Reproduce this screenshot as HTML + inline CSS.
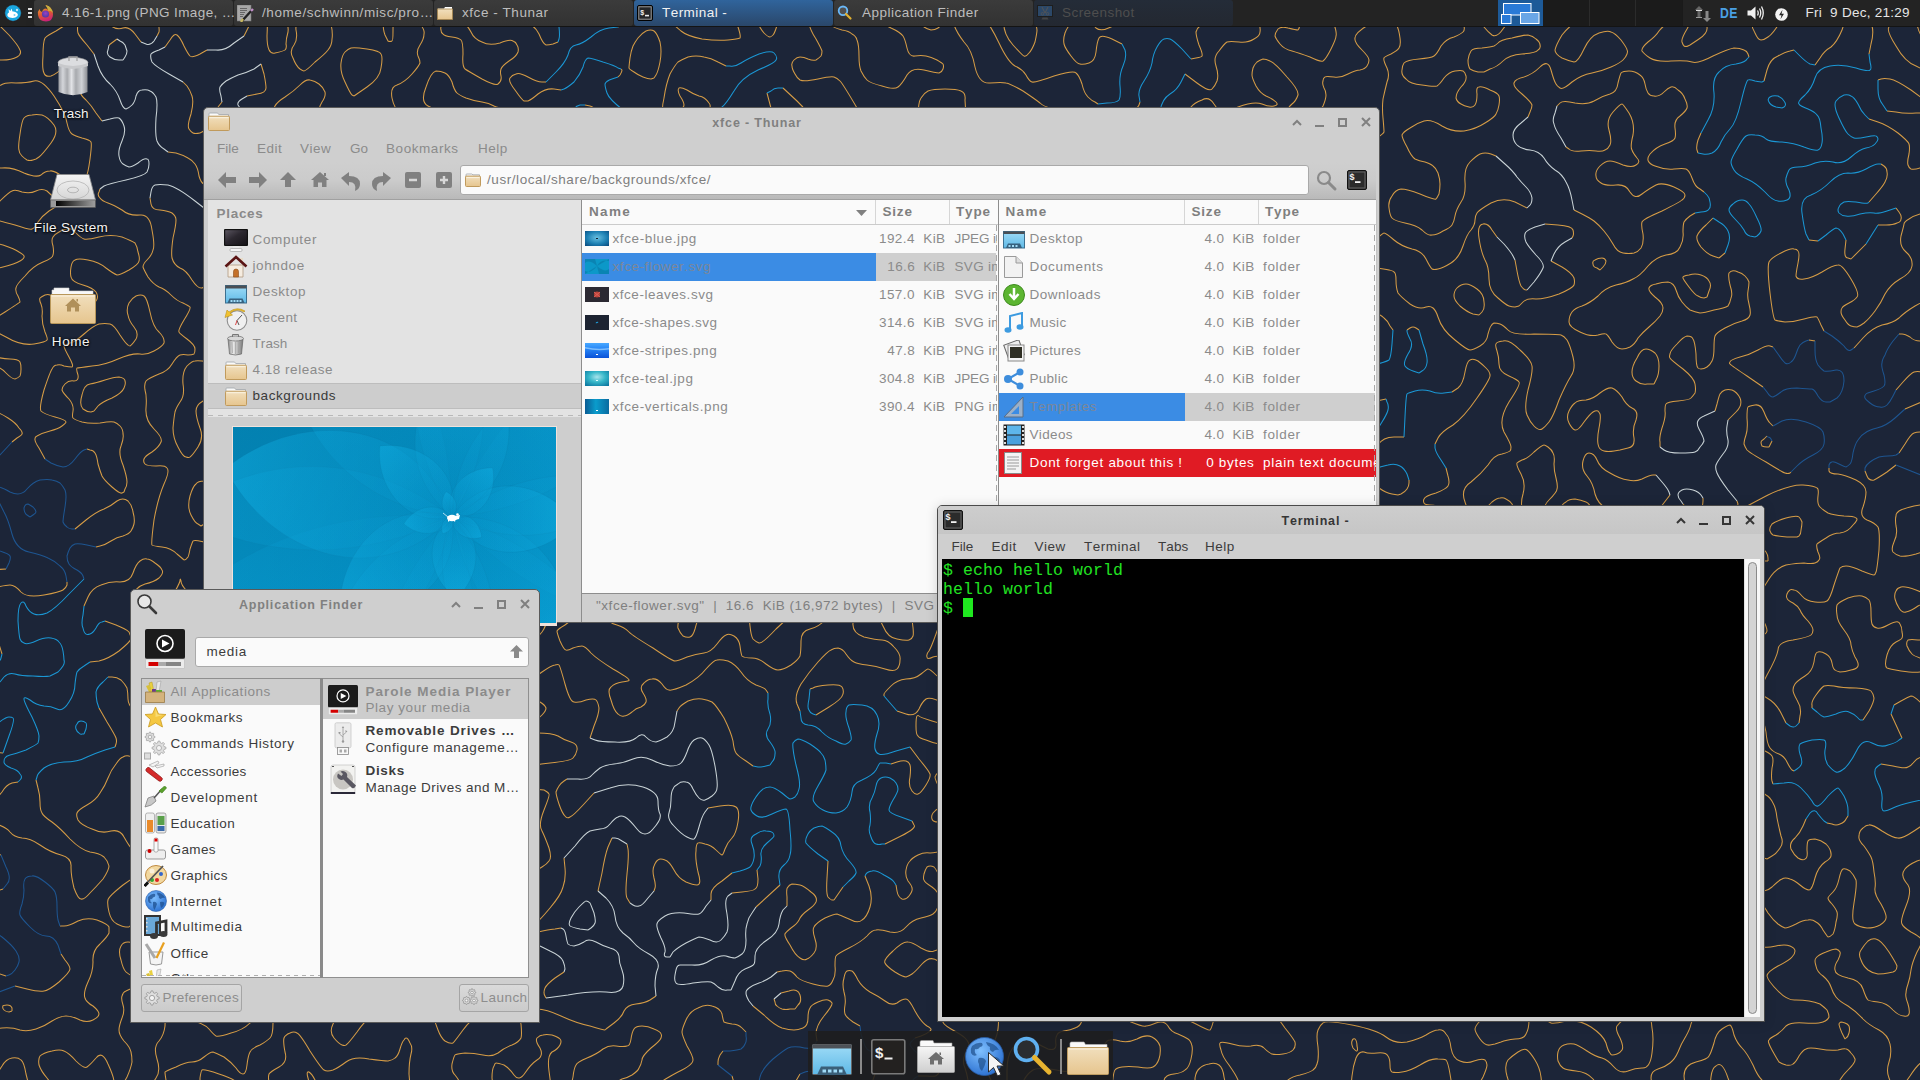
<!DOCTYPE html><html><head><meta charset="utf-8"><style>
*{margin:0;padding:0;box-sizing:border-box}
html,body{width:1920px;height:1080px;overflow:hidden;background:#1c2538}
body{position:relative;font-family:'Liberation Sans',sans-serif;font-kerning:none}
.t{position:absolute;white-space:pre;font-kerning:none}
.r{position:absolute}
</style></head><body>
<svg width="0" height="0" style="position:absolute"><defs>
<linearGradient id="fg" x1="0" y1="0" x2="0" y2="1"><stop offset="0" stop-color="#f1dfbd"/><stop offset="1" stop-color="#e6c58e"/></linearGradient>
<linearGradient id="dtg" x1="0" y1="0" x2="0" y2="1"><stop offset="0" stop-color="#9fdcf7"/><stop offset="1" stop-color="#5fb9e6"/></linearGradient>
<linearGradient id="mong" x1="0" y1="0" x2="1" y2="1"><stop offset="0" stop-color="#57525a"/><stop offset="1" stop-color="#1a181c"/></linearGradient>
<linearGradient id="tbg" x1="0" y1="0" x2="0" y2="1"><stop offset="0" stop-color="#f4f4f4"/><stop offset="1" stop-color="#a8a8a8"/></linearGradient>
<radialGradient id="globe" cx="0.4" cy="0.35" r="0.7"><stop offset="0" stop-color="#7fc0ff"/><stop offset="1" stop-color="#2a6fd0"/></radialGradient>
<linearGradient id="fg2" x1="0" y1="0" x2="0" y2="1"><stop offset="0" stop-color="#f5f5f5"/><stop offset="1" stop-color="#c9c9c9"/></linearGradient>
</defs></svg><svg class="r" style="left:0;top:0" width="1920" height="1080" viewBox="0 0 1920 1080"><g fill="none" stroke-width="1.05" stroke-linejoin="round"><path stroke="#d59c46" d="M-3 -9L-5 -2Q-6 6 -3 8Q0 10 4 10Q9 11 10 11Q12 10 13 8Q14 6 11 -2L9 -9M27 -9L28 -4Q30 0 33 3Q36 5 52 6Q69 7 71 5Q74 3 76 -3L78 -9M95 -9L98 -3Q101 3 100 9Q100 15 102 18Q104 21 111 26Q117 30 123 28Q129 26 135 34L141 42M157 36L159 32Q160 27 155 9L150 -9M216 -9L216 -4Q216 0 214 3Q213 6 201 9Q190 12 191 16Q193 21 197 25Q201 28 216 24Q231 19 233 13Q236 6 242 -2L249 -9M260 -9L263 -2Q267 5 273 8Q279 11 284 17Q289 24 288 32Q286 39 286 44Q287 48 285 50Q284 51 275 53Q267 55 267 36Q268 18 266 14Q264 9 259 12Q255 15 249 26L244 36M207 50L200 54Q192 58 190 56Q188 54 184 46Q180 37 177 35Q174 33 170 40L165 47M183 82L187 86Q190 90 192 96Q194 102 191 114Q187 126 189 129Q191 132 193 133Q195 134 200 133Q205 132 209 122Q213 112 218 107L222 102M261 64L264 74Q266 84 266 88Q266 93 257 94L247 96M240 108L244 111Q249 114 255 114Q261 114 267 113Q273 111 275 106Q277 102 285 97Q294 91 300 85Q306 79 310 80Q315 81 319 84Q323 87 325 92Q326 96 322 102Q318 108 320 114Q323 120 309 129Q295 138 288 147Q282 155 276 154Q270 152 268 142Q267 131 266 129Q264 127 261 126Q258 125 249 125Q240 126 231 135Q222 144 222 148Q222 153 224 156Q225 160 226 160Q228 161 236 158Q243 156 249 156Q255 156 257 158Q259 159 259 174Q258 189 257 191Q255 194 252 195Q249 196 243 195Q237 194 231 185Q225 176 224 176Q222 176 214 180Q207 184 204 184Q201 183 199 176Q198 168 195 164Q192 160 188 158Q183 155 176 153L168 152M94 54L87 45Q79 36 78 33Q77 30 78 24Q78 18 76 18Q75 18 69 22Q63 27 56 31Q48 35 45 38Q43 42 43 56Q42 69 44 73Q45 77 51 76Q57 74 63 67Q69 60 73 60Q77 60 79 63Q80 66 78 75Q77 84 79 90Q81 96 86 100Q91 105 96 113L102 121M100 189L99 192Q97 195 100 198Q102 201 108 203Q114 205 122 210Q129 216 140 215Q150 214 152 230Q155 246 153 250Q152 255 147 260Q143 264 143 267Q144 270 148 277Q153 284 159 287Q165 289 171 295Q177 301 183 303Q189 306 190 307Q191 309 184 320Q178 330 179 332Q179 333 187 339Q195 345 195 349Q195 353 194 354Q192 355 188 355Q183 354 180 355Q177 356 172 364Q168 371 159 374Q149 378 146 381Q144 384 145 390Q147 396 146 408Q145 420 154 429Q163 438 161 442Q159 447 152 452Q145 456 144 459Q143 462 145 464Q147 466 156 466Q165 465 167 468Q170 471 164 484Q158 498 154 520Q151 543 152 545Q153 546 162 547Q171 548 177 554Q183 559 184 560Q186 560 188 557Q189 555 190 549Q192 543 193 541Q195 539 212 544Q228 550 232 549Q237 548 242 541Q248 534 254 530Q260 525 261 522Q261 519 260 510Q258 501 264 495Q269 489 271 486Q272 483 271 480Q270 477 261 477Q252 477 248 474Q243 471 242 466Q242 462 247 459Q252 456 256 456Q261 456 268 463Q276 470 284 464Q291 459 298 468Q306 477 318 483Q330 488 333 488Q336 487 338 484Q340 480 339 474Q337 468 328 456Q318 443 302 440Q285 437 274 429Q264 421 252 428Q239 435 236 447Q234 459 226 463Q219 467 214 466Q210 465 208 462Q206 459 207 450Q207 441 213 435Q218 429 220 420Q223 411 226 410Q229 408 240 406Q252 404 256 402Q259 399 259 398Q259 396 248 387Q237 378 232 376Q228 374 224 377Q219 379 214 388Q210 398 203 401Q196 405 196 411Q196 417 200 428Q204 438 198 447Q192 456 190 457Q189 458 186 457Q183 457 178 447Q173 438 173 428Q174 417 175 412Q176 408 180 402Q185 396 183 384Q182 372 187 366Q192 361 195 361Q198 360 208 362Q219 364 237 359Q255 354 262 357Q270 359 272 361Q274 363 282 376Q289 390 290 394Q290 399 289 405Q288 411 288 414Q289 417 292 419Q294 420 302 421Q309 422 315 427Q321 432 324 430Q327 428 333 418Q339 408 338 405Q338 402 334 394Q330 387 330 382Q330 378 340 368Q351 358 354 357Q357 356 360 358Q363 361 364 366Q366 372 364 376Q363 381 354 392Q346 402 348 405Q349 408 353 409Q357 410 372 406Q387 401 394 403Q402 405 408 412Q414 419 418 418Q422 417 423 416Q425 414 423 411Q422 408 413 402Q403 396 398 380Q392 363 392 358Q393 354 394 353Q396 351 404 351Q411 350 417 352Q423 354 424 362Q426 370 429 375Q432 380 435 384Q438 387 442 390Q447 393 452 401Q456 408 462 411Q468 414 469 417Q470 420 467 423Q465 426 459 422Q453 419 448 419Q444 420 442 421Q440 423 439 429Q438 435 440 440Q441 444 449 447Q456 450 459 454Q462 459 463 464Q464 468 457 472Q450 477 449 480Q448 483 454 489Q460 495 463 502Q467 510 468 513Q468 516 466 518Q465 520 460 521Q456 522 447 519Q438 516 435 516Q432 516 428 519Q424 522 424 525Q424 528 428 532Q432 537 446 543Q459 550 476 553Q492 555 495 554Q498 552 498 546Q498 540 502 531Q507 522 507 512Q508 501 503 497Q498 493 488 491Q479 489 476 486Q474 483 474 480Q474 477 480 476Q486 474 490 476Q495 478 502 478Q510 478 514 482Q518 486 518 492Q519 498 522 500Q525 501 528 501Q531 500 535 496Q539 492 541 489Q542 486 539 476Q537 465 538 460Q540 456 543 455Q546 454 556 460Q567 465 578 463Q588 462 591 460Q594 458 596 456Q597 453 598 444Q599 435 598 432Q597 429 594 427Q591 425 584 425Q576 426 564 423Q552 421 548 426Q545 432 539 431Q534 430 532 431Q530 432 526 442Q522 453 517 458Q513 464 508 466Q504 469 498 469Q492 469 491 465Q489 462 489 456Q490 450 493 438Q497 426 494 417Q491 408 492 400Q493 393 488 388Q483 383 470 381Q457 378 458 369Q459 360 461 354Q463 348 463 336Q463 324 467 320Q471 316 476 316Q480 315 498 324Q516 332 522 336Q528 340 532 340Q537 339 540 340Q543 341 546 346Q549 351 558 358Q566 366 565 368Q563 369 555 374Q546 378 543 379Q540 379 538 377Q536 375 534 365Q531 355 530 354Q528 353 518 353Q507 353 502 355Q498 357 497 360Q497 363 499 368Q501 372 510 380Q519 389 528 390Q537 391 543 396Q549 401 566 395Q582 389 584 391Q586 393 587 401Q588 408 591 410Q594 413 597 412Q600 412 606 406Q612 401 616 395Q620 390 621 387Q621 384 614 380Q606 376 594 375Q582 373 579 371Q575 369 579 363Q582 357 584 351Q585 345 582 340Q579 336 572 330Q564 324 560 320Q557 315 557 312Q556 309 560 300Q563 291 562 288Q561 284 558 283Q555 282 552 282Q549 282 542 289Q534 296 532 296Q531 296 514 289Q498 282 488 286Q477 290 471 281Q466 273 469 270Q473 267 474 264Q475 261 475 258Q475 255 473 254Q471 252 468 255Q465 258 464 264Q464 270 463 272Q462 273 457 273Q453 273 447 270Q441 267 439 268Q438 269 436 291Q433 312 434 313Q435 315 441 316Q447 317 448 319Q449 321 447 327Q445 333 445 340Q445 348 442 349Q438 350 436 349Q434 348 434 339Q434 330 433 326Q431 321 421 322Q411 323 409 322Q407 321 406 308Q405 294 404 291Q402 288 399 288Q396 287 394 289Q393 290 392 296Q391 303 386 316Q381 330 377 331Q372 332 367 328Q363 324 362 314Q362 303 355 298Q348 294 336 282Q324 270 309 266Q294 262 284 264Q273 266 267 261Q261 257 256 256Q252 255 249 256Q246 257 245 262Q244 267 247 272Q249 277 252 278Q255 279 264 277Q273 275 276 276Q279 276 286 280Q294 285 296 288Q297 291 296 294Q294 296 288 300Q282 303 270 302Q258 301 255 302Q251 303 249 306Q247 309 247 314Q246 318 247 323Q249 328 252 329Q255 330 258 329Q261 328 272 319Q282 309 291 309Q300 308 310 305Q321 303 330 306Q339 308 346 316Q353 324 353 327Q353 330 351 333Q350 336 347 339Q345 341 342 342Q339 343 336 341Q333 340 330 332Q327 324 322 323Q318 322 315 324Q312 325 310 332Q307 339 309 348Q311 357 310 360Q308 363 306 364Q303 366 291 355Q279 345 274 343Q270 342 262 342Q255 343 244 335Q233 327 231 321Q229 315 234 309Q238 303 239 300Q240 297 234 288Q228 279 224 277Q219 276 213 281Q207 286 202 288Q198 289 192 280Q186 270 180 268Q174 265 172 258Q171 252 173 238Q176 225 176 220Q176 216 172 213Q168 211 160 210Q152 210 151 204L150 198M213 215L219 211Q225 206 229 207Q233 207 233 210Q233 213 231 220Q229 228 230 232Q230 237 221 242Q211 246 208 249Q205 252 206 255Q206 258 211 259Q216 260 224 254Q232 249 232 243Q232 237 242 234Q252 231 256 228Q260 225 267 216Q273 207 277 198Q281 189 287 184Q292 180 307 164Q321 149 326 147Q330 145 338 145Q345 144 354 142Q363 140 382 138Q402 136 405 139Q408 142 408 147Q407 153 404 156Q401 159 391 162Q381 165 380 168Q380 171 382 174Q384 177 384 180Q385 183 383 186Q381 189 374 195Q368 201 366 206Q364 210 367 219Q371 228 381 236Q390 244 391 248Q391 252 390 255Q389 258 379 257Q369 257 355 248Q341 240 340 237Q338 234 338 231Q339 228 345 220Q351 213 352 210Q353 207 351 201Q349 195 344 190Q339 186 326 184Q312 181 309 182Q306 183 306 184Q305 186 307 195Q309 204 312 213Q316 222 315 225Q314 228 307 230Q300 233 290 230Q279 227 274 230Q268 234 267 237Q266 240 267 243Q268 246 278 249Q288 252 296 250Q303 248 306 248Q309 249 322 255Q334 261 338 268Q341 276 343 278Q345 280 356 278Q366 277 374 280Q381 284 384 283Q387 283 390 279Q393 275 399 274Q405 274 417 267Q429 261 430 259Q432 257 434 250Q435 243 435 240Q435 237 432 232Q428 228 425 221Q423 215 420 220Q417 225 412 228Q408 231 404 231Q399 232 397 230Q396 228 395 220Q395 213 399 207Q402 201 404 192Q406 183 408 177Q411 171 414 169Q417 167 420 169Q423 170 429 175Q435 180 438 188Q442 195 444 197Q447 199 452 199Q456 199 462 194Q468 189 472 188Q477 188 480 192Q484 195 483 207Q482 219 489 224Q496 228 497 236Q499 243 507 251Q516 259 520 260Q525 260 537 258Q549 256 560 259Q570 262 579 253Q588 244 592 243Q597 241 599 242Q601 243 601 246Q601 249 599 256Q596 264 591 272Q585 279 585 282Q584 285 586 291Q588 297 587 303Q587 309 590 315Q594 321 596 328Q597 336 602 339Q606 342 612 341Q618 340 620 340Q621 341 624 344Q628 348 636 353Q645 359 650 369Q654 379 656 380Q657 381 664 379Q672 378 680 386Q687 395 692 393Q696 391 701 384Q706 378 715 376Q725 375 730 370Q734 366 734 364Q734 363 729 358Q723 354 720 349Q717 345 717 334Q718 324 722 315Q725 306 729 303Q732 300 735 301Q738 302 742 310Q747 318 752 315Q756 313 758 308Q760 303 761 291Q762 279 760 276Q759 273 758 273Q756 272 748 273Q741 275 738 274Q735 273 731 268Q727 264 725 260Q723 255 725 252Q727 249 731 247Q735 245 738 245Q741 245 747 248Q753 251 755 250Q756 249 757 246Q758 243 756 240Q755 237 748 234Q741 231 730 222Q720 213 718 208Q716 204 717 196Q718 189 716 187Q714 185 696 183Q678 180 674 182Q669 184 666 188Q662 192 663 196Q664 201 671 210Q678 219 679 222Q679 225 668 230Q657 235 651 235Q645 234 644 235Q643 237 643 240Q643 243 648 250Q653 258 651 267Q649 276 651 280Q654 284 662 289Q669 293 669 297Q670 300 668 304Q667 309 667 310Q668 312 675 314Q681 315 684 318Q686 321 688 329Q690 336 696 345Q701 354 701 357Q700 360 698 361Q696 363 690 362Q684 361 674 353Q664 345 656 341Q648 337 647 332Q647 327 654 320Q661 312 659 310Q657 309 653 307Q648 305 632 303Q615 301 609 303Q603 306 600 304Q597 303 596 302Q595 300 596 298Q597 297 607 290Q618 282 621 279Q624 275 626 267Q627 258 626 254Q624 249 612 239Q600 229 592 227Q585 225 579 216Q573 208 564 208Q555 209 549 205Q543 202 534 205Q525 209 518 204Q510 199 501 196Q493 192 490 188Q488 183 490 174Q492 165 492 153Q492 141 494 139Q495 137 498 136Q501 136 512 142Q523 147 533 149Q543 151 545 155Q547 159 545 165Q543 171 543 174Q543 177 548 180Q552 183 558 185Q564 187 568 187Q573 186 582 183Q591 180 592 178Q594 177 595 170Q597 162 601 161Q606 161 608 164Q609 168 606 178Q603 189 604 194Q604 198 607 200Q609 202 616 201Q624 200 630 201Q636 202 639 200Q643 198 644 195Q646 192 643 182Q640 171 633 165Q625 159 620 152Q615 145 607 140Q599 135 598 132Q597 129 598 122Q599 114 596 111Q594 107 590 106L585 105M574 111L575 117Q576 123 574 124Q573 125 562 125Q552 124 544 126Q537 127 532 125Q528 123 524 116Q519 109 508 109Q498 108 494 106Q489 103 482 102Q474 101 466 98Q459 95 457 93Q454 90 452 82Q449 75 445 73Q441 71 436 71Q431 72 426 87Q420 102 428 106Q435 110 444 111Q454 111 454 118Q455 126 458 130Q461 135 461 136Q460 138 456 140Q453 142 452 141Q450 141 449 135Q448 129 446 127Q444 126 432 128Q420 131 417 130Q414 129 410 123Q405 117 400 113Q394 108 392 98Q390 87 397 85Q405 82 412 74Q419 66 420 63Q420 60 418 56Q416 51 420 45Q424 39 424 34Q425 30 420 24Q415 18 406 17Q396 16 394 18Q393 21 393 31Q393 41 392 41Q390 42 388 41Q387 39 385 35Q383 30 383 21Q383 12 385 2L387 -9M359 -9L358 -6Q357 -3 354 0Q351 3 342 3Q333 3 332 4Q330 6 329 10Q329 15 331 24Q333 33 332 39Q332 45 328 50Q325 54 315 62Q306 71 304 71Q303 71 300 69Q296 66 293 58Q289 51 294 45Q298 39 296 30Q295 21 303 6L310 -9M429 -9L428 -3Q428 3 436 8Q445 12 443 20Q440 27 441 30Q441 33 443 34Q444 36 452 37Q459 38 461 40Q463 42 463 54Q462 66 465 69Q468 71 482 79Q495 86 498 84Q502 81 501 76Q500 72 501 69Q502 66 509 61Q516 57 518 52Q519 48 517 45Q516 42 513 41Q510 39 500 43Q489 46 482 42Q474 39 471 32Q467 24 458 18Q449 12 449 10Q448 9 453 0L457 -9M466 -9L469 -3Q472 3 475 5Q477 7 480 8Q483 9 490 8Q498 7 506 14Q513 21 524 22Q534 24 539 34Q543 44 546 45Q549 45 553 44L558 42M557 18 529 -9M557 -9L560 -1Q564 6 568 9Q573 12 578 11Q582 10 588 6Q594 2 598 -3L603 -9M638 -9L636 -4Q633 1 626 5Q619 9 621 16Q622 24 620 26L618 27M546 82L542 82Q537 82 528 77Q519 72 516 74Q512 75 510 78Q508 81 515 90Q522 100 524 101Q525 101 528 101Q531 100 538 94Q546 88 554 89L561 90M621 69L622 70Q622 72 620 75L618 77M636 120L642 129Q648 138 658 144Q669 151 673 156Q677 162 682 164Q687 165 688 164Q690 162 690 159Q690 156 686 152Q682 147 688 140Q693 132 694 124Q695 117 704 112Q713 108 709 103Q705 97 699 96Q693 94 687 90Q681 87 679 88Q677 90 680 96Q684 102 684 105Q684 108 678 111Q672 115 669 114Q666 114 664 113Q661 111 664 98Q666 84 670 74Q675 65 678 62Q681 60 688 57Q696 55 704 57Q711 58 718 62L726 66M718 111L721 118Q723 126 725 138Q727 150 729 151Q732 152 741 149Q750 146 758 140Q765 134 771 132Q777 130 772 112L767 93M783 88L797 101Q811 114 810 123Q808 132 817 146Q825 159 825 170Q826 180 827 185Q828 189 830 190Q831 191 838 190Q846 188 856 189Q867 190 873 184Q880 177 878 174Q876 171 866 162Q856 153 856 152Q856 150 863 144Q869 138 870 135Q871 132 857 108Q843 84 840 81Q837 78 834 77Q831 76 818 79Q804 82 800 80Q797 78 795 74Q792 69 792 66Q791 63 794 60Q797 57 800 57Q804 57 808 59Q813 61 816 60Q819 58 821 56Q822 54 822 51Q821 48 816 39Q810 30 809 23Q807 16 804 14Q801 13 791 13Q780 12 778 22Q775 33 773 35Q771 37 770 37Q768 37 764 33Q761 30 755 18Q749 6 750 -2L751 -9M724 -9L730 -3Q737 3 735 10Q734 18 738 27Q741 36 740 38Q738 39 728 40Q717 41 702 39Q687 36 681 31Q675 25 669 22Q663 20 657 5L651 -9M671 -9L674 -3Q677 3 682 5Q687 8 697 4Q708 0 711 -4L714 -9M823 -9L825 6Q827 21 831 25Q834 28 842 30Q849 31 852 34Q856 36 857 40Q859 45 859 56Q859 66 861 71Q864 77 867 80Q870 83 882 86Q894 90 898 87Q902 84 907 75Q912 67 924 70Q936 73 939 73Q942 72 943 69Q944 66 943 64Q942 63 937 60Q931 57 926 56Q921 55 915 56Q909 57 907 48Q905 39 903 36Q900 32 891 28Q882 23 873 22Q864 21 861 14Q858 6 857 -2L855 -9M888 -9L889 -3Q891 3 896 6Q900 8 904 7Q908 6 909 4Q910 3 909 -3L907 -9M920 -9L921 8Q922 24 924 27Q927 29 931 30Q935 30 938 28Q940 27 942 22Q945 16 948 16Q951 16 954 25Q957 33 964 42Q972 50 975 67Q979 84 990 83Q1002 82 1006 83Q1011 84 1023 91Q1035 99 1040 103Q1044 107 1052 108Q1059 109 1061 112Q1062 114 1063 122Q1063 129 1071 134Q1080 138 1086 147Q1092 157 1094 156Q1095 156 1095 155Q1095 153 1093 146Q1091 138 1092 135Q1093 132 1095 132Q1098 131 1104 133Q1110 135 1113 135Q1116 134 1118 131Q1120 129 1122 122Q1124 114 1131 111Q1138 108 1139 105L1140 102M1191 59L1196 58Q1202 57 1202 56Q1203 54 1199 45Q1196 36 1196 32Q1197 28 1200 26Q1203 24 1212 22Q1221 21 1225 16Q1228 12 1224 2L1220 -9M1074 -9L1078 2Q1081 12 1074 20Q1067 27 1065 33Q1063 39 1064 44Q1065 48 1071 56Q1077 64 1080 64Q1083 65 1089 63Q1095 61 1096 52Q1097 42 1099 38Q1101 34 1112 39L1122 44M1098 104L1095 102Q1092 101 1088 97Q1084 93 1082 84Q1079 75 1076 73Q1074 70 1054 76Q1035 83 1032 82Q1029 81 1026 75Q1022 69 1015 66Q1008 62 999 43Q990 24 984 19Q978 15 966 11Q954 8 952 -0L949 -9M1016 -9L1010 -3Q1005 4 1004 18Q1002 33 1013 45Q1023 56 1024 56Q1026 57 1029 53Q1032 50 1035 42Q1037 33 1037 30Q1037 27 1034 21Q1030 15 1037 9Q1044 4 1047 -3L1051 -9M1209 -9L1206 -4Q1204 0 1199 2Q1194 5 1186 4Q1179 4 1166 8Q1152 12 1143 9Q1134 6 1130 6Q1126 6 1125 8Q1123 9 1122 15Q1121 21 1111 27Q1101 32 1096 28Q1092 24 1089 20Q1086 15 1094 8Q1101 1 1102 -4L1104 -9M1257 -9L1255 0Q1252 9 1257 18Q1261 27 1260 32Q1260 36 1254 39Q1248 43 1239 42Q1230 41 1227 42Q1224 44 1219 51Q1213 57 1216 66Q1219 75 1217 81Q1215 86 1212 89Q1209 92 1197 83L1185 74M1158 123L1160 134Q1162 144 1166 149Q1170 154 1174 157Q1179 159 1184 160Q1188 161 1194 158Q1200 156 1202 159Q1203 162 1202 166Q1200 169 1194 170Q1188 171 1187 173Q1185 174 1181 182Q1176 190 1165 194Q1154 198 1162 208Q1170 218 1173 220Q1176 222 1180 218Q1185 214 1192 210Q1200 207 1206 198Q1212 189 1215 188Q1218 187 1221 188Q1224 190 1226 194Q1228 198 1229 206Q1230 214 1234 219Q1239 223 1240 227Q1240 231 1238 233Q1236 235 1230 234Q1224 233 1221 235Q1219 237 1223 244Q1227 252 1225 258Q1224 264 1216 262Q1209 261 1204 262Q1200 263 1198 265Q1196 267 1195 272Q1194 276 1196 279Q1197 282 1200 283Q1203 283 1208 282Q1212 281 1218 277Q1224 273 1227 283Q1230 293 1232 294Q1233 296 1240 293Q1248 290 1250 287Q1253 285 1253 282Q1254 279 1252 272Q1250 264 1256 255Q1262 246 1263 234Q1264 222 1268 218Q1272 214 1280 216Q1287 217 1290 217Q1294 216 1292 211Q1290 207 1287 204Q1284 201 1276 197Q1269 194 1267 191Q1265 189 1264 186Q1263 183 1265 181Q1266 180 1272 179Q1278 178 1286 183Q1293 187 1305 187Q1317 187 1321 183Q1325 180 1326 174Q1327 168 1324 164Q1322 159 1313 154Q1305 149 1302 141Q1299 132 1298 131Q1296 129 1288 132Q1280 135 1279 136Q1278 138 1278 146Q1277 153 1267 162Q1257 172 1254 171Q1251 170 1246 164Q1242 157 1234 159Q1227 160 1224 159Q1221 159 1218 156Q1216 153 1220 142Q1223 132 1223 123Q1223 114 1238 107Q1254 101 1262 104Q1269 107 1274 106Q1279 105 1276 102Q1273 99 1266 96Q1260 93 1256 86Q1252 78 1252 75Q1252 72 1253 68Q1254 65 1257 62Q1260 60 1263 59Q1266 59 1270 61Q1275 63 1287 77Q1299 90 1298 95Q1296 101 1292 104Q1287 108 1289 111Q1291 114 1295 116Q1299 118 1310 115Q1320 112 1323 106Q1326 99 1326 95Q1326 91 1324 88Q1322 84 1323 81Q1323 78 1325 77Q1326 76 1334 77Q1341 78 1348 74Q1356 70 1360 70Q1365 69 1367 66Q1369 63 1369 60Q1369 57 1362 50Q1354 42 1355 38Q1355 33 1368 25Q1380 16 1384 16Q1389 16 1392 19Q1394 21 1397 26Q1399 30 1400 38Q1401 45 1399 48Q1398 50 1391 54Q1384 57 1384 58Q1383 60 1387 68Q1390 75 1387 82Q1385 90 1383 99Q1382 108 1383 118Q1384 129 1384 132Q1383 134 1378 137Q1374 140 1362 134Q1350 128 1344 127Q1338 126 1335 128Q1332 130 1330 135Q1329 141 1329 147Q1330 153 1333 156Q1335 159 1347 161Q1359 163 1366 161Q1374 159 1376 160Q1377 162 1378 166Q1378 171 1377 177Q1375 183 1373 188Q1370 192 1363 200Q1356 207 1355 211Q1353 215 1352 216Q1350 216 1341 212Q1332 207 1331 208Q1329 208 1329 209Q1328 210 1331 216Q1334 222 1332 226Q1330 231 1325 234Q1320 237 1310 238Q1299 238 1297 242Q1295 246 1300 254Q1305 261 1316 264Q1326 267 1327 268Q1328 270 1318 281Q1308 293 1307 304Q1306 315 1308 317Q1311 319 1329 323Q1347 328 1350 327Q1353 326 1358 320Q1364 315 1367 314Q1371 313 1376 314Q1380 314 1384 318Q1388 321 1390 326L1393 330M1353 371L1351 370Q1350 369 1345 362Q1340 354 1336 350Q1332 346 1328 344Q1323 342 1317 342Q1311 341 1307 343Q1304 345 1301 350Q1299 354 1297 370Q1295 387 1298 396Q1301 405 1309 407Q1317 408 1322 422Q1326 435 1334 446Q1342 456 1345 458Q1348 459 1354 459Q1359 459 1364 458Q1368 458 1371 456Q1374 454 1378 445Q1383 437 1394 437L1404 437M1452 392L1458 388Q1463 384 1465 372Q1467 361 1470 360Q1473 358 1478 361Q1482 364 1486 368Q1490 372 1490 375Q1491 378 1477 398Q1464 417 1453 425Q1441 432 1438 438L1435 444M1446 468L1448 476Q1450 483 1448 486Q1446 489 1436 493Q1425 496 1424 499Q1423 501 1424 503Q1425 505 1430 505Q1434 505 1437 506Q1440 508 1442 510Q1444 513 1445 516Q1445 519 1443 521Q1440 523 1432 519Q1425 515 1416 520Q1407 525 1400 525Q1392 525 1389 527Q1386 529 1383 534Q1381 540 1382 546Q1383 552 1386 556Q1389 559 1398 561Q1407 562 1408 565Q1409 567 1408 570Q1408 573 1403 578Q1398 583 1392 585Q1386 586 1382 584Q1377 582 1371 573Q1365 565 1362 564Q1359 564 1357 573Q1354 582 1357 588Q1360 594 1361 598Q1361 603 1354 615Q1347 627 1342 626Q1338 626 1332 622Q1326 618 1325 616Q1325 615 1333 600Q1342 585 1337 578Q1332 570 1330 562Q1328 555 1324 553Q1320 551 1311 552Q1302 553 1298 557Q1295 561 1296 564Q1296 567 1304 572Q1311 576 1313 579Q1315 582 1315 585Q1315 588 1308 598Q1302 608 1293 606Q1284 605 1275 601Q1266 597 1264 600Q1261 603 1260 609Q1258 615 1255 619Q1251 624 1246 625Q1242 625 1238 621Q1233 617 1231 612Q1230 606 1235 590Q1241 573 1240 564Q1240 555 1241 553Q1242 551 1256 550Q1269 548 1275 545Q1281 542 1304 535Q1326 529 1329 529Q1332 530 1336 534Q1341 539 1344 540Q1347 541 1354 541Q1362 540 1365 537Q1369 534 1367 525Q1365 516 1361 508Q1356 500 1353 498Q1350 496 1343 494Q1335 492 1338 486Q1340 480 1339 473Q1338 465 1336 463Q1335 461 1332 461Q1329 460 1326 461Q1323 462 1321 470Q1318 477 1320 486Q1322 495 1314 505Q1305 515 1299 518Q1293 521 1287 520Q1281 520 1274 512Q1266 505 1257 505Q1248 506 1240 496Q1232 486 1235 478Q1238 471 1243 464Q1248 456 1249 447Q1251 438 1253 436Q1255 435 1261 434Q1268 432 1269 430Q1270 429 1271 424Q1271 420 1268 412Q1266 405 1269 396Q1272 387 1272 381Q1272 375 1271 373Q1269 371 1266 370Q1263 369 1252 373Q1242 376 1240 375Q1239 374 1238 372Q1238 369 1244 356Q1250 342 1260 338Q1269 333 1272 330Q1275 327 1277 309Q1279 291 1287 282Q1295 273 1294 271Q1293 269 1286 267Q1278 265 1274 268Q1270 270 1270 279Q1270 288 1261 297Q1252 306 1247 307Q1242 309 1236 304Q1230 298 1228 300Q1227 302 1226 311Q1225 321 1223 326Q1221 331 1218 335Q1215 339 1207 343Q1199 348 1198 351Q1196 354 1197 358Q1197 363 1194 366Q1191 369 1183 371Q1176 373 1168 367Q1161 360 1156 361Q1152 361 1142 358Q1131 356 1128 356Q1125 357 1126 369Q1127 381 1138 393Q1149 405 1148 408Q1147 411 1144 414Q1140 417 1132 419Q1125 422 1120 420Q1116 418 1114 413Q1111 408 1112 398Q1114 387 1110 385Q1107 383 1102 383Q1098 383 1096 385Q1093 387 1091 392Q1089 397 1082 401Q1074 405 1068 413Q1062 422 1050 425Q1038 428 1028 433Q1018 438 1015 442Q1013 447 1012 456Q1011 465 1015 472Q1020 480 1019 488Q1018 495 1021 502Q1024 510 1025 519Q1025 528 1022 529Q1020 531 1017 531Q1014 531 1005 526Q996 522 990 521Q984 520 982 521Q979 522 979 525Q978 528 979 534Q981 540 982 542Q984 544 994 541Q1005 539 1008 539Q1011 539 1016 547Q1021 555 1026 558Q1032 562 1034 562Q1035 562 1036 560Q1037 558 1036 549Q1034 540 1035 538Q1036 537 1055 537Q1074 538 1076 540Q1078 543 1074 549Q1070 555 1071 566Q1072 576 1066 582Q1059 588 1059 590Q1060 591 1062 593Q1065 595 1068 594Q1071 594 1076 590Q1080 586 1087 584Q1095 582 1101 579Q1107 576 1110 577Q1113 579 1119 586Q1125 594 1138 594Q1152 594 1154 593Q1157 591 1157 588Q1158 585 1154 579Q1151 573 1151 568Q1150 564 1152 561Q1154 558 1159 555Q1164 552 1161 537Q1158 522 1156 520Q1155 519 1149 524Q1143 529 1134 533Q1124 537 1122 546Q1119 555 1117 558Q1116 561 1111 564Q1107 566 1104 565Q1101 563 1096 559Q1091 555 1088 550Q1085 546 1087 543Q1089 541 1096 538Q1104 535 1106 533Q1108 531 1107 504Q1106 477 1094 470Q1083 463 1080 464Q1077 464 1074 467Q1071 471 1074 480Q1076 489 1074 500Q1072 510 1067 513Q1062 516 1056 516Q1050 515 1048 513Q1045 510 1047 501Q1049 492 1046 484Q1043 477 1047 463Q1050 448 1053 445Q1056 442 1060 439Q1065 436 1068 437Q1071 438 1077 444Q1083 451 1092 446Q1101 442 1112 443Q1122 444 1136 441Q1149 438 1152 441Q1154 444 1154 447Q1154 450 1147 456Q1140 462 1137 466Q1134 471 1136 473Q1137 475 1144 478Q1152 480 1156 483Q1160 486 1161 490Q1161 495 1158 501Q1155 507 1156 510Q1158 514 1161 510Q1164 507 1167 506Q1170 505 1178 508Q1185 511 1188 510Q1191 510 1192 504Q1194 498 1197 494Q1200 491 1204 489Q1209 486 1215 488Q1220 489 1221 490Q1222 492 1223 498Q1223 504 1231 510Q1239 516 1239 519Q1239 522 1238 523Q1236 524 1226 521Q1215 517 1208 518Q1202 519 1199 531Q1197 543 1197 552Q1197 561 1194 565Q1191 568 1185 569Q1179 570 1178 573Q1176 575 1177 582Q1178 588 1181 591Q1185 593 1188 594Q1191 594 1198 590Q1206 586 1209 588Q1212 591 1212 597Q1211 603 1206 615Q1201 627 1201 634Q1202 642 1199 646Q1197 651 1198 658Q1200 665 1203 666Q1206 667 1209 665Q1212 663 1210 656Q1209 648 1210 647Q1212 646 1222 648Q1233 651 1238 651Q1242 651 1252 649Q1263 646 1270 639Q1278 631 1284 633Q1290 635 1293 634Q1296 634 1299 622Q1302 610 1310 612Q1319 615 1320 616Q1322 618 1314 628Q1307 639 1307 644Q1308 648 1307 651Q1305 655 1300 657Q1296 659 1286 659Q1275 658 1272 661Q1270 663 1268 669Q1267 675 1267 688Q1267 702 1265 705Q1263 708 1257 711Q1251 713 1249 715Q1247 717 1246 722Q1245 726 1246 730Q1247 735 1246 737Q1245 740 1240 741Q1236 742 1230 736Q1224 729 1218 727Q1212 725 1203 728Q1194 731 1188 736Q1181 741 1181 744Q1181 747 1183 748Q1184 750 1189 752Q1194 753 1208 750Q1221 746 1227 746Q1233 746 1235 754Q1237 762 1236 765Q1234 768 1220 769Q1206 770 1201 778Q1196 786 1193 789Q1189 792 1195 794Q1200 796 1212 804Q1224 812 1230 814Q1236 815 1237 814Q1239 813 1241 807Q1243 801 1249 796Q1256 792 1258 782Q1260 772 1268 770Q1275 767 1276 765Q1278 763 1278 757Q1277 750 1273 741Q1269 732 1271 731Q1272 730 1281 732Q1290 734 1294 733Q1298 732 1298 728Q1297 723 1293 714Q1289 705 1290 700Q1292 696 1297 693Q1302 689 1304 690Q1305 690 1307 695Q1310 699 1313 702Q1317 704 1322 704Q1326 705 1329 702Q1333 699 1335 690Q1338 681 1330 669Q1322 657 1321 652Q1320 648 1331 646Q1341 643 1347 639Q1353 636 1359 634Q1365 632 1370 622Q1375 612 1382 607Q1389 601 1394 603Q1398 605 1402 611Q1407 618 1408 618Q1410 619 1420 616Q1431 613 1434 614Q1437 615 1443 621Q1449 626 1450 626Q1452 627 1455 624Q1457 621 1459 614Q1461 606 1460 600Q1459 594 1450 590Q1440 586 1437 583Q1434 580 1429 572Q1424 564 1424 558Q1423 552 1425 550Q1428 547 1431 547Q1434 548 1446 555Q1458 562 1464 564Q1470 565 1473 563Q1476 562 1477 558Q1479 555 1479 549Q1480 543 1476 537Q1471 531 1470 524Q1470 516 1465 502Q1460 489 1471 482Q1481 474 1488 465Q1494 455 1502 454Q1509 452 1510 451Q1511 450 1511 447Q1511 444 1504 432Q1498 420 1509 402Q1521 384 1519 382Q1518 380 1509 376Q1499 372 1499 364Q1499 357 1497 351Q1495 345 1496 344Q1496 342 1503 341Q1509 339 1520 350Q1531 360 1532 366Q1533 372 1528 390Q1524 408 1527 415Q1530 422 1534 426Q1539 431 1542 429Q1545 427 1549 422Q1553 417 1559 400Q1566 384 1571 376Q1576 369 1573 357Q1570 345 1567 340Q1564 336 1561 335Q1557 334 1534 334Q1512 335 1508 330Q1503 325 1500 324Q1497 323 1494 323Q1492 324 1491 326Q1490 327 1488 334Q1487 342 1480 346Q1473 350 1470 350Q1467 350 1455 340Q1442 330 1438 317Q1434 304 1426 307Q1419 310 1410 304Q1401 297 1398 293Q1396 288 1396 280Q1396 273 1394 272Q1393 270 1376 268Q1359 267 1353 269Q1347 271 1344 269Q1341 267 1342 264Q1342 261 1346 256Q1350 252 1357 250Q1365 248 1374 241Q1383 233 1384 233Q1386 233 1394 240Q1401 246 1412 249Q1422 251 1426 259Q1430 267 1432 269Q1434 270 1438 269Q1443 268 1451 263Q1459 258 1463 246Q1467 234 1471 230Q1475 225 1475 220Q1475 216 1477 213Q1479 210 1491 203Q1503 197 1515 202L1527 208M1496 156L1491 154Q1485 152 1480 154Q1476 156 1470 162Q1464 168 1465 182Q1466 195 1461 202Q1456 210 1455 216Q1454 222 1452 225Q1450 228 1443 231Q1437 235 1432 235Q1428 236 1422 230Q1416 225 1405 223Q1395 221 1392 218Q1390 216 1389 208Q1388 201 1392 196Q1395 190 1401 189Q1407 189 1420 194Q1434 200 1436 199Q1437 198 1439 194Q1440 189 1440 184Q1440 179 1438 173Q1436 168 1433 166Q1431 164 1425 162Q1419 161 1415 159Q1411 156 1407 147Q1402 138 1402 135Q1403 132 1410 128Q1417 123 1424 121Q1431 119 1442 126Q1452 132 1464 131Q1476 129 1485 123Q1495 117 1496 114Q1498 111 1499 105Q1500 99 1499 96Q1498 93 1490 90Q1482 86 1479 87Q1476 87 1477 94Q1477 102 1475 105Q1473 108 1469 107Q1464 106 1461 104Q1457 102 1456 98Q1456 93 1461 87Q1467 81 1466 76Q1465 72 1463 71Q1461 70 1455 71Q1449 72 1444 78Q1440 84 1437 86Q1434 87 1422 85Q1410 84 1406 79Q1401 75 1402 70Q1402 66 1404 63Q1407 60 1419 59Q1431 58 1434 56Q1437 54 1441 46Q1446 39 1454 37Q1461 34 1463 32Q1465 30 1464 26Q1464 21 1453 9Q1442 -3 1441 -6L1441 -9M1348 -9L1350 -4Q1352 0 1352 3Q1351 6 1348 9Q1344 12 1337 13Q1331 15 1334 24Q1337 33 1336 36Q1336 39 1331 49Q1326 59 1323 61Q1320 62 1310 57Q1299 53 1292 51Q1284 49 1280 44Q1276 39 1275 36Q1275 33 1278 29Q1281 26 1288 28Q1296 30 1298 30Q1299 29 1300 25Q1300 21 1299 6L1298 -9M1434 -9L1435 -4Q1436 0 1435 3Q1434 6 1432 9Q1429 12 1426 13Q1422 14 1406 9Q1389 3 1384 0Q1379 -3 1377 -6L1375 -9M1486 -9L1485 -3Q1485 3 1482 12Q1480 21 1484 27Q1488 32 1492 35Q1497 38 1503 29Q1509 20 1515 19Q1521 18 1522 17Q1523 15 1523 12Q1523 9 1517 6Q1512 3 1510 -3L1508 -9M1524 -9L1524 -2Q1525 6 1526 7Q1527 8 1533 9Q1539 9 1545 8Q1551 7 1561 2Q1572 -3 1573 -6L1575 -9M1609 -9L1603 -2Q1597 6 1583 16Q1569 26 1562 35Q1556 45 1555 50Q1555 54 1562 58Q1569 61 1574 62Q1578 62 1584 49Q1590 36 1599 33Q1608 30 1611 32Q1615 33 1621 40Q1627 48 1627 50Q1628 51 1627 54Q1626 57 1623 60Q1620 63 1611 67Q1602 71 1592 73Q1581 75 1572 82Q1563 90 1560 88Q1557 86 1556 84Q1554 81 1551 70Q1548 59 1540 67Q1533 74 1524 77Q1515 79 1514 83Q1513 87 1522 94Q1531 102 1532 105Q1532 108 1530 112L1528 117M1574 210L1582 214Q1590 218 1594 221Q1599 225 1604 231Q1609 237 1613 244Q1617 252 1623 253Q1629 254 1634 253Q1638 252 1641 248Q1644 243 1643 234Q1641 225 1642 222Q1643 219 1662 211Q1680 202 1682 200Q1685 198 1685 195Q1685 192 1674 187Q1662 182 1656 185Q1650 188 1642 194Q1635 200 1630 192Q1626 184 1616 185Q1605 186 1601 183Q1596 180 1596 176Q1595 171 1600 166Q1605 161 1610 161Q1614 161 1623 165Q1632 168 1636 165Q1641 162 1637 158Q1633 153 1632 150Q1630 147 1633 135Q1635 123 1629 113Q1623 104 1622 104Q1620 104 1613 112Q1606 120 1609 130Q1612 141 1610 145Q1608 149 1605 150Q1602 152 1596 151Q1590 150 1581 151Q1572 152 1569 149L1566 147M1557 106L1560 103Q1563 100 1575 103Q1587 105 1594 101Q1602 96 1610 94Q1617 92 1618 83Q1620 75 1621 73Q1623 71 1629 71Q1635 71 1640 75Q1644 78 1645 84Q1646 90 1648 93Q1650 96 1654 96Q1659 97 1664 92Q1668 88 1671 87Q1674 86 1678 90Q1683 93 1685 99Q1688 105 1687 108Q1686 111 1680 116Q1674 120 1675 128Q1676 135 1675 138Q1674 141 1665 144Q1656 147 1650 154Q1644 162 1655 166Q1665 170 1674 169Q1683 168 1686 169Q1689 170 1692 178Q1695 187 1700 189L1704 192M1695 213L1690 216Q1686 219 1684 222Q1683 225 1683 232Q1684 240 1680 247Q1677 254 1666 255Q1656 257 1648 266Q1640 276 1633 279Q1626 283 1616 285Q1605 288 1598 296Q1590 303 1582 306Q1575 308 1572 312Q1569 316 1569 322Q1569 327 1580 332Q1590 337 1598 335Q1605 333 1606 334Q1608 335 1612 342Q1617 349 1622 349Q1626 349 1630 347Q1635 344 1638 338Q1642 333 1649 327Q1656 321 1660 316Q1663 312 1663 308Q1663 303 1655 297Q1648 291 1649 288Q1650 285 1656 284Q1662 282 1668 282Q1674 283 1676 290Q1678 297 1682 302Q1686 307 1690 310Q1695 312 1700 313Q1704 313 1714 310Q1725 308 1728 306Q1730 303 1731 298Q1733 294 1730 285Q1728 276 1729 273Q1731 271 1732 271Q1734 270 1738 272Q1742 273 1745 276Q1748 279 1749 282Q1749 285 1748 291Q1747 297 1749 304Q1751 312 1750 315Q1749 319 1742 321Q1734 323 1725 328Q1716 333 1715 336Q1714 339 1714 348Q1714 357 1712 361Q1710 365 1707 367Q1704 369 1701 369Q1699 369 1698 368Q1696 366 1696 354Q1695 342 1693 339Q1692 336 1687 336Q1683 337 1677 344Q1670 351 1670 354Q1669 357 1670 358Q1671 360 1683 369Q1694 378 1695 384Q1696 390 1695 393Q1693 396 1691 398Q1689 400 1678 401Q1667 402 1666 404Q1665 405 1665 411Q1666 417 1662 428Q1659 438 1660 442L1660 447M1715 411L1717 404Q1719 396 1720 394Q1722 391 1725 390Q1728 389 1732 390Q1737 392 1740 398Q1743 405 1736 412L1728 420M1737 501L1738 504Q1738 507 1731 510Q1725 513 1716 514Q1707 514 1702 525Q1698 535 1688 532Q1677 529 1672 530Q1668 530 1665 532Q1663 534 1662 537Q1661 540 1663 543Q1664 546 1671 548Q1677 549 1679 552Q1682 555 1682 561Q1682 567 1678 572Q1674 578 1670 577Q1665 576 1659 568Q1653 561 1640 561Q1626 562 1616 572Q1605 582 1605 586Q1605 591 1614 598Q1623 605 1632 607Q1641 609 1642 609Q1644 608 1648 604Q1653 599 1659 598Q1665 596 1671 593Q1677 589 1682 591Q1686 592 1689 596Q1691 600 1690 603Q1690 606 1686 610Q1683 613 1679 622Q1675 630 1667 636Q1658 642 1659 644Q1659 645 1667 647Q1674 649 1680 649Q1686 649 1690 646Q1694 642 1695 633Q1697 624 1698 621Q1700 618 1710 616Q1719 615 1723 612Q1727 609 1728 603Q1728 597 1723 590Q1717 582 1718 580Q1719 579 1729 576Q1740 573 1728 564Q1717 555 1717 554Q1716 552 1721 548Q1725 543 1734 538Q1743 534 1744 531Q1746 528 1744 519Q1743 510 1744 508Q1745 507 1768 495Q1791 484 1803 485Q1815 486 1817 488Q1819 489 1818 496Q1817 504 1820 507Q1823 510 1828 513Q1833 515 1844 516Q1854 516 1856 518Q1859 519 1853 525Q1848 532 1840 533Q1833 533 1826 538Q1818 543 1817 544Q1816 546 1818 552Q1821 558 1819 560Q1818 562 1815 563Q1812 564 1804 563Q1797 563 1786 565Q1776 568 1769 579Q1761 591 1760 597Q1758 603 1758 608Q1758 612 1763 620Q1767 627 1767 631Q1767 635 1754 639Q1740 643 1725 644Q1710 645 1709 648Q1709 651 1714 663Q1719 675 1723 680Q1726 684 1738 692Q1750 699 1751 702Q1752 705 1758 712Q1764 720 1766 732Q1767 744 1770 748Q1773 752 1779 754Q1784 756 1787 762Q1790 768 1792 770L1794 771M1902 738 1891 714M1894 705L1901 701Q1908 697 1911 696Q1914 696 1920 702L1926 708M1654 -9L1653 -2Q1652 6 1650 9Q1647 11 1636 8Q1626 5 1619 -2L1612 -9M1836 -9L1835 -4Q1834 0 1841 9Q1847 18 1842 30Q1837 42 1831 47Q1824 51 1820 58L1815 65M1794 50L1790 51Q1785 52 1778 56Q1770 59 1767 70L1764 81M1698 153L1697 150Q1696 147 1698 140L1701 133M1749 57L1748 54Q1747 51 1744 50Q1740 48 1734 48Q1728 49 1713 56Q1698 64 1692 62Q1686 60 1671 61Q1656 62 1650 58Q1644 54 1642 51Q1641 48 1648 42Q1656 36 1659 31Q1662 27 1670 21Q1677 16 1683 4L1690 -9M1712 -9L1714 -2Q1716 4 1720 7Q1725 9 1731 6Q1736 3 1739 -3L1742 -9M1786 -9L1784 -6Q1782 -3 1773 -1Q1764 1 1759 6Q1753 12 1752 20Q1751 27 1755 33Q1758 40 1761 40Q1764 40 1768 37Q1773 34 1780 22Q1788 9 1800 8Q1812 6 1819 2Q1826 -3 1827 -6L1828 -9M1926 167L1920 168Q1914 170 1911 169Q1909 168 1908 165Q1907 162 1909 154Q1910 147 1909 144Q1908 141 1898 133Q1887 125 1878 122L1869 119M1869 54L1871 44Q1874 33 1872 26Q1871 18 1875 9Q1880 0 1879 -4L1878 -9M1909 -9L1910 -3Q1911 3 1911 8Q1910 12 1908 15Q1905 17 1898 21Q1891 24 1889 27Q1886 30 1896 46Q1905 62 1916 66L1926 71M1690 45L1699 39Q1708 33 1707 27Q1707 21 1704 18Q1701 15 1696 17Q1692 19 1687 29Q1681 39 1682 42Q1683 45 1684 46Q1686 47 1688 46L1690 45M1926 39L1922 36Q1919 33 1918 28Q1916 24 1918 21Q1920 18 1923 17L1926 16M-9 60L2 60Q12 60 17 57Q22 54 20 50Q18 45 9 35Q0 26 -4 22L-9 19M654 78L651 79Q648 79 643 77Q638 75 634 72Q629 69 629 68Q629 66 630 58Q631 51 633 46Q635 42 638 38Q642 33 646 31Q651 29 654 31Q657 33 660 42Q662 51 660 62Q658 72 656 75L654 78M1484 72L1490 69Q1497 67 1503 61Q1509 55 1522 54Q1536 53 1538 50Q1541 48 1540 45Q1540 42 1536 39Q1533 36 1528 35Q1524 35 1512 38Q1500 40 1498 43Q1496 45 1494 46Q1491 47 1482 48Q1473 48 1471 51Q1469 54 1468 60Q1468 66 1470 69Q1473 71 1478 72L1484 72M117 39 109 45M354 96L352 95Q350 93 345 82Q340 72 341 63Q342 55 345 52Q348 49 351 48Q354 47 367 49Q380 51 381 54Q383 57 381 68Q380 78 367 87L354 96M-9 168L2 168Q12 167 24 173Q36 178 41 175Q45 171 50 171Q54 170 63 177Q72 183 75 184Q78 184 81 183Q84 181 86 177Q88 174 90 159Q92 144 91 142Q90 140 82 138Q75 136 72 134Q69 132 67 123Q66 114 54 96Q42 79 34 81Q27 83 16 83Q6 82 1 85Q-5 87 -5 90Q-6 93 -3 104Q-0 114 -2 129Q-4 144 -6 146L-9 149M1926 101L1911 90Q1896 80 1890 79Q1884 78 1881 79L1878 80M1887 111L1896 112Q1905 114 1916 113L1926 113M888 504L892 501Q896 498 898 492Q901 486 900 483Q899 480 892 468Q885 456 886 452Q887 447 892 444Q897 441 910 447Q924 452 931 449Q938 447 943 444Q947 441 959 426Q971 411 970 408Q970 405 968 404Q966 402 957 399Q948 396 945 398Q942 400 938 408Q933 416 930 419Q927 422 920 420Q912 418 904 421Q897 425 893 422Q889 420 889 417Q888 414 893 406Q897 399 897 398Q897 396 890 390Q883 384 882 380Q881 375 881 372Q882 370 890 374Q897 377 901 385Q905 393 907 393Q909 393 922 380Q936 366 936 364Q936 363 932 357Q928 351 927 344Q926 336 916 330Q906 324 906 321Q906 318 912 307Q918 297 921 295Q924 293 929 295Q935 297 933 315Q931 333 937 338Q942 343 943 341Q944 339 945 332Q946 324 949 320Q951 316 954 316Q957 316 966 318Q975 321 978 320Q981 319 981 317Q982 315 978 310Q975 306 962 300Q950 294 955 290Q960 286 964 277Q969 268 972 267Q975 265 981 268Q988 270 992 280Q996 290 1002 291Q1008 293 1012 291Q1017 290 1018 286Q1019 282 1013 278Q1007 273 1006 270Q1005 267 1009 260Q1013 252 1010 240Q1007 228 1009 220Q1011 212 1018 203Q1024 195 1027 195Q1029 194 1030 196Q1030 198 1029 202Q1028 207 1030 210Q1031 213 1037 222Q1044 231 1048 233Q1053 235 1055 233Q1056 231 1053 224Q1049 216 1049 207Q1049 198 1050 194Q1052 189 1056 187Q1059 186 1062 187Q1065 189 1074 199Q1083 210 1085 220Q1087 231 1083 240Q1080 249 1077 251Q1074 253 1070 253Q1065 253 1059 250Q1053 247 1048 249Q1044 251 1041 258Q1038 264 1038 267Q1039 270 1041 272Q1043 273 1051 277Q1059 281 1071 283Q1083 284 1089 290Q1095 295 1098 296Q1101 296 1108 290Q1116 285 1124 282Q1131 280 1131 272Q1132 264 1133 262Q1134 260 1146 261Q1158 261 1168 259Q1179 257 1182 252Q1185 246 1185 243Q1186 240 1184 237Q1183 234 1179 232Q1176 230 1173 234Q1170 238 1167 240Q1164 241 1159 239Q1154 237 1151 232Q1147 228 1146 220Q1144 213 1144 210Q1144 207 1147 202Q1149 198 1143 196Q1136 195 1134 194Q1133 192 1140 180Q1148 168 1148 162Q1147 156 1145 153Q1143 150 1140 150Q1137 149 1134 149Q1131 150 1125 158Q1119 165 1111 168Q1104 171 1108 177Q1113 183 1122 189Q1131 195 1133 201Q1135 207 1134 212Q1133 216 1126 222Q1119 228 1121 234Q1122 240 1122 244Q1122 249 1120 250Q1119 252 1116 252Q1113 252 1110 249Q1108 246 1107 242Q1106 237 1110 231Q1114 225 1114 224Q1114 222 1106 208Q1099 195 1095 186Q1092 177 1082 176Q1071 174 1060 166Q1050 158 1040 162Q1029 166 1020 166Q1012 165 1011 156Q1010 147 1000 137Q990 127 987 127Q984 128 980 136Q975 144 972 143Q969 142 968 138Q966 135 967 129Q969 123 967 116Q965 108 965 100Q966 93 961 91Q957 89 945 89Q933 89 928 91Q924 93 921 98Q918 102 918 119Q918 135 908 136Q897 137 895 139Q893 141 893 144Q893 147 897 152Q900 158 903 159Q906 161 909 159Q912 158 918 152Q924 145 931 146Q938 147 936 156Q934 165 923 169Q912 174 911 177Q909 180 910 183Q910 186 914 190Q918 194 922 197Q927 199 928 198Q930 197 933 191Q936 185 938 183Q939 182 940 182Q941 183 944 190Q946 198 948 201Q951 204 956 207Q960 210 969 213Q978 216 982 219Q985 222 986 228Q988 234 984 240Q981 246 974 251Q966 257 958 253Q949 249 941 248Q933 246 926 234Q918 222 911 219Q903 217 896 210Q888 203 879 202Q870 201 866 207Q861 212 850 210Q840 209 834 206Q828 203 825 205Q822 206 819 213Q817 219 817 224Q817 228 826 238Q834 248 843 252Q852 255 855 255Q858 254 864 249Q870 245 876 245Q882 245 890 250Q898 255 904 268Q909 282 909 284Q910 285 908 286Q906 288 898 291Q891 294 889 299Q887 303 887 315Q888 327 892 333Q897 339 898 344Q898 348 891 354Q884 360 882 364Q880 369 874 369Q867 369 864 370Q862 372 860 375Q858 378 858 381Q859 384 864 398Q870 411 864 423Q859 435 860 444Q862 453 862 464Q862 474 858 484Q854 495 856 497Q858 500 864 502Q870 504 874 505Q879 506 883 505L888 504M1206 121L1202 121Q1197 121 1193 116Q1189 111 1191 107Q1194 103 1202 100Q1209 96 1214 104Q1219 111 1219 112Q1218 114 1212 118L1206 121M1046 141L1047 140Q1049 138 1045 134Q1041 129 1032 124Q1023 120 1018 114Q1014 107 1011 108Q1008 108 1007 110Q1006 111 1006 114Q1007 117 1012 128Q1018 138 1021 139Q1023 140 1035 141L1046 141M825 124L822 124Q819 124 818 122Q816 120 817 117Q817 114 820 112Q822 110 825 114Q827 117 826 121L825 124M36 159L33 160Q30 161 27 160Q24 158 22 156Q19 153 19 150Q18 147 20 134Q22 120 24 118Q27 115 32 115Q36 114 42 115Q48 117 54 125Q59 132 51 143Q42 155 39 157L36 159M978 195L972 195Q966 195 964 192Q962 189 962 186Q962 183 969 176Q976 168 978 161Q981 154 984 153Q987 153 997 159Q1007 165 1007 172Q1006 180 1004 184Q1003 189 1001 190Q999 192 988 194L978 195M1851 259L1848 258Q1844 258 1845 249L1846 240M1818 241 1809 240M1881 164L1884 166Q1887 168 1887 172Q1888 177 1885 182Q1883 186 1876 194L1869 202M1896 208L1899 212Q1902 216 1901 219Q1901 222 1897 223Q1893 225 1886 225L1878 225M1866 244 1851 259M809 330L814 326Q819 321 825 318Q831 315 836 316Q840 316 846 319Q852 322 856 313Q859 303 867 296Q874 288 875 284Q875 279 872 277Q870 274 866 274Q861 273 855 280Q849 286 844 288Q840 290 836 289Q831 288 825 285Q818 282 816 279Q814 276 818 272Q822 267 822 262Q822 258 815 254Q808 249 807 242Q807 234 801 228Q795 222 792 214Q790 207 790 201Q791 195 797 190Q803 186 803 183Q802 180 797 177Q792 175 784 177Q777 180 766 176Q756 172 750 172Q744 172 741 174Q738 177 737 180Q737 183 741 189Q745 195 746 205Q747 214 750 216Q753 217 759 217Q765 216 776 231Q786 246 793 251Q800 255 795 273Q791 291 793 300Q795 309 792 315Q788 321 792 324Q795 327 802 328L809 330M-9 220L-4 220Q0 221 15 225Q30 230 32 229Q35 228 38 222Q42 216 49 211Q56 207 56 206Q57 204 55 200Q52 195 47 191Q42 188 36 191Q30 194 22 192Q15 189 12 191Q9 192 0 201L-9 209M1926 300L1915 306Q1905 312 1899 318Q1893 323 1882 325Q1872 328 1863 338L1854 348M1824 331L1821 325Q1818 318 1817 317Q1815 316 1804 319Q1794 322 1785 322Q1777 321 1775 320Q1773 318 1770 293Q1767 267 1769 262Q1771 258 1781 253Q1791 248 1794 249Q1797 249 1798 251Q1800 253 1798 263Q1796 273 1796 276Q1797 280 1804 279Q1812 278 1822 272Q1833 265 1838 265Q1842 264 1851 279Q1860 294 1857 297Q1855 300 1849 303Q1843 306 1842 308Q1841 309 1841 312Q1841 315 1845 320Q1848 325 1851 326Q1854 327 1857 327Q1860 326 1864 323Q1869 319 1875 311Q1881 303 1885 294Q1890 285 1900 279Q1911 273 1912 266Q1913 258 1906 252Q1899 246 1901 236Q1904 225 1904 224Q1904 222 1909 219Q1913 216 1920 214L1926 213M546 239L543 239Q540 239 538 236Q537 234 536 230Q535 225 536 222Q537 219 542 219Q546 219 548 221Q549 223 549 227Q550 231 548 235L546 239M1719 258L1713 256Q1707 254 1701 247Q1696 240 1697 236Q1699 231 1706 225L1713 218M1725 253 1719 258M1519 306L1523 302Q1527 298 1536 299Q1545 299 1559 294Q1573 288 1574 285Q1575 282 1574 278Q1572 273 1562 267L1551 261M1572 238L1573 236Q1574 234 1573 230Q1572 226 1558 225L1545 224M1527 290L1526 290Q1524 290 1521 286Q1519 282 1517 271L1515 260M1497 237L1492 230Q1488 223 1483 224Q1477 225 1479 238Q1481 252 1485 260Q1489 267 1489 279Q1489 291 1498 298Q1506 305 1509 306Q1512 307 1515 307L1519 306M-9 329L6 337Q21 346 34 344Q46 342 47 340Q48 339 45 332Q42 324 42 316Q43 309 41 304Q39 300 40 298Q41 297 45 295Q48 294 50 295Q51 295 53 302Q54 309 60 313Q66 317 80 311Q93 305 96 301Q99 297 96 292Q93 288 83 285Q72 282 71 277Q70 273 71 267Q72 261 75 260Q78 258 88 260Q99 262 106 268Q114 274 117 275Q120 275 129 270Q139 264 139 261Q140 258 138 252Q137 246 135 243Q132 241 122 237Q111 234 99 237Q87 240 84 239Q81 238 76 233Q72 228 68 229Q63 229 59 232Q55 234 53 237Q51 240 53 246Q54 252 53 255Q53 258 43 262Q33 266 25 276Q16 285 16 288Q15 291 18 296Q20 300 20 302Q19 303 5 312L-9 321M708 309L704 309Q699 308 695 298Q691 288 686 284Q681 279 676 270Q671 261 671 258Q671 255 677 242Q684 229 692 233Q701 237 706 244Q711 252 711 255Q711 258 708 268Q705 279 708 290Q711 300 709 305L708 309M-9 270L3 267Q15 264 20 261Q25 258 24 256Q24 255 19 252Q15 249 3 245L-9 242M1600 270L1603 267Q1606 264 1606 261Q1605 258 1602 258Q1598 258 1595 260Q1592 261 1593 264Q1593 267 1597 268L1600 270M1014 417L1018 414Q1022 411 1022 402Q1022 393 1027 381Q1032 369 1032 367Q1032 365 1028 362Q1023 359 1021 355Q1020 351 1019 345Q1018 339 1021 334Q1024 330 1031 326Q1038 322 1053 325Q1068 329 1076 335Q1084 342 1087 348Q1089 355 1092 356Q1095 358 1107 356Q1119 353 1124 346Q1129 339 1136 335Q1143 331 1146 332Q1149 334 1154 341Q1158 348 1161 349Q1164 349 1172 340Q1180 330 1181 320Q1182 309 1183 306Q1184 303 1176 289Q1167 275 1164 274Q1161 272 1158 274Q1155 275 1151 282Q1146 288 1144 296Q1142 303 1135 309Q1128 314 1122 323Q1116 331 1113 332Q1110 334 1107 334Q1104 334 1101 332Q1098 330 1095 321Q1091 312 1089 310Q1086 307 1074 303Q1062 298 1050 295Q1038 293 1034 295Q1029 297 1022 306Q1014 315 1013 323Q1011 331 1009 334Q1007 336 1002 338Q996 341 990 342Q984 342 974 347Q963 353 956 354Q948 355 946 358Q943 360 942 362Q942 363 943 366Q945 369 956 376Q966 384 980 400Q993 417 998 418Q1002 420 1008 418L1014 417M1707 297L1704 298Q1701 298 1698 296Q1695 295 1689 287Q1683 279 1683 278Q1682 276 1689 275Q1695 273 1701 275Q1707 277 1709 281Q1712 285 1709 291L1707 297M1356 308L1353 306Q1350 305 1349 301Q1347 297 1347 293Q1347 290 1348 287Q1350 284 1353 285Q1356 287 1358 290Q1360 294 1360 298Q1360 303 1358 306L1356 308M1479 315L1482 312Q1485 309 1484 302Q1484 294 1477 289Q1470 284 1466 284Q1461 284 1457 288Q1454 291 1454 296Q1454 300 1460 306Q1467 312 1473 314L1479 315M124 492L125 489Q127 486 127 482Q127 477 123 465Q118 453 121 446Q124 438 123 434Q123 429 120 426Q117 423 114 422Q111 421 100 423Q90 424 82 422Q75 420 73 418Q72 417 73 411Q74 405 69 399Q63 393 62 390Q62 387 65 384Q69 380 74 381Q79 381 78 375Q76 369 77 368Q78 368 92 366Q105 365 118 359Q132 353 140 354Q147 355 154 351Q162 347 164 343Q165 338 159 332Q153 327 150 312Q147 298 144 296Q141 294 136 296Q132 298 129 303Q126 309 128 315Q129 321 134 327Q139 333 136 339Q132 345 130 346Q129 346 128 345Q126 344 120 335Q114 325 110 324Q105 323 99 324Q93 326 84 334Q75 342 70 343Q65 345 64 346Q64 348 69 357Q74 366 72 367Q69 367 64 366Q60 364 57 365Q54 365 52 369Q50 372 44 390Q39 408 41 411Q44 414 55 417Q66 420 66 422Q66 423 62 426Q58 429 50 431Q42 433 37 436Q32 438 39 448L45 459M87 449L90 450Q93 450 95 453Q97 456 98 464Q100 471 102 476Q104 480 112 487Q120 494 122 493L124 492M822 504L823 501Q824 498 822 494Q820 489 820 486Q820 483 826 474Q832 465 830 463Q828 460 822 457Q816 455 813 452Q810 449 806 442Q802 435 802 431Q801 426 802 426Q804 425 814 431Q825 437 831 434Q837 432 838 427Q839 423 834 416Q830 408 829 404Q829 399 830 395Q831 391 840 379Q849 366 849 361Q849 355 842 351Q834 347 828 346Q822 345 821 348Q820 351 825 358Q830 366 830 369Q830 372 816 381Q801 390 800 393Q799 396 799 406Q798 416 796 416Q795 416 781 393Q767 369 767 367Q768 365 771 363Q774 361 782 364Q789 367 790 365Q791 363 790 362Q790 360 777 346Q765 332 756 328Q747 324 741 343Q735 363 735 364Q736 366 740 370Q744 375 746 380Q748 384 748 393Q748 402 745 410Q742 417 743 418Q745 420 755 423Q765 426 769 429Q774 432 777 437Q780 441 785 455Q791 468 798 477Q806 486 807 495Q808 504 810 505Q813 506 817 505L822 504M1407 330L1410 328Q1413 326 1416 328L1419 330M225 337L222 336Q218 336 218 333Q219 330 220 329Q222 327 225 329Q228 330 227 333L225 337M865 348L867 345Q869 342 868 339Q867 337 864 334Q861 332 858 332Q855 331 854 335Q853 339 854 344Q855 348 860 348L865 348M1926 373L1922 372Q1917 371 1914 372Q1911 373 1903 382L1896 390M1899 334L1902 334Q1905 334 1910 337Q1914 341 1920 341L1926 342M1763 387L1747 376Q1732 366 1730 364Q1729 363 1730 362Q1730 360 1740 357Q1749 355 1758 350Q1767 345 1770 346L1773 347M1809 340 1815 341M999 382L994 382Q990 383 986 376Q983 369 983 363Q984 356 986 354Q987 352 990 350Q993 349 996 350Q999 352 1001 356Q1004 360 1003 368Q1003 375 1001 378L999 382M1654 384L1656 380Q1659 375 1659 366Q1659 357 1655 353Q1650 349 1646 349Q1641 349 1637 358Q1632 366 1632 372Q1632 378 1636 381Q1641 385 1647 384L1654 384M-9 366L-4 367Q0 367 6 373Q12 379 15 379Q18 378 20 376Q21 374 21 369Q21 364 20 362Q18 359 10 359Q3 359 -3 357L-9 354M1070 393L1074 384Q1079 375 1076 368Q1073 360 1066 357Q1059 354 1048 355Q1036 357 1035 358Q1034 360 1034 361Q1035 363 1040 364Q1044 365 1052 377Q1059 389 1062 391Q1065 394 1067 393L1070 393M94 411L98 406Q102 402 112 398Q122 393 124 388Q126 384 125 381Q125 378 119 377Q114 377 105 380Q96 383 90 384Q84 385 82 395Q79 405 83 409Q87 412 91 412L94 411M1341 396L1330 397Q1320 398 1318 395Q1316 393 1318 390Q1320 388 1323 386Q1326 385 1334 385Q1341 386 1344 388Q1346 390 1346 392Q1346 393 1344 395L1341 396M1620 450L1628 448Q1635 447 1634 438Q1632 429 1636 420Q1639 411 1632 408Q1626 405 1622 397Q1617 390 1612 388Q1608 387 1600 393Q1593 399 1586 400Q1578 400 1575 403Q1572 405 1569 411Q1566 417 1569 423Q1572 429 1575 430Q1578 431 1584 422Q1590 414 1593 412Q1596 410 1598 411Q1599 412 1600 414Q1601 417 1599 428Q1597 438 1598 444Q1599 450 1604 451Q1608 452 1614 451L1620 450M768 693L766 690Q765 688 756 685Q747 681 741 672Q735 664 728 661Q720 659 717 660Q714 660 706 669Q699 678 686 685Q672 691 669 690Q666 690 662 684Q657 678 652 679Q648 679 644 683Q639 687 643 693Q647 699 646 702Q645 705 641 707Q636 708 632 712Q627 716 624 716Q621 717 618 714Q614 711 611 700Q607 690 611 687Q615 683 622 682Q630 681 629 680Q629 678 613 669Q597 659 591 653Q585 646 582 646Q579 646 573 648Q567 651 566 650Q564 650 560 641Q557 633 557 631Q558 629 565 625Q572 621 575 609Q579 598 585 593Q591 587 597 576Q602 564 606 561Q609 558 612 557Q615 556 624 560Q633 563 639 559Q645 555 648 556Q651 556 660 566Q669 576 667 586Q665 597 662 603Q659 609 656 612Q652 615 647 617Q642 619 638 619Q633 619 631 616Q630 612 630 608Q631 603 634 600Q636 597 642 594Q648 591 648 590Q648 588 647 587Q645 586 640 585Q636 584 618 592Q601 600 599 603Q598 606 599 609Q600 612 604 617Q609 623 617 625Q624 627 629 632Q633 636 653 648Q672 661 675 661Q678 661 687 657Q696 654 704 653Q711 652 717 644Q723 636 726 635Q729 633 734 636Q739 639 740 646Q741 654 742 656Q744 658 752 658Q759 658 766 664Q774 670 778 670Q783 670 791 665Q798 660 800 656Q801 651 801 641Q801 631 810 629Q819 627 826 619Q833 612 833 608Q832 603 830 599Q828 596 825 595Q822 594 819 594Q816 595 803 605Q791 615 776 629Q762 644 759 643Q756 642 753 639Q751 636 750 626Q749 615 748 613Q747 612 746 611Q744 611 735 614Q726 617 717 616Q708 614 705 614Q702 615 699 618Q697 621 695 629Q693 636 690 637Q687 638 683 636Q680 633 678 628Q677 624 682 611Q687 599 692 597Q696 595 704 597Q711 598 713 596Q716 594 716 592Q716 591 715 589Q714 588 708 585Q702 583 693 573Q684 564 683 556Q683 549 684 544Q685 540 698 521Q711 502 726 492Q742 483 752 480Q762 477 764 471Q767 465 765 460Q763 456 761 454Q759 453 750 456Q741 460 736 458Q732 455 723 444Q714 433 706 428Q699 424 694 413Q690 403 687 400Q684 397 672 398Q660 398 658 400Q655 402 655 408Q654 414 655 423Q656 432 658 437Q660 443 663 446Q666 450 669 451Q672 453 675 453Q678 452 684 449Q690 446 693 447Q696 448 701 453Q706 459 705 465Q705 471 702 473Q699 475 687 478Q675 480 673 485Q671 489 676 498Q681 507 680 512Q680 516 676 520Q672 525 668 527Q663 530 657 532Q651 533 648 533Q645 532 641 528Q636 525 634 514Q632 504 632 489Q632 474 633 472Q634 471 636 470Q639 470 645 473Q651 476 654 476Q657 476 658 473Q660 471 659 468Q659 465 656 462Q654 459 646 456Q639 453 633 441Q627 429 624 427Q621 426 617 427Q613 429 614 440Q615 450 610 459Q605 468 606 474Q606 480 604 494Q602 507 601 508Q600 509 592 504Q583 498 578 497Q573 496 564 501Q555 505 550 511Q545 516 546 519Q546 522 548 524Q550 525 560 528Q570 531 573 533Q576 536 576 547Q576 558 577 566Q579 573 579 574Q578 576 576 577Q573 579 558 580Q543 581 540 583Q537 585 536 590Q536 594 540 598Q544 603 546 614Q548 624 542 632Q535 639 532 651Q528 663 527 670Q526 678 527 679Q528 681 530 680Q531 680 542 672Q552 665 555 665Q558 664 559 665Q560 666 565 684Q570 702 574 702Q579 703 586 700Q594 698 596 700Q598 702 599 708Q599 714 594 726L590 738M677 711L679 708Q681 705 688 701Q696 698 702 699Q708 700 712 702Q716 705 724 718Q731 732 733 741Q734 750 736 753Q738 756 746 761L753 766M1206 471L1197 468Q1188 465 1182 466Q1176 466 1174 465Q1173 463 1172 458Q1172 453 1177 447Q1182 441 1184 436Q1185 432 1183 429Q1181 426 1174 423Q1167 419 1167 415Q1166 411 1171 407Q1176 403 1185 404Q1194 405 1204 401Q1215 397 1227 397Q1239 397 1241 400Q1243 402 1242 404Q1242 405 1236 408Q1230 411 1227 414Q1224 417 1225 426Q1226 435 1222 448Q1217 462 1214 465Q1212 469 1209 470L1206 471M1371 433L1366 432Q1362 432 1359 430Q1356 428 1354 424Q1352 420 1353 416Q1353 411 1356 408Q1359 406 1372 402L1386 399M1377 430 1371 433M1926 672L1920 672Q1914 673 1901 671Q1889 669 1887 668Q1884 666 1887 655Q1890 645 1896 642Q1902 639 1902 638Q1903 636 1902 632Q1902 627 1900 624Q1899 622 1898 622Q1896 621 1888 625Q1881 629 1877 628Q1873 627 1872 624Q1871 621 1871 612Q1871 603 1869 600Q1866 597 1862 596Q1857 595 1848 598Q1839 602 1837 605Q1836 609 1837 615Q1837 621 1844 630Q1851 639 1851 645Q1852 651 1855 657Q1859 663 1858 666Q1857 669 1851 670Q1845 672 1840 672Q1836 671 1835 670Q1833 669 1832 663Q1831 657 1826 654Q1821 651 1818 652Q1815 652 1814 662Q1812 672 1805 676Q1797 681 1795 684Q1793 687 1793 690Q1793 693 1797 700Q1802 708 1800 716L1799 723M1786 723L1781 713Q1776 703 1767 698Q1757 693 1767 675Q1777 657 1778 650Q1778 642 1793 640Q1809 637 1811 635Q1813 633 1813 630Q1813 627 1808 621Q1802 615 1800 610Q1798 606 1793 603Q1787 600 1787 598Q1786 597 1787 594Q1788 591 1790 590Q1791 589 1794 590Q1797 590 1802 596Q1806 601 1815 602Q1824 603 1827 601Q1830 599 1834 585Q1839 570 1840 568Q1842 566 1846 566Q1851 566 1862 571Q1872 575 1874 575Q1875 575 1876 572Q1877 570 1879 550Q1880 531 1878 527Q1875 523 1867 520Q1859 516 1863 507Q1866 498 1866 492Q1866 485 1856 480Q1845 475 1838 474Q1830 474 1829 471L1829 468M1905 409 1926 400M1791 472L1790 473Q1788 474 1785 473Q1782 472 1766 462Q1750 453 1747 450Q1745 447 1744 444Q1744 441 1746 435Q1748 429 1747 418Q1747 408 1748 407Q1749 406 1755 405Q1761 404 1764 412Q1767 420 1770 423L1773 426M-9 459 0 455M12 442L17 438Q22 435 22 434Q23 432 19 428Q16 423 8 418Q0 413 -4 412L-9 410M151 1086L156 1078Q161 1071 157 1059Q153 1047 159 1041Q164 1035 165 1026Q165 1017 167 1016Q168 1014 186 1019Q204 1023 209 1029Q214 1035 216 1036Q219 1037 231 1033Q243 1030 250 1023Q258 1017 259 1014Q260 1011 257 1006Q255 1001 252 999Q249 998 243 997Q237 996 234 993Q232 990 243 974Q255 958 264 955Q272 951 272 942Q271 933 268 922Q265 912 265 906Q266 900 270 894Q273 889 276 890Q279 890 285 895Q291 899 300 899Q309 899 312 898Q315 897 321 891Q327 886 339 882Q351 878 354 876Q356 873 359 868Q361 864 366 862Q372 860 374 847Q377 834 375 826Q373 819 375 816Q378 813 381 813Q384 812 387 816Q390 819 389 826Q388 834 392 840Q396 845 400 848Q405 850 409 845Q413 840 417 828Q421 816 416 806Q411 795 408 783Q405 771 416 760Q428 750 430 740Q433 729 432 724Q431 720 425 714Q418 708 416 705Q415 702 416 698Q417 693 422 687Q428 681 426 675Q423 670 417 665Q411 660 409 648Q406 636 406 630Q405 624 412 612Q419 600 425 594Q432 588 440 584Q447 579 449 574Q452 570 449 568Q447 565 444 566Q441 566 432 572Q423 578 420 579Q417 580 414 579Q411 578 409 574Q407 570 408 562Q409 555 404 551Q399 547 397 542Q394 537 394 532Q394 528 402 514Q409 501 413 499Q417 496 424 496Q432 495 436 491Q440 486 440 484Q440 483 431 477Q423 471 414 466Q405 462 404 459Q403 456 407 446Q411 435 411 430Q410 426 400 425Q390 424 381 431Q372 438 364 435Q357 431 356 432Q354 432 354 446Q354 460 365 469Q376 477 378 480Q380 483 379 486Q379 489 359 503Q339 517 333 529Q327 540 312 546Q297 552 294 559Q291 567 285 572Q279 577 268 579Q258 581 250 579Q243 577 230 577Q216 576 214 578Q212 579 210 588Q207 597 202 598Q198 600 195 599Q192 597 187 591Q181 585 181 581Q180 577 180 581Q179 585 170 600Q160 615 157 617Q153 620 144 618Q135 617 132 613Q130 609 132 598Q135 587 145 584Q154 582 159 578Q164 573 162 570Q161 567 155 563Q150 559 147 559Q144 558 140 561Q136 564 133 573Q130 582 120 582Q111 581 101 585Q92 588 88 597L84 606M105 621L116 625Q126 629 129 632Q131 636 131 639Q130 642 119 651Q108 659 99 661L90 662M18 782L12 783Q6 785 2 792Q-3 798 -6 801L-9 803M1926 433L1922 432Q1917 432 1914 433Q1911 434 1905 444L1899 453M1865 471L1867 476Q1869 481 1874 480Q1878 478 1887 472L1896 465M964 459L971 457Q978 456 981 454Q984 452 985 448Q986 444 983 440Q981 436 978 435Q975 434 972 434Q968 435 963 441Q957 447 957 450Q956 453 958 457Q960 461 962 460L964 459M1314 447L1315 444Q1315 441 1313 440Q1311 438 1306 438Q1302 437 1299 439Q1296 441 1296 442Q1296 444 1299 446Q1302 448 1305 448Q1308 449 1311 448L1314 447M1769 447 1772 441M1767 436L1764 439Q1761 441 1761 442Q1761 444 1762 446Q1764 447 1767 447L1769 447M1304 495L1305 494Q1305 492 1304 489Q1303 486 1297 482Q1291 477 1290 460Q1290 444 1284 441Q1278 439 1275 439Q1272 439 1266 449Q1261 459 1262 465Q1262 471 1266 474Q1269 478 1278 482Q1287 485 1292 490Q1296 495 1300 495L1304 495M1537 546L1543 536Q1549 525 1545 516Q1542 507 1549 500Q1557 492 1557 489Q1558 486 1556 478Q1554 471 1554 464Q1555 456 1553 453Q1552 450 1548 447Q1545 445 1544 445Q1542 445 1534 452Q1527 459 1522 460Q1518 462 1517 463Q1516 465 1521 474Q1526 483 1523 494Q1520 504 1523 512Q1525 519 1524 530Q1524 540 1527 544Q1530 548 1532 548Q1533 549 1535 547L1537 546M1638 531L1644 526Q1650 522 1660 508L1670 495M1656 475L1653 475Q1650 475 1642 479Q1635 482 1628 480Q1620 479 1610 473Q1600 468 1597 460Q1594 453 1589 453Q1585 453 1583 461Q1581 469 1587 476Q1593 483 1595 494Q1598 504 1606 508Q1613 513 1620 521Q1626 530 1632 530L1638 531M787 906L787 897Q786 888 788 887Q789 885 792 884Q795 884 800 885Q804 886 811 892Q818 897 816 902Q814 906 808 910Q801 915 799 920Q797 924 791 928Q785 933 785 934Q784 936 790 945Q795 955 800 958Q804 961 807 959Q810 958 814 953Q818 948 815 939Q812 930 814 927Q816 923 825 918Q834 914 837 914Q840 915 849 919Q858 924 862 920Q867 917 870 907Q873 897 869 886L865 876M896 885L897 891Q898 897 902 899Q906 900 909 896Q913 891 912 888Q912 886 908 881Q905 876 906 870Q907 864 910 861Q912 858 918 855Q924 852 930 853Q936 853 944 850Q951 848 953 839Q956 831 958 829Q960 827 972 829Q984 831 989 829Q994 828 995 825Q997 822 994 808Q991 795 993 792Q996 788 1002 788Q1008 788 1016 792Q1023 796 1034 795Q1045 795 1047 802Q1049 810 1042 812Q1035 814 1028 821Q1022 828 1023 832Q1024 837 1028 839Q1032 841 1036 840Q1041 839 1045 837Q1048 834 1050 831Q1051 828 1051 820Q1050 813 1052 812Q1053 811 1060 812Q1068 813 1076 817Q1083 820 1090 821Q1098 822 1104 815Q1110 808 1113 807Q1116 806 1119 807Q1122 808 1128 813Q1134 819 1137 819Q1140 820 1143 819Q1146 818 1150 809Q1155 801 1154 798Q1154 795 1153 794Q1151 792 1143 789Q1134 787 1114 790Q1095 793 1093 792Q1092 792 1090 789Q1089 786 1091 782Q1093 777 1097 773Q1101 769 1114 762Q1128 756 1131 756Q1134 756 1143 762Q1152 769 1155 769Q1158 770 1161 769Q1163 768 1165 753Q1167 738 1164 732Q1161 725 1158 725Q1155 725 1148 731Q1140 737 1132 733Q1125 729 1120 730Q1116 731 1099 742Q1082 753 1082 764Q1082 774 1081 778Q1080 783 1068 785Q1056 787 1053 785Q1050 783 1052 774Q1053 764 1064 755Q1074 745 1078 739Q1082 732 1084 726Q1085 720 1084 712Q1083 705 1085 704Q1086 702 1092 700Q1098 698 1106 693Q1113 688 1122 691Q1131 694 1149 704Q1167 713 1178 712Q1188 710 1194 707Q1200 704 1208 707Q1215 710 1230 705Q1245 700 1247 696Q1248 693 1247 688Q1246 684 1238 679Q1230 673 1226 673Q1221 672 1218 679Q1215 685 1212 688Q1209 691 1206 692Q1203 693 1198 685Q1194 677 1184 676Q1174 675 1175 662Q1176 648 1175 645Q1174 642 1172 640Q1170 638 1167 638Q1164 639 1160 641Q1155 644 1150 654Q1144 663 1144 668Q1144 672 1150 675Q1157 678 1159 680Q1160 681 1158 682Q1157 684 1153 685Q1149 686 1144 681Q1140 676 1137 676Q1134 675 1124 678Q1113 682 1112 681Q1110 680 1107 673Q1104 666 1111 664Q1119 662 1120 661Q1122 659 1122 649Q1123 639 1127 633Q1131 627 1132 622Q1133 618 1132 612Q1131 606 1128 602Q1125 598 1124 599Q1122 599 1108 610Q1094 621 1090 633Q1085 645 1089 654Q1094 663 1081 671Q1068 679 1069 689Q1071 699 1068 701Q1065 703 1056 704Q1047 705 1046 707Q1045 708 1046 716Q1047 723 1051 729Q1054 735 1051 738Q1047 741 1043 747Q1040 753 1037 755Q1035 756 1028 758Q1020 760 1006 765Q991 771 988 774Q985 777 982 784Q979 792 974 796Q969 800 963 801Q957 803 952 802Q948 802 941 791Q935 780 935 777Q936 774 939 772Q942 771 950 770Q957 769 962 762Q966 754 974 751Q981 749 995 742Q1008 735 1005 734Q1003 732 996 733Q990 733 980 731Q969 729 966 730Q963 732 960 738Q957 744 951 745Q945 746 939 744Q933 743 926 740Q919 738 918 736Q916 735 916 726Q916 717 917 716Q918 715 919 716Q919 717 932 721Q945 725 950 725Q954 726 957 724Q960 722 961 717Q963 711 946 704Q930 696 926 699Q922 702 919 709Q915 717 906 714L897 711M884 696L884 694Q884 693 891 686Q897 680 906 679Q915 679 921 674Q927 669 928 669Q930 669 936 675Q942 681 950 680Q957 680 958 681Q960 681 962 686Q964 690 965 699Q966 708 968 710Q969 711 974 713Q978 715 984 715Q990 715 993 714Q996 713 1000 706Q1005 700 1008 698Q1011 696 1020 679Q1030 663 1017 658Q1005 653 998 656Q990 658 982 657Q975 655 966 659Q957 663 948 659Q939 655 933 657Q927 660 927 657Q926 654 929 651Q931 648 936 634Q941 621 940 614Q939 606 936 604Q933 601 923 602Q913 603 911 604Q909 606 912 620Q914 633 913 636Q912 639 909 640Q906 641 897 639Q888 638 883 626Q877 615 878 610Q880 606 884 600Q889 594 889 591Q889 588 887 585Q885 583 880 581Q876 579 875 576Q874 573 875 570Q876 567 879 565Q882 562 891 561Q900 560 909 565Q918 570 933 572Q948 574 957 568Q966 562 972 561Q978 559 976 556Q974 552 966 550Q957 547 955 545Q953 543 954 537Q955 531 959 522Q962 513 960 504Q957 495 960 493Q963 490 966 490Q969 489 971 490Q973 492 976 498Q978 504 985 499Q991 495 994 490Q996 486 996 483Q996 480 994 479Q993 477 986 477Q978 477 969 470Q960 462 946 470Q933 478 928 476Q924 473 921 473Q918 472 916 475Q914 477 914 479Q915 482 918 483Q921 485 927 484Q933 484 936 486Q940 489 941 492Q942 495 934 502Q926 510 922 526Q918 541 915 543Q912 545 908 545Q903 544 892 535Q882 525 872 526Q861 527 858 529Q855 531 855 537Q855 543 854 546Q852 549 841 556Q829 564 828 567Q827 570 829 576Q831 581 838 586Q846 590 848 594Q850 597 851 604Q853 612 853 623Q852 633 864 637Q876 640 882 640Q888 640 894 647Q901 654 900 660Q900 666 897 669Q894 672 885 669Q876 666 867 665Q858 664 854 662Q850 660 846 654Q843 649 838 648Q834 648 831 650Q828 651 818 662Q809 672 801 684Q794 696 797 704L800 711M910 747L919 759Q929 771 930 774Q931 777 926 785Q921 793 918 794Q915 795 912 791Q908 786 910 777Q911 768 910 765Q909 762 906 761Q903 760 897 762L891 764M780 885 756 907M1398 495L1401 494Q1405 492 1407 489Q1409 486 1409 483L1409 480M1380 467L1376 472Q1372 477 1372 480Q1372 483 1379 488Q1386 493 1392 494L1398 495M-9 686 0 682M96 547L100 546Q105 545 111 541Q117 537 123 536Q129 534 131 531Q133 528 134 524Q135 519 133 512Q132 505 128 501Q123 497 117 501Q111 506 104 509Q96 512 86 520L75 529M201 526L198 524Q195 523 191 515Q187 507 190 496Q193 486 196 484Q198 481 204 481Q210 480 218 485Q225 490 234 491Q243 493 246 495Q250 498 250 500Q250 501 245 505Q240 509 229 512Q218 516 209 521L201 526M761 603L766 599Q771 595 780 591Q789 588 797 577Q805 567 806 566Q806 564 802 561Q798 558 797 555Q795 552 797 543Q798 534 802 532Q807 530 814 534Q822 538 826 533Q831 528 831 526Q831 525 828 525Q825 526 820 524Q816 523 810 516Q804 510 798 507Q792 504 783 496Q774 489 770 490Q765 491 763 496Q760 501 761 504Q762 507 770 516Q777 525 778 528Q779 531 778 533Q777 534 776 535Q774 536 768 530Q762 524 759 524Q756 523 747 531Q738 539 730 537Q723 535 720 536Q717 537 713 540Q710 543 708 546Q707 549 709 553Q711 558 716 559Q720 561 729 555Q738 548 748 556Q759 564 752 572Q744 579 743 584Q742 588 746 596Q750 605 753 605Q756 606 758 604L761 603M1698 510L1700 510Q1701 509 1702 507Q1703 504 1703 501L1703 498M1683 504L1686 507Q1689 509 1694 509L1698 510M305 522L309 519Q312 517 312 513Q312 510 307 502Q303 494 300 493Q297 493 292 499Q288 506 288 512Q288 519 289 521Q291 523 298 523L305 522M-9 498 0 504M67 582L67 585Q66 588 63 590Q60 592 44 595Q27 598 21 592Q15 585 10 585Q6 585 -2 587L-9 590M1491 522L1502 516Q1513 510 1513 508Q1514 507 1512 504Q1510 501 1506 499Q1503 497 1500 498Q1497 498 1492 502Q1487 507 1484 510Q1482 513 1482 516Q1482 519 1484 520Q1486 522 1489 522L1491 522M747 513L748 512Q749 510 748 507Q747 504 744 502Q741 500 738 500Q735 500 734 503Q732 507 733 510Q735 513 738 514Q741 515 744 514L747 513M1585 570L1592 554Q1600 537 1597 530Q1593 522 1592 513Q1591 504 1586 502Q1581 500 1575 499Q1569 499 1566 502Q1562 504 1561 508Q1560 513 1561 534Q1563 555 1564 558Q1565 561 1568 564Q1572 568 1576 570Q1581 572 1583 571L1585 570M1926 504L1914 506Q1902 509 1899 511Q1896 513 1896 516Q1895 519 1896 526Q1898 534 1894 542Q1891 549 1893 552Q1896 555 1900 556Q1905 557 1916 554L1926 551M618 544L614 543Q609 542 603 536Q598 531 598 528Q597 525 600 521Q603 517 610 516Q618 515 624 520Q631 525 631 528Q631 531 629 534Q628 537 623 540L618 544M1797 537L1799 536Q1801 534 1801 530Q1802 525 1802 522Q1801 519 1799 517Q1797 515 1786 518Q1776 521 1772 524Q1769 528 1770 531Q1771 534 1773 535Q1776 536 1787 537L1797 537M363 577L360 578Q357 578 345 578Q333 577 332 575Q331 573 332 566Q332 558 334 554Q336 550 344 549Q351 548 357 544Q363 540 364 538Q366 537 367 531Q368 525 370 524Q372 522 374 524Q377 525 377 526Q377 528 373 534Q370 540 373 550Q377 561 375 565Q372 570 368 573L363 577M289 546L290 543Q291 540 288 536Q285 531 280 531Q275 531 272 532Q269 534 268 537Q268 540 270 543Q273 546 281 546L289 546M535 573L536 570Q538 567 540 556Q542 546 540 542Q538 537 535 536Q531 535 524 539Q517 543 514 549Q512 555 517 562Q522 569 526 572Q531 574 533 573L535 573M-9 570 6 569M1768 561L1768 558Q1768 555 1766 552Q1764 549 1761 548Q1758 547 1756 548Q1755 549 1754 555Q1754 561 1761 561L1768 561M768 565L764 564Q759 564 764 558Q768 552 771 551Q774 550 774 554Q774 558 771 561L768 565M1437 741L1441 738Q1445 735 1450 728Q1455 720 1461 720Q1467 719 1474 714Q1482 710 1497 710Q1512 710 1521 708Q1530 706 1532 706Q1533 706 1537 710Q1540 714 1544 716Q1548 717 1554 713Q1560 709 1566 710Q1572 711 1575 714Q1578 717 1579 723Q1579 729 1580 730Q1581 732 1590 733Q1599 735 1603 733Q1607 732 1606 718Q1606 705 1603 698Q1599 690 1594 672Q1589 654 1585 633Q1581 611 1578 610Q1575 610 1569 613Q1563 616 1550 617Q1536 618 1532 615Q1527 613 1524 610Q1522 606 1521 603Q1520 600 1520 597Q1521 594 1526 591Q1530 589 1534 590Q1539 590 1545 597Q1551 604 1554 606Q1557 607 1560 607Q1563 606 1565 603Q1567 600 1567 597Q1567 594 1565 591Q1563 588 1548 577Q1533 566 1521 564Q1509 562 1497 569Q1485 576 1483 579Q1482 582 1481 594Q1481 606 1483 615Q1485 624 1483 630Q1481 636 1477 639Q1473 642 1464 641Q1455 639 1449 641Q1443 643 1437 643Q1431 643 1429 653Q1427 663 1428 668Q1428 672 1431 676Q1434 679 1436 680Q1437 680 1455 678Q1473 675 1476 672Q1480 669 1485 660Q1491 651 1500 646Q1508 642 1513 635Q1518 629 1522 627Q1527 626 1529 630Q1532 633 1530 640Q1528 648 1532 652Q1536 656 1539 656Q1542 656 1547 652Q1551 648 1556 646Q1560 644 1564 644Q1569 644 1572 646Q1575 648 1576 651Q1577 654 1575 663Q1573 672 1574 680Q1575 687 1565 695Q1554 704 1546 702Q1539 700 1538 690Q1537 681 1535 679Q1533 678 1528 677Q1524 676 1508 677Q1492 678 1485 687Q1479 696 1464 700Q1449 704 1446 703Q1443 703 1438 698Q1434 693 1431 692Q1428 692 1425 695Q1421 699 1423 706Q1425 714 1423 726Q1422 738 1425 740Q1428 742 1432 741L1437 741M1272 585L1277 580Q1282 576 1284 573Q1286 570 1285 568Q1285 567 1280 566Q1275 565 1270 569Q1266 573 1265 578Q1265 582 1267 584Q1269 586 1271 586L1272 585M1044 657L1049 653Q1053 650 1062 649Q1071 648 1073 644Q1075 639 1073 633Q1071 627 1060 619Q1050 610 1042 610Q1033 609 1031 608Q1029 606 1028 602Q1027 597 1028 592Q1029 588 1031 587Q1032 586 1040 587Q1047 588 1049 586Q1050 585 1046 577Q1041 570 1040 570Q1038 570 1034 577Q1029 584 1020 583Q1011 581 998 576Q984 571 972 579Q961 588 959 591Q958 594 958 597Q958 600 961 605Q963 611 966 614Q969 618 984 623Q999 628 1010 628Q1020 627 1027 634Q1034 642 1036 651Q1038 659 1041 658L1044 657M457 669L459 668Q461 666 462 662Q464 657 473 652Q482 648 482 636Q483 624 485 620Q487 615 489 612Q492 610 495 611Q498 613 498 620Q498 627 501 630Q503 633 510 634Q516 636 521 633Q526 630 527 626Q528 621 526 615Q525 609 515 596Q504 582 500 582Q495 581 484 584Q474 586 468 596Q462 606 450 609Q438 612 435 615Q431 618 431 622Q431 627 433 632Q435 637 436 639Q438 641 444 643Q450 646 452 648Q455 651 454 658Q453 666 455 668L457 669M285 601L273 601Q261 601 260 600Q258 599 258 597Q257 594 262 593Q267 593 274 588Q282 584 285 585Q288 587 290 591Q291 594 288 597L285 601M1926 594L1916 590Q1905 586 1901 587Q1897 588 1896 591Q1894 594 1895 599Q1896 603 1899 608Q1902 613 1906 612Q1911 611 1918 606L1926 602M318 874L310 873Q303 871 290 864Q278 858 279 855Q280 852 287 844Q294 837 297 827Q300 816 310 812Q321 807 328 793Q334 780 338 776Q343 771 345 766Q347 762 347 759Q346 756 339 750Q331 744 329 738Q327 732 317 727Q307 723 307 720Q307 717 309 713Q312 710 316 710Q321 710 323 712Q326 714 328 720Q330 726 333 728Q336 730 340 730Q345 730 348 728Q350 726 351 718Q353 711 351 706Q349 702 341 698Q333 694 332 692Q330 690 331 681Q332 672 331 669Q330 666 318 657Q306 648 304 645Q303 642 306 637Q309 632 316 630Q324 628 328 622Q333 616 340 611Q348 606 356 599Q363 592 369 599Q374 606 380 609Q386 612 389 615Q391 618 386 630Q381 642 374 646Q366 651 370 660Q374 669 371 676Q369 684 370 690Q371 696 373 698Q375 700 387 705Q399 711 402 714Q405 717 405 722Q404 726 398 735Q391 744 395 758Q399 771 394 782Q388 792 386 793Q384 794 378 792Q372 789 369 790Q366 791 363 795Q360 800 357 808Q354 816 343 824Q332 831 329 838Q325 846 323 858Q322 870 320 872L318 874M-9 608L-8 614Q-8 621 -3 638L2 654M288 807L279 806Q270 805 254 798Q237 790 235 791Q233 792 232 798Q231 804 228 806Q225 809 213 807Q201 805 198 803Q195 801 190 793Q185 786 184 780Q183 774 186 773Q189 772 198 775Q207 777 210 777Q214 777 215 776Q216 774 216 766Q216 759 217 757Q219 756 221 757Q224 759 226 766Q228 773 231 775Q234 776 237 773Q240 770 242 765Q245 759 245 752Q246 745 243 741Q240 737 236 735Q231 734 214 733Q198 731 184 733Q171 734 166 733Q160 732 158 730Q156 729 158 726Q159 723 163 720Q166 717 177 714Q187 711 191 708Q194 705 194 704Q194 702 187 698Q180 694 171 692Q162 690 162 686Q161 681 164 672Q167 663 166 661Q165 659 156 654Q148 648 147 645Q147 642 148 640Q150 639 154 637Q159 635 170 635Q180 636 182 634Q184 633 186 627Q188 621 190 620Q192 620 200 623Q207 627 212 627Q216 627 225 620Q234 614 238 615Q243 617 250 624Q258 632 267 630Q276 628 285 636Q294 645 295 654Q296 663 303 674Q309 684 309 688Q309 693 306 696Q303 699 297 698Q291 697 287 698Q283 699 280 702Q278 705 278 708Q277 711 280 716Q282 721 290 723Q297 726 298 734Q298 741 299 744Q301 747 303 751Q306 754 312 757Q318 759 320 764Q323 768 319 768Q315 768 310 764Q306 760 299 758Q291 756 291 748Q290 741 284 734Q279 727 276 727Q273 728 270 730Q267 732 267 735Q266 738 270 744Q273 750 274 756Q275 762 281 763Q288 765 290 769Q291 773 293 785Q295 798 294 801Q293 804 291 806L288 807M1395 699L1400 686Q1405 672 1402 662Q1400 651 1404 640Q1409 630 1408 627Q1407 624 1406 623Q1404 622 1397 626Q1390 630 1389 633Q1389 636 1389 640Q1390 645 1389 648Q1388 651 1384 652Q1380 654 1374 654Q1368 654 1359 666Q1351 678 1353 682Q1356 687 1360 690Q1365 693 1380 696L1395 699M1684 723L1687 720Q1690 717 1692 712Q1694 708 1696 696Q1698 684 1697 680Q1696 675 1692 672Q1689 670 1670 663Q1652 657 1650 652Q1648 648 1639 646Q1630 645 1626 636Q1623 626 1622 625Q1620 623 1617 623Q1614 623 1611 628Q1608 633 1611 644Q1613 654 1611 666Q1609 678 1623 690Q1638 703 1640 701Q1643 699 1644 693Q1645 687 1648 686Q1650 686 1654 688Q1659 689 1661 691Q1663 693 1663 699Q1662 705 1664 708Q1665 711 1673 718Q1680 725 1682 724L1684 723M1926 640L1918 640Q1911 639 1908 640Q1906 642 1907 646Q1909 651 1912 654Q1914 656 1920 658L1926 659M359 654L362 652Q366 651 364 650Q363 648 357 645Q351 642 348 642Q344 642 344 644Q343 645 346 649Q348 652 351 653Q354 655 356 654L359 654M252 705L259 702Q266 699 271 688Q276 678 274 669Q273 660 270 656Q267 652 262 651Q258 650 244 653Q231 656 219 650Q207 645 204 646Q201 647 196 652Q190 657 190 660Q189 663 193 668Q197 672 208 679Q219 687 230 696Q240 705 246 705L252 705M-9 821L-1 825Q7 828 10 832Q14 837 22 838Q30 838 40 845Q50 852 61 855Q72 858 71 867Q71 876 74 888Q78 899 81 899Q84 900 90 893Q96 887 103 879Q109 870 109 866Q108 861 104 857Q99 853 90 852Q81 850 70 839Q60 828 52 822Q43 816 42 813Q40 810 40 802Q40 795 38 788L36 780M115 747L116 744Q117 741 116 738Q115 735 107 722L99 708M108 677L112 677Q117 677 121 680Q125 684 127 688Q128 693 128 699Q128 705 135 712Q142 720 144 729Q146 738 151 744Q157 750 165 754Q174 758 177 762Q180 765 180 768Q181 771 174 775Q168 780 167 783Q167 786 172 796Q177 807 186 809Q195 811 199 819Q202 828 202 831Q201 834 195 838Q189 843 188 844Q188 846 191 855Q195 864 195 870Q196 876 190 882Q184 888 183 898Q182 909 177 916Q171 924 171 926Q171 928 172 930Q174 931 182 932Q189 933 201 938Q213 943 216 940Q218 936 219 926Q219 916 226 913Q234 909 237 912Q240 914 242 919Q245 924 248 936Q250 948 250 950Q249 951 246 952Q243 954 231 953Q219 953 208 964Q198 976 190 974Q183 972 178 973Q174 974 166 984Q159 995 156 995Q153 995 147 991Q141 988 135 988Q129 989 126 991Q123 992 122 996Q121 999 123 1005Q125 1011 122 1018Q119 1026 119 1030Q119 1035 124 1041Q130 1047 131 1052Q132 1056 132 1062Q131 1068 127 1077L122 1086M488 732L494 728Q499 723 506 720Q513 716 516 716Q519 716 525 718Q531 721 534 720Q537 720 542 715Q546 711 546 708Q545 705 540 702Q534 699 525 698Q516 698 501 691Q486 684 477 689Q468 694 457 696Q446 699 446 705Q446 711 453 718Q459 726 470 730Q480 734 484 733L488 732M810 689L813 688Q816 686 828 685Q840 684 842 687Q844 690 843 694Q842 699 829 707L816 715M1812 708L1812 705Q1811 702 1816 695Q1821 688 1824 686Q1827 685 1834 686Q1842 688 1856 688Q1869 689 1871 691Q1873 693 1874 698Q1874 702 1869 711L1863 720M1367 738L1381 735Q1395 732 1396 729Q1397 726 1395 720Q1393 714 1387 713Q1380 712 1374 715Q1368 718 1364 725Q1359 732 1360 735Q1361 738 1364 738L1367 738M-9 752 3 753M1645 747L1647 744Q1649 741 1649 736Q1649 732 1645 725Q1641 718 1636 718Q1632 718 1623 725Q1615 732 1615 735Q1615 738 1619 741Q1623 744 1629 746Q1635 748 1640 747L1645 747M1557 891L1563 888Q1569 884 1578 884Q1587 884 1588 880Q1590 876 1589 870Q1589 864 1586 861Q1584 857 1581 855Q1578 854 1576 854Q1575 855 1569 862Q1563 870 1558 871Q1554 872 1550 869Q1545 866 1544 860Q1542 855 1544 852Q1546 849 1552 845Q1557 841 1560 840Q1563 840 1569 840Q1575 841 1580 837Q1584 834 1586 830Q1588 825 1586 818Q1584 810 1585 801Q1587 792 1590 789Q1593 786 1602 784Q1611 782 1613 778Q1615 774 1615 770Q1615 765 1611 763Q1608 760 1594 758Q1580 756 1577 753Q1573 750 1571 744Q1570 738 1568 738Q1566 738 1564 739Q1562 741 1558 753Q1554 765 1550 767Q1545 769 1544 767Q1543 765 1543 756Q1543 747 1536 744Q1530 741 1522 735Q1515 728 1504 727Q1494 726 1482 728Q1470 731 1467 734Q1464 738 1461 747Q1459 756 1453 762Q1448 768 1449 770Q1451 771 1458 771Q1464 772 1467 768Q1470 764 1478 767Q1485 769 1490 763Q1494 756 1499 754Q1503 751 1510 754Q1517 756 1520 763Q1524 770 1533 769Q1542 769 1542 778Q1543 786 1540 792Q1537 798 1534 798Q1530 798 1524 793Q1518 788 1516 788Q1514 789 1515 795Q1515 800 1521 808Q1526 816 1523 822Q1519 828 1517 834Q1516 840 1514 846Q1511 852 1514 859Q1518 866 1518 873Q1518 879 1520 882Q1521 885 1526 888Q1530 890 1538 892Q1545 893 1551 892L1557 891M1652 1086L1651 1078Q1651 1071 1658 1069Q1665 1067 1670 1063Q1675 1059 1678 1052Q1681 1044 1686 1036Q1690 1029 1691 1024Q1693 1020 1691 1015Q1689 1011 1686 1008Q1684 1005 1676 1002Q1668 999 1662 993Q1656 986 1652 985Q1647 984 1642 985Q1638 986 1628 991Q1617 996 1610 1004Q1602 1011 1595 1011Q1587 1011 1586 1006Q1586 1002 1589 990Q1591 978 1595 975Q1599 972 1608 976Q1617 979 1620 979Q1623 978 1624 974Q1626 969 1627 959Q1629 948 1630 946Q1631 945 1642 945Q1653 945 1656 944Q1658 942 1661 936Q1665 930 1671 930Q1677 931 1683 923Q1688 915 1693 914Q1698 913 1701 916Q1705 918 1707 922Q1709 927 1706 936Q1703 945 1704 956Q1704 967 1701 968Q1698 969 1695 968Q1692 966 1686 954Q1680 943 1678 945Q1676 948 1683 968Q1689 989 1692 992Q1695 996 1706 998Q1716 1000 1726 1008Q1737 1016 1744 1015Q1752 1013 1755 1007Q1759 1002 1759 998Q1759 993 1757 989Q1755 985 1750 983Q1746 980 1738 982Q1731 984 1729 982Q1728 981 1732 972Q1735 963 1728 948Q1720 933 1725 927Q1730 921 1730 920Q1730 918 1723 909Q1716 900 1716 894Q1716 888 1719 884Q1722 880 1730 879Q1737 877 1743 873Q1749 868 1752 875Q1754 882 1759 888Q1764 894 1772 887Q1779 880 1782 879Q1785 877 1790 879Q1794 880 1800 885Q1806 890 1809 890Q1812 890 1815 878Q1818 867 1825 862Q1832 858 1831 854Q1831 849 1826 844Q1821 840 1815 839Q1809 839 1808 841Q1807 843 1807 850Q1808 858 1805 859Q1803 861 1798 858Q1794 855 1791 849Q1789 843 1795 838Q1800 833 1803 826L1806 819M1827 823L1832 824Q1836 826 1840 824Q1845 822 1846 819L1848 816M1773 784L1772 781Q1771 777 1772 768Q1774 759 1772 756Q1770 753 1761 749Q1752 744 1744 743Q1737 742 1732 735Q1728 728 1724 726Q1719 725 1717 727Q1714 729 1711 735Q1708 741 1706 743Q1704 745 1696 745Q1689 746 1684 743Q1680 740 1676 745Q1671 749 1662 753Q1653 756 1645 764Q1636 771 1635 776Q1634 780 1633 792Q1632 803 1646 801Q1661 798 1664 806Q1667 813 1663 819Q1659 825 1651 831Q1644 837 1640 836Q1635 836 1632 832Q1630 828 1629 816Q1629 805 1623 808Q1617 812 1613 817Q1608 822 1615 836Q1622 849 1635 860Q1648 870 1650 878Q1652 885 1652 894Q1651 903 1654 908Q1656 912 1655 915Q1654 918 1646 920Q1638 923 1635 922Q1632 921 1631 918Q1631 915 1632 909Q1634 903 1633 900Q1633 897 1629 890Q1626 882 1622 880Q1617 878 1612 879Q1608 879 1599 883Q1590 887 1586 895Q1581 903 1578 906Q1575 909 1557 913Q1539 917 1537 911Q1534 906 1531 904Q1527 902 1512 908Q1497 914 1484 911Q1470 908 1468 905Q1465 903 1466 900Q1467 897 1470 896Q1473 894 1480 898Q1488 902 1491 902Q1494 902 1497 901Q1500 899 1502 892Q1504 885 1497 877Q1491 869 1490 868Q1488 868 1482 870Q1476 872 1468 868Q1461 863 1458 864Q1455 864 1452 870Q1450 876 1451 886Q1452 897 1449 899Q1446 901 1443 900Q1440 898 1438 892Q1436 885 1434 881Q1431 878 1425 873Q1419 868 1414 866Q1409 864 1414 861Q1419 859 1422 854Q1425 849 1425 848Q1425 846 1421 840Q1416 835 1415 831Q1413 828 1416 819Q1418 810 1417 808Q1416 807 1415 807Q1413 808 1402 812Q1392 817 1388 814Q1385 810 1391 800Q1397 789 1399 783Q1401 777 1390 773Q1380 769 1371 760Q1362 752 1353 752Q1344 752 1342 750Q1341 747 1343 741Q1344 735 1343 732Q1342 729 1328 728Q1314 727 1310 728Q1306 729 1304 732Q1301 735 1302 744Q1302 753 1305 756Q1307 759 1314 764Q1321 768 1323 770Q1324 771 1323 772Q1322 774 1309 782Q1296 790 1286 791Q1275 792 1269 802Q1263 811 1253 815Q1243 819 1238 836Q1233 852 1237 860Q1241 867 1242 873Q1243 879 1244 880Q1245 882 1248 882Q1251 883 1258 879Q1266 875 1269 875Q1272 874 1274 875Q1277 876 1279 880Q1281 884 1282 883Q1284 882 1287 876Q1290 870 1293 869Q1296 868 1308 871Q1320 875 1326 879Q1332 884 1340 881Q1347 878 1353 878Q1359 878 1361 882Q1363 885 1362 888Q1362 891 1353 898Q1344 906 1340 915Q1336 924 1337 927Q1339 930 1344 933Q1350 936 1359 931Q1368 926 1374 928Q1380 930 1382 929Q1383 929 1384 925Q1386 921 1380 914Q1374 906 1373 902Q1371 897 1373 896Q1375 894 1386 890Q1398 887 1402 889Q1405 891 1408 902Q1410 913 1420 922Q1431 930 1440 930Q1449 930 1458 934Q1467 938 1479 938Q1491 939 1503 930Q1515 920 1526 919Q1536 918 1533 933Q1531 948 1531 954Q1531 960 1533 963Q1536 965 1543 969Q1550 972 1551 974Q1551 975 1544 984Q1536 993 1534 1000Q1533 1008 1537 1011Q1542 1013 1545 1018Q1548 1022 1551 1023Q1554 1024 1566 1021Q1578 1019 1591 1027Q1603 1035 1606 1043Q1608 1051 1610 1053Q1611 1055 1612 1055Q1614 1055 1617 1054Q1620 1053 1622 1050Q1624 1047 1620 1038Q1615 1029 1617 1026Q1619 1023 1624 1019Q1629 1016 1635 1013Q1641 1011 1644 1011Q1647 1012 1649 1014Q1651 1017 1652 1028Q1654 1038 1652 1053Q1650 1069 1642 1068Q1635 1068 1628 1071Q1620 1074 1614 1067Q1608 1060 1602 1058Q1596 1057 1587 1051Q1578 1045 1574 1044Q1569 1043 1564 1045Q1559 1047 1558 1052Q1557 1056 1558 1061Q1560 1066 1563 1068Q1566 1070 1576 1071Q1587 1072 1593 1079L1598 1086M371 756L374 752Q378 747 377 742Q376 738 371 734Q366 731 360 732Q354 733 352 737Q351 741 352 747Q354 753 358 755Q363 757 367 757L371 756M517 783L520 777Q523 771 527 768Q531 765 550 763Q570 761 573 758Q576 755 577 750Q578 744 571 742Q564 740 558 736Q552 733 538 733Q525 733 518 735Q510 737 507 740Q504 744 503 748Q502 753 505 766Q509 780 511 782Q513 784 515 783L517 783M606 1029L614 1023Q622 1017 624 1011Q627 1005 636 1004Q645 1003 650 1000L656 996M598 891L602 873Q605 855 608 847L612 838M627 844L628 849Q629 855 627 874Q625 894 627 898L630 903M654 891L655 888Q656 885 654 878Q652 870 654 866Q656 861 658 860Q660 858 665 860Q669 861 674 870Q678 878 686 882Q693 885 697 885Q702 885 698 872Q695 858 696 851Q696 844 698 843Q699 842 705 844Q711 845 716 850Q720 854 722 855Q723 855 725 849Q727 843 732 838Q736 834 738 822Q740 810 736 807Q732 804 720 806L708 808M567 779L564 781Q561 783 559 786Q557 789 556 792Q556 795 559 804Q562 813 565 816Q567 819 570 817Q573 816 584 804L594 793M564 858L565 868Q566 879 563 887Q561 895 550 908Q540 920 536 923Q531 925 520 920Q510 916 506 916Q501 916 494 919Q486 922 482 920Q479 918 482 903Q486 888 488 888Q489 888 495 892Q501 897 508 897Q514 897 518 895Q522 894 523 888Q523 882 521 879Q520 876 507 876Q495 876 490 871Q486 867 477 864Q468 861 465 858Q461 855 453 830Q444 804 446 803Q447 801 450 801Q453 801 459 804Q465 807 468 808Q471 808 474 803Q478 798 479 790Q481 783 479 769Q477 756 472 753Q468 750 462 750Q456 750 452 753Q449 756 445 760Q442 765 442 768Q442 771 445 778Q448 786 448 794Q447 801 441 807Q436 813 437 824Q438 834 435 846Q432 858 430 862Q428 867 426 868Q424 870 422 870Q420 870 412 865Q405 860 398 863Q390 865 382 865Q375 865 372 870Q370 876 369 882Q369 888 372 893Q375 899 378 901Q381 903 389 906Q398 909 401 912Q404 915 405 922Q405 930 403 938Q400 945 401 950Q402 954 408 958Q414 963 419 963Q423 963 425 962Q427 960 427 956Q428 951 432 946Q436 942 437 938Q438 933 437 927Q436 921 429 912Q423 903 423 898Q424 894 426 888Q429 882 430 880Q432 879 442 879Q453 879 456 882Q459 885 460 888Q461 891 460 900Q460 909 457 915Q454 921 456 928Q457 936 451 944Q445 951 444 958Q442 966 447 972Q453 978 459 991Q465 1003 470 1003Q474 1003 480 998Q485 993 488 972Q491 951 493 947Q495 944 522 936Q549 929 555 929L561 928M546 998L545 996Q543 993 545 988Q547 984 555 978L564 972M540 946L537 947Q534 948 533 949Q532 951 529 958Q526 966 520 975Q514 984 514 987Q514 990 519 994Q523 999 526 1004Q528 1009 537 1009Q546 1009 561 1016Q576 1023 590 1026Q603 1030 605 1030L606 1029M1689 885L1685 884Q1682 882 1678 874Q1674 867 1665 863Q1656 860 1655 856Q1653 852 1655 850Q1656 848 1659 847Q1662 847 1670 853Q1677 858 1687 852Q1697 846 1697 843Q1697 840 1687 826Q1678 813 1680 806Q1683 798 1682 790Q1681 783 1684 781Q1686 778 1692 775Q1698 773 1710 763Q1722 753 1725 752Q1728 751 1730 752Q1731 753 1733 759Q1736 765 1730 768Q1725 771 1722 780Q1718 789 1710 796Q1702 804 1700 808Q1699 813 1699 818Q1700 822 1704 826Q1707 830 1712 833Q1716 836 1723 838Q1730 840 1723 854Q1716 868 1707 875Q1698 881 1694 883L1689 885M140 849L142 840Q145 831 155 830Q166 828 167 826Q168 825 169 822Q169 819 167 817Q165 814 159 812Q153 810 150 807Q147 804 147 794Q146 783 142 772Q138 762 135 759Q132 756 129 756Q126 755 123 757Q120 758 116 764Q111 770 108 778Q105 786 100 793Q96 800 87 805Q78 810 77 813Q76 816 78 820Q81 825 92 829Q102 834 111 831Q120 829 124 837Q129 846 132 849Q135 851 137 850L140 849M1926 756L1922 757Q1917 758 1914 762Q1911 766 1908 767Q1905 769 1893 766L1881 764M1419 780L1428 777Q1438 774 1439 772Q1441 771 1440 770Q1439 768 1428 764Q1416 761 1410 769Q1404 777 1408 778Q1411 780 1415 780L1419 780M1566 784L1562 780Q1558 777 1557 774Q1557 771 1560 771Q1563 771 1566 772Q1569 774 1570 777Q1570 780 1568 782L1566 784M1767 859L1764 858Q1761 856 1756 848Q1752 840 1744 837Q1736 834 1738 825Q1740 816 1737 802Q1733 789 1735 780Q1737 771 1739 770Q1740 769 1747 773Q1754 777 1758 785Q1761 792 1766 795Q1770 797 1773 803Q1776 808 1777 818Q1779 828 1781 836Q1784 843 1780 848Q1776 854 1772 856L1767 859M912 821L914 825Q917 828 901 836L885 844M1395 867L1389 867Q1383 866 1376 862Q1368 857 1359 854Q1350 852 1340 844Q1329 836 1326 836Q1323 837 1318 843Q1314 849 1310 851Q1305 853 1290 849Q1275 846 1271 843Q1268 840 1269 832Q1269 825 1272 821Q1275 818 1281 816Q1287 815 1299 815Q1311 815 1320 812Q1329 810 1339 811Q1350 813 1350 810Q1351 807 1345 800Q1339 792 1337 786Q1335 780 1335 778Q1336 777 1338 776Q1341 775 1347 775Q1353 776 1358 779Q1363 783 1365 792Q1368 802 1373 807Q1378 813 1379 818Q1381 822 1384 826Q1388 831 1390 842Q1392 852 1397 858Q1403 864 1399 866L1395 867M537 870L542 867Q547 864 549 861Q552 858 549 848Q545 837 542 831Q538 825 544 810Q550 795 549 794Q548 792 544 790Q540 789 528 790Q516 790 513 792Q510 794 508 798Q506 801 506 809Q507 817 508 819Q510 820 518 820Q525 820 529 823Q532 825 533 826Q533 828 530 831Q528 833 525 834Q522 834 514 829Q507 825 502 829Q498 834 498 839Q498 844 500 848Q502 852 511 857Q519 862 522 867Q525 872 531 871L537 870M1488 840L1490 836Q1492 831 1491 828Q1491 826 1482 828Q1473 830 1471 829Q1469 828 1475 818Q1480 807 1480 804Q1479 801 1478 800Q1476 799 1468 801Q1461 803 1449 801Q1437 798 1431 803Q1424 807 1431 824Q1437 841 1442 841Q1446 841 1455 837Q1464 833 1466 833Q1467 833 1472 837Q1476 841 1479 841Q1482 842 1485 841L1488 840M942 822L938 822Q933 822 932 819Q931 816 933 813Q936 809 940 808Q945 807 946 809Q948 810 949 813Q950 816 949 818Q948 820 945 821L942 822M1191 870L1202 866Q1214 861 1216 856Q1218 852 1216 844Q1213 837 1211 834Q1209 831 1202 826Q1194 821 1190 820Q1185 820 1179 824Q1173 828 1170 834Q1167 840 1172 848Q1177 855 1179 862Q1181 870 1183 871Q1185 872 1188 871L1191 870M210 898L207 898Q204 898 202 897Q201 895 200 890Q199 885 200 884Q201 882 208 880Q216 879 220 876Q223 873 223 863Q222 853 228 846Q234 840 234 833Q234 827 242 826Q249 825 255 826Q261 828 262 831Q264 834 263 840Q262 846 250 856Q239 867 237 879Q234 890 222 894L210 898M1926 823L1914 831Q1902 839 1898 838Q1893 838 1882 831Q1872 824 1869 825Q1866 825 1863 828Q1859 831 1859 836Q1858 840 1864 846Q1869 853 1871 857Q1873 861 1874 872Q1876 882 1875 888Q1874 894 1881 904Q1887 915 1886 918Q1886 921 1880 925Q1875 928 1867 928Q1859 927 1855 924Q1851 921 1854 903Q1857 885 1856 880Q1854 875 1850 871Q1845 868 1843 869Q1841 870 1839 879Q1837 888 1833 892Q1828 897 1828 898Q1828 900 1832 904Q1836 909 1837 912Q1838 915 1836 922Q1835 930 1833 934Q1830 937 1828 937Q1827 936 1823 930Q1820 924 1816 922Q1812 919 1808 920Q1803 920 1796 924Q1788 928 1785 928Q1782 927 1778 924Q1773 920 1768 913Q1764 906 1762 905Q1761 904 1748 913Q1735 921 1743 928Q1752 936 1756 941Q1761 946 1764 947Q1767 948 1776 946Q1785 944 1790 946Q1795 948 1795 951Q1795 954 1792 957Q1790 960 1778 966Q1767 972 1767 976Q1768 981 1778 991Q1788 1001 1796 1000Q1803 1000 1809 1001Q1815 1002 1820 1004Q1824 1007 1827 1010Q1829 1014 1829 1017Q1828 1020 1823 1022Q1818 1024 1804 1023Q1791 1022 1786 1026Q1782 1031 1776 1035Q1770 1038 1769 1040Q1767 1041 1772 1050Q1777 1059 1779 1062Q1782 1064 1786 1065Q1791 1066 1793 1064Q1796 1062 1799 1056Q1803 1050 1806 1049Q1809 1047 1820 1049Q1830 1051 1838 1050Q1845 1048 1846 1049Q1848 1049 1851 1053Q1854 1056 1855 1059Q1856 1062 1848 1070Q1841 1077 1839 1082L1838 1086M834 900L832 900Q831 900 828 897Q826 894 827 878L828 861M843 887 834 900M732 893L742 892Q753 891 755 889Q758 888 758 879L757 870M732 873L722 881Q711 888 711 894L711 900M1072 849L1075 848Q1079 846 1080 843Q1082 840 1082 837Q1081 834 1079 832Q1077 829 1074 830Q1071 831 1068 834Q1064 837 1064 842Q1065 846 1069 848L1072 849M1133 906L1140 898Q1147 891 1155 886Q1163 882 1162 880Q1162 879 1152 870Q1143 861 1142 858Q1141 855 1144 850Q1146 846 1146 844Q1145 843 1134 838Q1122 832 1113 832Q1104 832 1102 834Q1101 837 1102 843Q1103 849 1111 860Q1119 870 1119 874Q1119 879 1116 886Q1113 894 1113 898Q1113 901 1116 905Q1119 908 1126 907L1133 906M1239 1086L1238 1080Q1236 1075 1229 1065Q1222 1056 1221 1050Q1219 1044 1220 1043Q1221 1041 1232 1044Q1242 1047 1251 1046Q1260 1044 1264 1048Q1269 1053 1272 1054Q1275 1055 1283 1054Q1290 1053 1293 1050Q1296 1047 1295 1042Q1293 1038 1285 1028Q1278 1018 1274 1014Q1270 1011 1270 1008Q1269 1005 1269 998Q1269 990 1268 988Q1267 987 1256 984Q1245 981 1239 976Q1233 970 1230 971Q1227 972 1224 978Q1221 984 1217 1006Q1212 1029 1210 1030Q1209 1031 1196 1024Q1182 1017 1176 1016Q1170 1014 1168 1010Q1166 1005 1163 1003Q1161 1001 1154 1000Q1146 1000 1136 996Q1125 993 1118 985Q1110 978 1101 974Q1092 971 1084 964Q1077 957 1074 959Q1071 960 1069 966Q1067 972 1065 976Q1062 980 1058 981Q1053 982 1051 978Q1049 975 1049 966Q1050 957 1051 955Q1053 952 1058 950Q1063 948 1063 945Q1064 942 1057 941Q1050 939 1046 945Q1042 951 1034 957Q1026 963 1022 963Q1019 963 1016 960Q1014 957 1016 951Q1017 945 1016 938Q1014 930 1016 921Q1018 912 1016 904Q1014 897 1015 894Q1015 891 1025 889Q1035 888 1046 884Q1056 879 1058 881Q1059 882 1061 888Q1063 894 1064 906Q1064 918 1067 926Q1069 933 1072 935Q1074 937 1091 936Q1108 936 1112 932Q1115 927 1115 922Q1114 918 1103 914Q1092 911 1093 898Q1094 885 1092 880Q1090 876 1086 873Q1083 871 1078 870Q1074 869 1066 871Q1059 872 1055 868Q1051 864 1044 862Q1038 861 1032 858Q1026 854 1014 855Q1002 855 990 850Q978 844 972 846Q966 847 964 850Q961 852 965 858Q969 865 980 871Q990 878 992 882Q995 885 993 891Q991 897 984 904Q978 910 975 910Q972 909 958 899Q943 888 940 879Q937 870 934 867Q930 865 927 867Q925 870 924 874Q923 879 924 880Q924 882 932 887Q939 892 939 898Q940 903 938 907Q936 912 933 914Q930 916 921 918Q912 920 906 927Q900 934 890 932Q879 929 876 930Q872 930 867 936Q861 942 849 948Q837 954 836 956Q835 957 835 966Q836 975 833 980Q831 985 828 986Q825 987 813 984Q801 981 797 977Q793 972 790 971Q786 970 782 971L777 972M753 1006L764 1015Q774 1025 782 1028Q789 1030 794 1030Q798 1030 803 1028Q808 1026 808 1018Q808 1011 810 1008Q811 1005 818 1002Q825 999 828 1000Q831 1001 832 1003Q833 1005 824 1016Q816 1026 816 1034L817 1041M-9 893 3 889M1 855 -9 853M1892 1086L1889 1078Q1886 1071 1889 1062Q1892 1053 1890 1044Q1888 1035 1879 1030Q1869 1025 1863 1019Q1857 1012 1848 1006Q1839 1001 1836 997Q1833 993 1831 987Q1829 981 1823 976Q1817 972 1816 966Q1814 960 1816 958Q1818 955 1826 952Q1833 949 1836 949Q1839 950 1840 952Q1841 954 1838 960Q1834 966 1835 970Q1835 975 1848 978Q1860 980 1863 989Q1866 998 1868 1000Q1869 1001 1878 1002Q1887 1003 1893 1010Q1899 1016 1904 1016Q1908 1017 1909 1014Q1910 1011 1908 1004Q1905 996 1906 993Q1906 990 1908 984Q1910 978 1911 970Q1912 963 1917 952Q1923 942 1921 939Q1919 936 1911 932Q1903 927 1902 924Q1900 921 1906 906Q1912 891 1908 885Q1903 879 1903 876Q1902 873 1905 869Q1908 865 1917 861L1926 858M129 927L136 920Q143 912 147 904Q151 897 161 891Q171 885 174 879Q178 873 177 870Q177 866 174 865Q171 864 162 868Q153 872 146 873Q138 874 123 885Q108 897 108 900Q107 903 109 912Q111 921 117 924Q123 927 126 927L129 927M-9 1029L2 1028Q12 1027 20 1030Q27 1032 36 1029Q45 1026 52 1021Q60 1016 66 1016Q72 1016 80 1020Q87 1023 93 1020Q99 1017 99 1014Q99 1011 93 1006Q86 1002 85 998Q83 993 88 982Q93 972 93 962Q92 951 100 944Q108 936 109 933Q109 930 109 927Q108 924 97 920Q87 917 78 921Q69 926 64 926L60 926M61 954L65 960Q70 966 70 969Q70 972 59 982Q48 991 44 991Q39 992 27 989L15 986M1214 900L1214 897Q1214 894 1211 891Q1209 888 1206 888Q1203 888 1201 889Q1199 891 1199 892Q1199 894 1201 897Q1203 899 1206 900Q1209 901 1212 901L1214 900M1291 987L1295 984Q1298 981 1299 974Q1301 966 1308 962Q1315 957 1318 954Q1320 951 1322 939Q1323 927 1321 924Q1320 921 1315 918Q1311 915 1304 913Q1296 911 1290 905Q1284 899 1283 900Q1281 900 1284 906Q1286 912 1286 915Q1286 918 1282 921Q1278 923 1275 922Q1271 921 1266 915Q1260 909 1250 910Q1239 911 1230 907Q1221 904 1218 903Q1215 903 1211 909Q1207 915 1207 916Q1207 918 1214 925Q1221 932 1230 932Q1239 933 1246 938Q1254 942 1264 946Q1275 951 1278 958Q1281 966 1281 975Q1281 984 1283 986Q1286 987 1288 987L1291 987M1174 990L1187 984Q1201 978 1204 975Q1207 972 1208 969Q1208 966 1208 960Q1207 954 1205 951Q1203 948 1198 947Q1194 945 1185 944Q1176 944 1173 941Q1170 939 1170 936Q1170 933 1179 932Q1188 932 1191 929Q1195 927 1198 922Q1201 918 1190 911Q1179 904 1176 905Q1173 906 1168 910Q1164 914 1154 917Q1143 920 1138 924Q1134 928 1132 932Q1130 936 1131 940Q1132 945 1139 952Q1146 960 1147 971Q1149 981 1156 987Q1164 992 1169 991L1174 990M462 1086L460 1083Q459 1080 455 1075Q451 1071 452 1064Q454 1056 455 1055Q456 1054 465 1053Q474 1053 483 1055Q492 1057 498 1053Q504 1048 512 1045Q519 1042 521 1038Q522 1035 521 1024Q519 1014 509 1009Q498 1004 492 1010Q486 1016 478 1017Q471 1019 463 1030Q455 1041 453 1043Q450 1044 445 1041Q441 1038 438 1030Q435 1023 434 1017Q434 1011 431 1009Q429 1006 423 1006Q417 1006 410 1013Q402 1019 394 1020Q387 1021 385 1020Q383 1020 382 1018Q381 1017 383 1012Q384 1008 375 1014Q366 1019 357 1032Q348 1044 346 1045Q345 1046 342 1045Q339 1044 334 1038Q329 1032 333 1024Q337 1017 338 1010Q339 1002 360 987Q381 972 385 968Q389 963 391 958Q392 954 390 951Q387 948 382 946Q378 944 370 943Q363 942 360 944Q357 946 354 955Q351 964 348 966Q345 968 342 967Q339 966 337 958Q335 951 336 938Q337 924 333 920Q330 917 324 914Q318 912 315 916Q311 921 311 926Q310 930 311 936Q313 942 318 950Q323 957 323 960Q323 963 320 965Q318 968 316 968Q315 968 304 962Q294 956 287 957Q280 957 280 962Q281 966 287 981Q294 996 293 998Q292 999 286 1002Q279 1005 276 1008Q273 1011 273 1023Q273 1035 270 1038Q267 1041 260 1045Q252 1048 250 1052Q248 1056 247 1065Q246 1074 243 1074Q240 1074 236 1068Q231 1062 224 1057Q216 1053 213 1052Q210 1052 204 1057Q198 1062 192 1062Q186 1062 176 1067Q166 1071 165 1072Q165 1074 166 1080L167 1086M969 1086L968 1080Q967 1074 965 1068Q962 1062 965 1054Q969 1047 969 1044Q968 1041 965 1038Q962 1035 951 1029Q940 1023 942 1017Q944 1011 942 1000Q941 990 944 981Q948 972 948 969Q947 966 938 961Q930 955 922 964Q915 972 912 974Q909 976 906 977Q903 977 895 972Q886 966 885 963Q883 960 893 951Q903 941 908 942Q912 942 921 948Q930 953 934 951Q939 949 945 948Q951 947 954 945Q957 942 959 934Q961 927 967 922Q972 917 975 916Q978 914 982 916Q987 919 989 923Q990 927 989 934Q987 942 984 948Q981 954 980 969Q979 984 976 992Q973 999 975 1002Q978 1005 987 1010Q996 1015 998 1017Q999 1020 998 1029Q997 1038 991 1047Q984 1056 983 1059Q982 1062 988 1074L994 1086M1575 978L1572 978Q1569 977 1566 975Q1564 972 1562 963Q1560 954 1560 950Q1560 945 1563 942Q1565 939 1573 936Q1580 933 1582 925Q1584 917 1587 915Q1590 914 1593 915Q1596 915 1599 918Q1602 921 1602 924Q1603 927 1597 938Q1592 948 1590 958Q1589 969 1586 972Q1584 975 1579 977L1575 978M-9 971 6 976M1390 1014L1390 1012Q1391 1011 1389 1003Q1386 995 1391 993Q1396 990 1398 982Q1400 975 1407 971Q1413 968 1416 970Q1419 972 1420 975Q1421 978 1421 982Q1420 987 1417 993Q1415 999 1415 1000Q1416 1002 1421 1005Q1427 1008 1436 1010Q1446 1013 1452 1012Q1458 1012 1461 1010Q1464 1008 1464 1005Q1465 1002 1459 994Q1454 987 1454 980Q1455 972 1447 971Q1440 970 1437 968Q1434 966 1426 953Q1419 940 1406 942Q1392 945 1386 941Q1380 938 1377 938Q1374 938 1370 942Q1366 945 1363 960Q1360 975 1358 978Q1356 981 1346 982Q1335 982 1326 985Q1317 987 1313 990Q1310 993 1308 996Q1307 999 1308 1005Q1309 1011 1315 1014Q1320 1017 1323 1016Q1326 1016 1335 1009Q1344 1001 1348 1000Q1353 998 1366 1002Q1379 1005 1383 1009Q1386 1013 1388 1013L1390 1014M1893 972L1888 973Q1884 974 1878 974Q1872 973 1868 970Q1863 966 1861 960Q1858 954 1861 950Q1864 945 1868 941Q1872 938 1876 939Q1881 940 1889 952Q1896 963 1897 966Q1897 969 1895 971L1893 972M141 978L147 972Q153 966 156 958Q159 951 151 951Q144 952 138 947Q132 942 128 942Q123 942 121 946Q118 951 121 960Q123 969 126 972Q129 975 135 977L141 978M1495 1044L1501 1042Q1506 1040 1515 1039Q1524 1039 1526 1034Q1529 1029 1529 1020Q1530 1011 1522 1007Q1515 1003 1512 1000Q1508 996 1507 993Q1506 990 1507 982Q1507 975 1504 970Q1500 965 1496 962Q1491 959 1479 957Q1467 954 1462 962Q1457 969 1467 970Q1476 971 1479 973Q1482 975 1485 992Q1488 1008 1487 1011Q1486 1014 1481 1020Q1475 1026 1475 1029Q1475 1032 1480 1039Q1485 1046 1490 1045L1495 1044M871 1086 876 1071M860 1026L853 1022Q846 1017 845 1014Q844 1011 845 1005Q846 999 844 992Q842 984 844 978Q845 972 847 971Q849 970 852 971Q854 972 858 980Q862 987 870 992Q878 996 885 1001Q891 1006 897 1003Q902 999 906 999Q909 999 915 1011Q921 1022 927 1026Q933 1029 930 1031Q927 1034 921 1036L915 1038M936 1065L938 1066Q939 1068 939 1071Q939 1074 937 1075Q936 1077 927 1076L918 1076M324 999L322 998Q320 996 320 993Q320 990 321 986Q322 981 325 980Q327 979 329 981Q330 984 331 988Q331 993 330 994Q330 996 327 998L324 999M1029 1015L1023 1015Q1017 1015 1011 1013Q1004 1011 1003 1006Q1002 1002 1004 998Q1005 993 1012 990Q1020 986 1025 988Q1030 990 1032 993Q1034 996 1034 1000Q1034 1005 1034 1008Q1033 1011 1031 1013L1029 1015M795 1009L790 1009Q786 1010 782 1009Q779 1008 777 1006Q775 1005 775 1002L774 999M781 993L789 991Q798 988 800 995Q802 1002 798 1005L795 1009M1007 1086L1007 1071Q1007 1056 1012 1049Q1017 1043 1020 1040Q1023 1038 1026 1037Q1029 1037 1035 1042Q1041 1046 1048 1049Q1056 1051 1056 1045Q1055 1038 1057 1035Q1058 1032 1064 1031Q1071 1030 1075 1028Q1080 1026 1081 1023Q1083 1020 1084 1013Q1085 1005 1089 1002Q1092 1000 1098 1002Q1104 1004 1112 1010Q1119 1017 1131 1022Q1143 1027 1146 1026Q1149 1026 1156 1023Q1164 1020 1168 1026Q1171 1032 1178 1034Q1185 1037 1188 1039Q1191 1041 1192 1046Q1193 1050 1191 1059Q1189 1068 1185 1070Q1182 1073 1174 1074Q1167 1075 1166 1077Q1164 1078 1164 1082L1164 1086M12 1011L9 1012Q6 1012 4 1010Q2 1008 3 1006Q3 1005 7 1005Q11 1005 12 1008L12 1011M735 1086 732 1076M718 1065L718 1062Q718 1059 720 1055L723 1051M746 1032L742 1028Q738 1024 732 1024Q726 1023 724 1022Q723 1020 722 1014Q720 1008 712 1006Q705 1004 698 1008Q690 1011 686 1020Q682 1029 682 1032Q682 1035 687 1046Q693 1056 693 1060Q693 1065 678 1072Q663 1080 660 1083L658 1086M1478 1086L1483 1077Q1487 1068 1487 1065Q1487 1062 1485 1060Q1482 1058 1474 1061Q1467 1064 1460 1061Q1453 1059 1451 1048Q1450 1038 1446 1034Q1443 1029 1438 1030Q1434 1030 1426 1035Q1419 1039 1407 1042Q1395 1044 1386 1037Q1377 1030 1352 1025Q1326 1020 1323 1023Q1320 1025 1318 1030Q1316 1035 1318 1047Q1319 1059 1317 1064Q1316 1068 1313 1070Q1311 1072 1300 1075Q1290 1077 1286 1082L1281 1086M1845 1039L1842 1033Q1839 1026 1839 1024Q1839 1023 1841 1022Q1842 1022 1845 1023Q1848 1024 1849 1026Q1850 1029 1849 1033Q1848 1037 1846 1038L1845 1039M615 1086L616 1083Q618 1081 622 1079Q627 1078 632 1075Q638 1071 639 1068Q641 1065 642 1060Q642 1056 651 1048Q660 1041 661 1038Q662 1035 661 1034Q661 1032 654 1029Q648 1026 642 1026Q636 1026 634 1029Q632 1032 631 1039Q630 1046 627 1046Q624 1047 616 1046Q609 1045 603 1049Q597 1054 587 1058Q577 1062 576 1065Q574 1068 573 1077L571 1086M1768 1086L1763 1081Q1758 1077 1753 1065Q1747 1053 1742 1048Q1737 1043 1734 1035Q1732 1026 1730 1025Q1728 1025 1722 1029Q1716 1033 1714 1043Q1711 1053 1709 1056Q1708 1059 1696 1062Q1684 1065 1684 1076L1685 1086M270 1086L269 1082Q268 1077 269 1074Q270 1072 279 1067Q288 1062 285 1052Q283 1041 284 1038Q285 1035 290 1033Q294 1031 297 1033Q300 1034 310 1051Q321 1068 324 1070Q327 1072 333 1070Q338 1068 346 1062Q354 1056 369 1059Q384 1061 388 1061Q393 1060 395 1058Q398 1056 400 1049Q402 1042 404 1040Q405 1038 406 1038Q408 1038 410 1043Q413 1047 411 1054Q409 1062 409 1074L410 1086M551 1086L549 1071Q547 1056 552 1052Q558 1049 560 1045Q562 1041 560 1039Q558 1037 552 1035Q546 1034 543 1035Q540 1035 537 1038Q535 1041 540 1048Q544 1056 537 1060Q531 1064 525 1073Q519 1082 514 1075Q509 1068 504 1065Q498 1063 496 1063Q495 1063 494 1066Q492 1069 492 1078L493 1086M1112 1086L1113 1078Q1114 1071 1115 1070Q1116 1068 1122 1067Q1128 1066 1138 1067Q1149 1069 1153 1067Q1157 1065 1159 1059Q1161 1053 1160 1046Q1158 1040 1152 1037Q1146 1034 1137 1039Q1128 1043 1120 1041Q1113 1039 1110 1040Q1107 1040 1105 1044Q1103 1047 1106 1053Q1108 1059 1108 1061Q1107 1064 1098 1061Q1089 1058 1086 1060Q1082 1062 1078 1068Q1074 1074 1056 1070Q1038 1067 1033 1070Q1027 1074 1024 1080L1021 1086M1356 1051L1353 1048Q1351 1044 1352 1041Q1353 1038 1355 1039Q1357 1041 1357 1046Q1358 1050 1357 1051L1356 1051M114 1086L114 1082Q114 1077 108 1064Q102 1050 96 1058Q90 1065 87 1067Q84 1069 76 1061Q69 1053 64 1051Q60 1049 52 1051Q43 1053 40 1056Q38 1059 39 1065Q41 1071 47 1078L53 1086M1542 1086L1541 1077Q1540 1068 1535 1060Q1530 1052 1527 1050Q1524 1048 1518 1052Q1512 1056 1508 1060Q1504 1065 1507 1076L1510 1086M1351 1086L1352 1076Q1353 1066 1356 1058Q1359 1051 1364 1052Q1368 1054 1377 1053Q1386 1052 1388 1056Q1390 1059 1390 1065Q1390 1071 1392 1072Q1395 1073 1402 1072Q1410 1071 1420 1065Q1431 1058 1438 1059Q1444 1059 1446 1060Q1448 1062 1450 1074L1452 1086M29 1086L26 1074Q24 1062 21 1060Q18 1057 12 1058Q6 1059 2 1066Q-3 1074 -6 1075L-9 1077M1926 1059L1922 1062Q1917 1065 1910 1076L1903 1086M1195 1086L1195 1078Q1196 1071 1200 1068Q1203 1065 1209 1064Q1215 1062 1219 1065Q1223 1068 1224 1077L1226 1086M1710 1086L1711 1077Q1712 1068 1716 1066Q1719 1063 1722 1066Q1725 1069 1728 1078L1731 1086M200 1086L200 1078Q201 1071 202 1070Q204 1069 219 1074Q234 1079 236 1082L237 1086M318 1086L315 1080Q312 1074 309 1072Q306 1071 308 1078L310 1086M793 1086 800 1074"/><path stroke="#c9d3d6" d="M141 42L146 44Q150 46 154 41L157 36M244 36L234 43Q225 51 216 50L207 50M165 47L159 50Q153 52 151 54Q150 57 152 62Q155 66 169 74L183 82M222 102L221 96Q219 90 220 87Q222 84 226 81Q231 78 238 75Q246 73 254 69L261 64M247 96L242 99Q237 102 238 105L240 108M168 152L164 149Q159 146 157 141Q155 135 156 118Q158 102 156 97Q153 92 150 91Q147 89 142 90Q138 90 136 96Q135 102 132 105Q129 108 126 109Q123 109 120 100Q117 91 110 84Q102 77 98 66L94 54M102 121L110 119Q117 117 119 118Q122 120 124 126Q126 132 122 141Q118 150 119 156Q120 162 123 164Q126 166 129 167Q132 167 138 163Q144 158 147 159Q149 159 149 164Q149 168 147 172Q144 176 126 180Q108 184 104 186L100 189M150 198L151 192Q152 186 155 185Q159 184 168 185Q177 187 195 201L213 215M1527 208L1529 206Q1532 204 1532 198Q1531 192 1526 187Q1521 182 1517 177Q1513 171 1505 164L1496 156M1528 117L1521 123Q1513 129 1513 135Q1513 141 1517 145Q1521 149 1530 150Q1539 151 1544 158Q1548 165 1555 170Q1562 174 1566 182Q1570 189 1572 200L1574 210M1566 147L1561 138Q1555 129 1554 124Q1552 120 1555 113L1557 106M1660 447L1664 450Q1668 453 1680 453Q1692 453 1695 452Q1698 451 1700 447Q1703 444 1704 441Q1704 438 1699 429Q1694 420 1704 416L1715 411M1728 420L1727 426Q1726 432 1728 440Q1729 447 1723 454Q1717 462 1716 465Q1715 468 1717 473Q1719 478 1728 490L1737 501M123 60L125 57Q127 54 127 51Q126 48 125 45Q123 42 120 41L117 39M109 45L108 50Q106 54 110 57Q114 60 119 60L123 60M1551 261L1554 254Q1558 246 1565 242L1572 238M1545 224L1535 227Q1525 231 1525 234Q1524 237 1526 242Q1528 246 1536 255Q1545 264 1543 268Q1541 273 1534 282L1527 290M1515 260L1513 256Q1511 252 1504 244L1497 237M590 738L595 740Q600 742 615 742Q630 743 636 738Q642 732 646 737Q651 742 656 742Q660 741 667 737Q674 732 675 722L677 711M1670 495L1669 492Q1668 489 1662 482L1656 475M731 990L735 981Q738 972 745 969Q753 966 754 964Q755 963 755 956Q755 948 767 940Q778 933 779 924Q780 915 783 910L787 906M756 907L752 913Q748 918 747 924Q745 930 746 940Q746 951 742 954Q738 957 735 958Q732 958 726 956Q720 955 711 960Q702 966 692 965Q681 965 680 965Q678 965 677 967Q676 969 675 975Q674 981 676 983Q678 986 693 983Q708 981 711 982Q714 983 718 987Q723 991 727 990L731 990M1703 498L1701 495Q1699 492 1693 490Q1686 488 1682 490Q1678 492 1678 495Q1678 498 1681 501L1683 504M656 996L655 986Q655 975 658 968Q660 960 649 954Q638 948 634 943Q630 938 623 933Q616 927 615 916Q614 906 606 898L598 891M612 838L615 838Q618 838 622 841L627 844M630 903L633 905Q636 907 639 906Q642 906 648 898L654 891M708 808L705 812Q702 816 699 827Q696 838 694 839Q693 840 687 837Q681 834 674 826Q667 819 669 813Q671 807 671 800Q671 792 673 789Q674 786 678 784Q681 781 686 782Q690 782 693 789Q696 795 699 798Q702 801 705 800Q708 799 712 796Q717 792 717 788Q718 783 715 766Q712 750 709 745Q705 739 702 738Q699 737 694 740Q690 743 687 752Q684 760 681 763Q678 766 670 766Q662 765 652 760Q642 755 633 759Q624 763 614 764Q605 765 600 768Q596 771 592 775Q588 780 578 779L567 779M594 793L610 788Q627 782 643 787Q658 792 658 801Q658 810 660 814Q662 819 653 829Q645 839 637 829Q629 819 625 817Q621 815 618 817Q615 818 610 824Q606 829 600 829Q594 830 590 831Q585 833 575 846L564 858M561 928L563 929Q565 930 566 936Q567 942 568 944Q570 946 574 946Q579 945 584 942Q588 938 596 942Q603 946 610 948Q618 950 619 956Q619 963 622 970Q625 978 623 986Q621 994 606 992Q591 991 568 995L546 998M564 972L565 969Q565 966 563 961Q561 956 550 951L540 946M670 957L673 952Q677 948 686 943Q696 938 699 937Q702 937 710 940Q717 944 721 940Q725 936 727 932Q729 927 727 914Q724 900 728 896L732 893M711 900L706 906Q702 913 699 914Q696 915 684 913Q672 912 665 916Q657 921 657 924Q656 927 661 938Q666 948 665 952Q663 957 667 957L670 957M777 972L771 977Q765 981 759 983Q753 985 749 988Q746 990 746 993Q746 996 749 1001L753 1006M588 930L580 929Q571 927 570 926Q568 924 571 918Q574 912 579 907Q585 901 586 901Q588 901 590 903Q591 905 594 913Q596 921 595 923Q594 926 591 928L588 930M774 999 781 993"/><path stroke="#1b97d4" d="M585 105L580 105Q576 106 575 108L574 111M558 42L559 39Q560 36 559 27L557 18M618 27L609 28Q600 29 591 37Q582 44 576 45Q570 46 568 55Q565 63 556 72L546 82M561 90L564 89Q567 88 574 82Q580 75 583 67Q585 59 588 58Q591 58 603 62Q616 66 618 68L621 69M618 77L612 79Q606 81 605 84Q605 87 607 93Q609 99 623 110L636 120M726 66L730 66Q735 67 741 63Q747 59 759 54Q771 50 774 53Q778 57 776 60Q775 63 758 70Q741 78 734 91Q726 104 722 107L718 111M767 93L771 91Q774 88 778 88L783 88M1140 102L1139 96Q1138 90 1144 81Q1150 72 1152 63Q1153 54 1157 47Q1161 40 1164 39Q1167 38 1170 39Q1173 40 1182 49L1191 59M1122 44L1125 50Q1127 57 1123 66Q1119 75 1120 86Q1121 96 1119 100Q1116 103 1107 103L1098 104M1185 74L1181 82Q1177 90 1170 94Q1162 99 1160 111L1158 123M1393 330L1392 344Q1391 357 1389 360Q1386 362 1370 366L1353 371M1404 437L1405 417Q1406 396 1407 394Q1408 393 1415 391Q1422 389 1430 391Q1437 394 1444 393L1452 392M1435 444L1435 448Q1436 453 1441 460L1446 468M1704 192L1707 195Q1710 198 1710 202Q1711 207 1709 209Q1707 212 1701 212L1695 213M1794 771L1797 769Q1800 767 1801 765Q1803 762 1800 754Q1798 747 1800 744Q1803 742 1812 740Q1821 739 1824 740Q1827 741 1825 750Q1824 759 1828 765Q1833 771 1836 772Q1839 773 1845 768Q1851 762 1857 750Q1863 738 1872 743Q1881 748 1888 745Q1896 743 1899 740L1902 738M1891 714 1894 705M1815 65L1810 64Q1806 62 1800 56L1794 50M1764 81L1762 82Q1761 82 1755 81Q1749 79 1748 80Q1746 81 1741 102Q1736 123 1730 129Q1725 134 1721 142Q1718 150 1712 153Q1707 155 1703 154L1698 153M1701 133L1708 120Q1715 108 1714 93Q1712 78 1719 72Q1725 65 1736 64Q1746 62 1747 59L1749 57M1869 119L1865 115Q1861 111 1858 104Q1854 97 1851 96Q1848 94 1844 95Q1839 97 1836 101Q1833 105 1839 118Q1845 131 1848 134Q1851 137 1854 138Q1857 139 1866 137Q1875 135 1876 136Q1878 137 1878 139Q1878 141 1875 144Q1872 147 1866 148Q1860 149 1851 157Q1842 165 1833 162Q1824 160 1815 163Q1806 167 1798 167Q1791 167 1789 170Q1787 174 1786 178Q1785 183 1789 190Q1792 198 1787 200Q1782 202 1778 201Q1773 201 1765 192Q1756 183 1747 179Q1737 175 1734 170Q1731 165 1731 162Q1731 159 1737 149Q1743 138 1746 136Q1749 134 1755 135Q1762 135 1766 139Q1770 142 1782 142Q1794 143 1804 147Q1815 151 1818 150Q1821 149 1822 143Q1823 138 1821 128Q1820 117 1817 115Q1815 112 1808 109Q1800 106 1799 104Q1797 102 1805 95Q1812 88 1815 78Q1818 68 1830 66Q1842 64 1856 68Q1869 72 1870 70Q1872 69 1870 62L1869 54M1878 80L1878 89Q1878 99 1883 105L1887 111M1782 108L1776 107Q1770 105 1769 102Q1767 99 1770 97Q1773 95 1778 96Q1782 98 1784 101Q1787 105 1784 107L1782 108M1846 240L1843 234Q1839 228 1836 228Q1833 229 1826 235L1818 241M1809 240L1806 234Q1804 228 1802 213Q1800 198 1811 195Q1821 191 1830 182Q1839 173 1848 173Q1857 174 1866 169Q1875 164 1878 164L1881 164M1869 202L1868 203Q1866 204 1856 202Q1847 201 1844 202Q1840 204 1839 207Q1837 210 1839 213Q1842 216 1846 216Q1851 217 1860 214Q1869 212 1874 213Q1878 214 1887 211L1896 208M1878 225 1866 244M1755 237L1750 236Q1746 235 1744 230Q1741 225 1735 219Q1729 213 1729 210Q1729 207 1733 204Q1737 200 1742 200Q1746 200 1749 204Q1752 207 1757 218Q1762 228 1761 231Q1760 234 1757 236L1755 237M1713 218L1719 222Q1725 225 1728 231Q1731 237 1728 245L1725 253M1419 373L1413 371Q1407 369 1405 366Q1403 363 1408 354Q1414 345 1410 339Q1407 333 1407 331L1407 330M1419 330L1423 344Q1428 357 1427 363Q1426 369 1422 371L1419 373M770 765L772 762Q775 759 775 754Q776 750 770 742Q764 735 768 729Q772 723 770 714Q767 705 768 699L768 693M753 766L758 767Q762 767 766 766L770 765M1386 399L1387 402Q1389 405 1388 410Q1387 414 1382 422L1377 430M1799 723L1796 726Q1794 728 1790 726L1786 723M84 606L83 615Q81 624 83 628Q84 633 86 634Q87 635 90 634Q93 633 96 628Q99 622 102 622L105 621M90 662L84 666Q79 669 77 672Q76 675 75 684Q75 693 69 702Q63 712 57 709Q51 706 44 706Q36 705 30 700Q24 696 24 699Q24 702 32 717Q39 732 39 736Q39 741 38 743Q36 745 26 750Q15 754 10 755Q6 756 5 758Q4 759 4 762Q4 765 11 768Q18 770 20 774Q23 777 20 780L18 782M865 876L866 874Q867 872 872 871Q876 870 884 875Q892 879 894 882L896 885M897 711 884 696M800 711L801 718Q801 724 808 725Q816 725 822 732Q828 738 836 741Q843 745 846 744Q849 743 851 740Q852 738 849 728Q845 717 846 712Q846 707 849 705Q852 704 862 705Q873 706 877 715Q881 723 877 734Q874 744 875 749Q876 753 879 754Q882 756 896 751L910 747M891 764L886 763Q882 763 880 763Q879 764 876 770Q873 775 862 780Q852 784 852 792Q851 801 847 807Q843 812 836 813Q828 813 823 810Q817 807 814 802Q811 798 818 786Q825 774 826 770Q826 765 825 760Q824 756 821 753Q819 750 810 744Q801 739 798 739Q795 740 793 743Q792 747 796 765Q801 783 799 789Q798 794 795 797Q792 799 790 799Q789 799 782 793Q774 787 770 787Q765 787 762 790Q759 792 754 800Q750 807 751 810Q752 813 757 816Q762 819 772 814Q783 809 786 809Q789 810 790 830Q792 849 790 855Q789 861 784 865Q778 870 779 878L780 885M1409 480L1407 474Q1404 468 1400 466Q1395 463 1388 465L1380 467M0 682L4 677Q9 672 15 674Q21 676 33 676Q45 677 50 676Q54 674 58 672Q61 669 63 666Q65 663 64 660Q64 657 63 651Q62 645 59 642Q57 639 51 638Q45 637 36 641Q27 645 24 643Q21 642 20 639Q19 636 18 621Q18 606 21 603Q24 600 26 606Q29 612 34 614Q39 616 47 613Q55 609 69 594L84 579M2 654L1 658Q0 662 -4 662L-9 662M36 780L37 777Q37 774 44 768Q51 763 64 762Q78 762 87 757Q96 753 105 750L115 747M99 708L97 702Q96 696 96 692Q97 687 103 682L108 677M816 715L813 714Q810 713 809 710Q807 708 809 699L810 689M1860 720L1857 717Q1854 714 1849 712Q1845 710 1836 714Q1827 717 1824 717Q1821 716 1817 712L1812 708M1863 720 1860 720M3 753L9 736Q15 720 13 718Q12 717 9 717Q6 717 -2 723L-9 728M84 734L82 734Q81 735 79 733Q77 732 76 729Q75 726 77 724Q78 721 81 721Q84 721 86 723Q87 724 86 729L84 734M1806 819L1810 813Q1815 808 1818 814Q1822 819 1824 821L1827 823M1848 816L1848 810Q1848 804 1844 796Q1839 788 1838 788Q1836 788 1828 796Q1821 805 1818 806Q1815 807 1812 801Q1808 795 1801 788Q1794 781 1784 783L1773 784M1881 764L1878 766Q1875 768 1875 771Q1874 774 1878 783Q1883 792 1882 801Q1881 811 1884 811Q1887 811 1893 808Q1899 805 1912 802L1926 799M885 844L882 844Q879 845 876 844Q873 843 871 837Q868 831 870 825Q871 819 870 812Q868 804 872 798Q875 792 876 786Q877 780 881 778Q885 776 890 778Q894 780 896 783Q898 786 898 789Q898 792 893 800Q889 807 889 810Q889 813 901 817L912 821M828 861L818 854Q808 846 806 843Q805 840 807 836Q809 831 814 828Q819 826 822 826Q825 827 832 832Q840 837 841 846Q843 855 850 862Q857 870 856 873Q855 876 849 881L843 887M757 870L760 866Q762 861 761 855Q760 849 767 843Q774 837 774 836Q774 834 773 833Q771 831 766 831Q762 830 756 834Q749 837 752 844Q755 852 754 858Q753 864 750 867Q747 869 740 871L732 873"/><path stroke="#1e5590" d="M1854 348L1851 350Q1848 352 1844 346Q1839 341 1832 336L1824 331M45 459L51 463Q57 466 63 467Q69 467 75 459Q81 451 84 450L87 449M1896 390L1893 396Q1890 402 1887 405Q1884 408 1880 407Q1875 407 1870 403Q1865 399 1865 398Q1864 396 1866 394Q1867 393 1874 391Q1881 389 1884 386Q1886 384 1884 375Q1881 366 1882 363Q1882 360 1885 355Q1887 349 1893 341L1899 334M1830 402L1826 402Q1822 402 1818 396Q1815 390 1812 389Q1809 389 1797 388Q1785 388 1781 392Q1776 396 1773 397Q1770 397 1767 392L1763 387M1773 347L1778 354Q1782 360 1785 363Q1788 365 1791 362Q1794 360 1796 354Q1798 348 1800 345Q1803 342 1806 341L1809 340M1815 341L1815 350Q1815 360 1818 365Q1821 369 1824 371Q1827 372 1836 370Q1844 369 1844 381Q1843 393 1837 398L1830 402M1829 468L1829 465Q1830 462 1832 462Q1833 461 1839 464Q1845 467 1846 467Q1848 466 1850 464Q1852 462 1853 453Q1855 444 1858 440Q1861 435 1865 433Q1869 430 1877 428Q1886 426 1895 418L1905 409M1773 426L1782 421Q1791 417 1806 422Q1821 427 1823 432Q1825 438 1824 444Q1823 450 1813 455Q1803 460 1797 466L1791 472M0 455 12 442M1899 453L1896 455Q1893 456 1888 456Q1884 456 1879 457Q1874 459 1870 462Q1866 465 1865 468L1865 471M1896 465 1926 477M1772 441L1771 439Q1770 437 1768 437L1767 436M84 579L83 576Q82 573 77 570Q71 567 69 564Q67 561 67 556Q68 552 70 548Q72 545 75 544Q78 543 87 545L96 547M75 529L72 529Q69 529 67 527Q64 525 63 522Q63 519 65 507Q67 495 65 490Q63 486 60 483Q57 481 52 480Q48 479 40 480Q33 482 27 489Q21 497 10 492Q0 486 -4 487L-9 487M0 504L4 512Q8 519 12 534Q16 549 29 552Q42 555 48 558Q55 561 60 566Q65 570 66 576L67 582M30 517L27 515Q24 513 24 508Q25 504 28 504Q30 505 33 507Q36 510 36 512Q36 513 33 515L30 517M6 569L9 563Q11 558 10 556Q9 554 0 551L-9 547M817 1041L815 1044Q813 1047 810 1048Q807 1049 800 1047Q792 1046 788 1048Q784 1050 773 1059Q762 1069 760 1077L758 1086M3 889L7 884Q12 879 6 867L1 855M60 926L58 920Q57 915 57 906Q57 897 55 892Q53 888 45 882Q36 875 32 876Q27 876 25 879Q23 882 24 890Q24 897 22 904Q19 912 20 915Q21 918 30 927Q39 936 46 936Q54 936 58 945L61 954M15 986 -9 995M6 976L9 975Q12 974 15 970Q18 966 19 962Q20 957 16 951Q12 945 2 937L-9 930M876 1071L883 1064Q891 1056 892 1053Q893 1050 891 1049Q888 1048 880 1050Q873 1052 870 1051Q867 1050 865 1046Q863 1041 861 1034L860 1026M915 1038L912 1041Q908 1044 912 1048Q916 1053 926 1059L936 1065M918 1076L915 1078Q912 1080 912 1083L911 1086M732 1076 718 1065M723 1051L730 1051Q738 1050 741 1049Q744 1047 745 1044Q747 1041 746 1036L746 1032M800 1074L805 1072Q810 1070 826 1074Q842 1077 845 1082L847 1086"/></g></svg><svg class="r" style="left:57px;top:55px;" width="32" height="42" viewBox="0 0 32 42"><defs><linearGradient id="dtc" x1="0" y1="0" x2="1" y2="0"><stop offset="0" stop-color="#9a9ca2"/><stop offset="0.15" stop-color="#d4d6da"/><stop offset="0.3" stop-color="#a8aaae"/><stop offset="0.45" stop-color="#e2e3e6"/><stop offset="0.6" stop-color="#a8aaae"/><stop offset="0.8" stop-color="#d0d2d6"/><stop offset="1" stop-color="#8a8c92"/></linearGradient></defs><path d="M1.5 7 V37 Q16 43.5 30.5 37 V7z" fill="url(#dtc)"/><ellipse cx="16" cy="7.5" rx="15" ry="5" fill="#dcdde0" stroke="#9a9a9a" stroke-width="0.6"/><path d="M1 8 Q16 14 31 8 V11 Q16 17 1 11z" fill="#c8c9cc"/><path d="M12 6 V2 H20 V6" fill="none" stroke="#a8a8a8" stroke-width="1.4"/></svg><div class="t" style="left:53.82px;top:102px;font-size:13.5px;letter-spacing:0.069px;line-height:24px;color:#f4f4f4;text-shadow:0 1px 2px #000,0 0 3px #000;">Trash</div><svg class="r" style="left:50px;top:174px;" width="46" height="34" viewBox="0 0 46 34"><defs><linearGradient id="hdt" x1="0" y1="0" x2="0" y2="1"><stop offset="0" stop-color="#f4f4f4"/><stop offset="1" stop-color="#d6d6d6"/></linearGradient><linearGradient id="hdf" x1="0" y1="0" x2="1" y2="0"><stop offset="0" stop-color="#000"/><stop offset="1" stop-color="#9a9a9a"/></linearGradient></defs><path d="M7 0.5 H39 L45.5 26 H0.5z" fill="url(#hdt)" stroke="#8a8a8a" stroke-width="0.8"/><ellipse cx="23" cy="16" rx="16" ry="9" fill="none" stroke="#b4b4b4" stroke-width="0.8"/><ellipse cx="23" cy="16" rx="5.5" ry="2.8" fill="none" stroke="#aaa" stroke-width="0.8"/><rect x="0.5" y="26" width="45" height="7.5" fill="#9a9a9a" stroke="#555" stroke-width="0.6"/><rect x="6" y="27" width="38" height="5" fill="url(#hdf)"/></svg><div class="t" style="left:33.82px;top:216px;font-size:13.5px;letter-spacing:0.350px;line-height:24px;color:#f4f4f4;text-shadow:0 1px 2px #000,0 0 3px #000;">File System</div><svg class="r" style="left:50px;top:287px;" width="46" height="37" viewBox="0 0 46 37"><path d="M2 8 V3 H4 V1 H19 V4 H43 V8z" fill="#f8f8f8" stroke="#d0d0d0" stroke-width="0.6"/><rect x="0.5" y="7.5" width="45" height="29" rx="1" fill="url(#fg)" stroke="#b8975a" stroke-width="1"/><path d="M1.5 9 H44.5" stroke="#fbf3e2" stroke-width="1"/><path d="M23 11.5 L31 19 L29 19 L29 24.5 L25 24.5 L25 20.5 L21 20.5 L21 24.5 L17 24.5 L17 19 L15 19z" fill="#b0905a"/><rect x="26.5" y="12" width="1.5" height="2.5" fill="#b0905a"/></svg><div class="t" style="left:51.80px;top:330px;font-size:13.5px;letter-spacing:0.595px;line-height:24px;color:#f4f4f4;text-shadow:0 1px 2px #000,0 0 3px #000;">Home</div><div class="r" style="left:203px;top:107px;width:1177px;height:516px;background:#cfcfcf;border:1px solid #5a5a5a;border-radius:5px 5px 0 0;"></div><svg class="r" style="left:208px;top:112px;" width="22" height="19" viewBox="0 0 22 19"><path d="M1 5.2 V1.8 Q1 1 1.8 1 H9.2 L11.0 2.5 H20.5 V5.2z" fill="#fafafa" stroke="#a0a4aa" stroke-width="0.8"/><rect x="0.5" y="4.2" width="21" height="14.3" rx="1" fill="url(#fg)" stroke="#c09a5c" stroke-width="1"/><path d="M1.5 5.7 H20.5" stroke="#fbf3e2" stroke-width="1"/></svg><div class="t" style="left:712.31px;top:111px;font-size:12.5px;letter-spacing:0.838px;line-height:24px;color:#808080;font-weight:bold;">xfce - Thunar</div><svg class="r" style="left:1290px;top:116px;" width="84" height="14" viewBox="0 0 84 14"><g stroke="#808080" stroke-width="2" fill="none"><path d="M3 9 L7 5 L11 9"/><path d="M25 10h9"/><rect x="49" y="3" width="7" height="7"/><path d="M72 2l8 8M80 2l-8 8"/></g></svg><div class="t" style="left:217.00px;top:137px;font-size:13.5px;letter-spacing:0.000px;line-height:24px;color:#8b8b8b;">File</div><div class="t" style="left:257.00px;top:137px;font-size:13.5px;letter-spacing:0.478px;line-height:24px;color:#8b8b8b;">Edit</div><div class="t" style="left:300.00px;top:137px;font-size:13.5px;letter-spacing:0.458px;line-height:24px;color:#8b8b8b;">View</div><div class="t" style="left:350.00px;top:137px;font-size:13.5px;letter-spacing:0.009px;line-height:24px;color:#8b8b8b;">Go</div><div class="t" style="left:386.00px;top:137px;font-size:13.5px;letter-spacing:0.568px;line-height:24px;color:#8b8b8b;">Bookmarks</div><div class="t" style="left:478.00px;top:137px;font-size:13.5px;letter-spacing:0.469px;line-height:24px;color:#8b8b8b;">Help</div><div class="r" style="left:204px;top:162px;width:1172px;height:37px;background:linear-gradient(#cfcfcf,#cbcbcb 50%,#b9b9b9);"></div><div class="r" style="left:204px;top:199px;width:1172px;height:1px;background:#a0a0a0;"></div><svg class="r" style="left:218px;top:172px;" width="240" height="20" viewBox="0 0 240 20"><g fill="#808080"><path d="M0 8 L8 0 L8 5 L18 5 L18 11 L8 11 L8 16z"/><path d="M49 8 L41 0 L41 5 L31 5 L31 11 L41 11 L41 16z"/><path d="M70 0 L78 8 L73 8 L73 15 L67 15 L67 8 L62 8z"/><path d="M102 0 L111 8 L108.5 8 L108.5 15 L104 15 L104 10.5 L100 10.5 L100 15 L95.5 15 L95.5 8 L93 8z"/><rect x="106" y="1" width="2" height="3"/><path d="M123 6 L131 0 L131 4 Q142 4 142 12 Q142 17 137 19 Q139 10 131 10 L131 14z"/><path d="M173 6 L165 0 L165 4 Q154 4 154 12 Q154 17 159 19 Q157 10 165 10 L165 14z"/><rect x="187" y="0" width="16" height="16" rx="2"/><rect x="218" y="0" width="16" height="16" rx="2"/></g><g stroke="#d8d8d8" stroke-width="2.4"><path d="M191 8h8M222 8h8M226 4v8"/></g></svg><div class="r" style="left:460px;top:165px;width:849px;height:30px;background:#fafafa;border:1px solid #a9a9a9;border-radius:3px;"></div><svg class="r" style="left:465px;top:173px;" width="16" height="14" viewBox="0 0 16 14"><path d="M1 4.1 V1.8 Q1 1 1.8 1 H6.7 L8.0 1.8 H14.5 V4.1z" fill="#fafafa" stroke="#a0a4aa" stroke-width="0.8"/><rect x="0.5" y="3.1" width="15" height="10.4" rx="1" fill="url(#fg)" stroke="#c09a5c" stroke-width="1"/><path d="M1.5 4.6 H14.5" stroke="#fbf3e2" stroke-width="1"/></svg><div class="t" style="left:487.00px;top:168px;font-size:13.5px;letter-spacing:0.564px;line-height:24px;color:#7e7e7e;">/usr/local/share/backgrounds/xfce/</div><svg class="r" style="left:1316px;top:170px;" width="22" height="22" viewBox="0 0 22 22"><circle cx="8" cy="8" r="6" fill="none" stroke="#8a8a8a" stroke-width="2.2"/><path d="M12.5 12.5 L19 19" stroke="#8a8a8a" stroke-width="3" stroke-linecap="round"/></svg><svg class="r" style="left:1347px;top:170px;" width="20" height="20" viewBox="0 0 20 20"><rect x="0.5" y="0.5" width="19" height="19" rx="1.5" fill="#2b2b2b" stroke="#111"/><rect x="2" y="2" width="16" height="16" fill="none" stroke="#666" stroke-width="1"/><text x="2.6" y="10" font-size="9" font-weight="bold" fill="#f2f2f2" font-family="Liberation Sans">$</text><rect x="8" y="11.2" width="5.5" height="1.8" fill="#f2f2f2"/></svg><div class="r" style="left:204px;top:200px;width:377px;height:422px;background:#cecece;"></div><div class="r" style="left:208px;top:200px;width:373px;height:217px;background:#e3e3e3;"></div><div class="t" style="left:216.50px;top:202px;font-size:13.5px;letter-spacing:0.705px;line-height:24px;color:#8a8a8a;font-weight:bold;">Places</div><div class="r" style="left:208px;top:383px;width:373px;height:26px;background:#cdcdcd;border-top:1px solid #bdbdbd;border-bottom:1px solid #bdbdbd;"></div><div class="t" style="left:252.50px;top:228px;font-size:13.5px;letter-spacing:0.669px;line-height:24px;color:#8b8b8b;">Computer</div><div class="t" style="left:252.50px;top:254px;font-size:13.5px;letter-spacing:0.600px;line-height:24px;color:#8b8b8b;">johndoe</div><div class="t" style="left:252.50px;top:280px;font-size:13.5px;letter-spacing:0.584px;line-height:24px;color:#8b8b8b;">Desktop</div><div class="t" style="left:252.50px;top:306px;font-size:13.5px;letter-spacing:0.359px;line-height:24px;color:#8b8b8b;">Recent</div><div class="t" style="left:252.50px;top:332px;font-size:13.5px;letter-spacing:0.069px;line-height:24px;color:#8b8b8b;">Trash</div><div class="t" style="left:252.50px;top:358px;font-size:13.5px;letter-spacing:0.515px;line-height:24px;color:#8b8b8b;">4.18 release</div><div class="t" style="left:252.50px;top:384px;font-size:13.5px;letter-spacing:0.578px;line-height:24px;color:#3a3a3a;">backgrounds</div><svg class="r" style="left:223px;top:228px;" width="26" height="25" viewBox="0 0 26 25"><defs><linearGradient id="scr" x1="0" y1="0" x2="1" y2="1"><stop offset="0" stop-color="#5a5560"/><stop offset="0.45" stop-color="#2c2830"/><stop offset="1" stop-color="#151317"/></linearGradient></defs><rect x="1" y="1" width="24" height="17" rx="1" fill="#111"/><rect x="2.2" y="2.2" width="21.6" height="14.6" fill="url(#scr)"/><path d="M10 18 h6 v2.5 h-6z" fill="#e8e8e8"/><rect x="7" y="20.5" width="12" height="3" rx="1.2" fill="#f4f4f4" stroke="#999" stroke-width="0.6"/></svg><svg class="r" style="left:224px;top:255px;" width="24" height="23" viewBox="0 0 24 23"><path d="M4 10 V22 H19 V10z" fill="#f5ece0" stroke="#b09a80" stroke-width="0.8"/><rect x="16" y="3" width="3" height="5" fill="#e8dcc8"/><path d="M1.5 11.5 L12 2 L22.5 11.5" fill="none" stroke="#5a1414" stroke-width="2.6"/><path d="M9.5 22 V16.5 Q9.5 14 12 14 Q14.5 14 14.5 16.5 V22z" fill="#c47028" stroke="#8a4a18" stroke-width="0.6"/></svg><svg class="r" style="left:225px;top:285px;" width="22" height="19" viewBox="0 0 22 19"><rect x="0.5" y="0.5" width="21" height="17.5" fill="url(#dtg)" stroke="#3c6f8f" stroke-width="1"/><rect x="0.5" y="0.5" width="21" height="3" fill="#4a4f55"/><path d="M2.5 18 L4.5 13.5 L17.5 13.5 L19.5 18z" fill="#37617e"/><g fill="#9fdcf7"><rect x="5.5" y="15" width="2" height="2"/><rect x="8.5" y="15" width="2" height="2"/><rect x="11.5" y="15" width="2" height="2"/><rect x="14.5" y="15" width="2" height="2"/></g></svg><svg class="r" style="left:224px;top:307px;" width="25" height="24" viewBox="0 0 25 24"><circle cx="13" cy="13.5" r="9.8" fill="#f0f0f0" stroke="#8f8f8f" stroke-width="1.1"/><path d="M13 13.5 L18 8 M13 13.5 L15 18" stroke="#444" stroke-width="0.9"/><path d="M13 13.5 L11.5 18" stroke="#d33" stroke-width="0.9"/><path d="M20 5 Q13 0.5 6 6 L8.5 8 L1 10.5 L3 3 L5 5 Q13 -1 21 4z" fill="#f2c230" stroke="#b8901a" stroke-width="0.6"/></svg><svg class="r" style="left:226px;top:333px;" width="19" height="23" viewBox="0 0 19 23"><defs><linearGradient id="tcan" x1="0" y1="0" x2="1" y2="0"><stop offset="0" stop-color="#8a8a8a"/><stop offset="0.35" stop-color="#e8e8e8"/><stop offset="1" stop-color="#7a7a7a"/></linearGradient></defs><path d="M2 6 L3.5 21 Q9.5 23 15.5 21 L17 6z" fill="url(#tcan)" stroke="#666" stroke-width="0.7"/><ellipse cx="9.5" cy="5.5" rx="8" ry="2.5" fill="#d8d8d8" stroke="#666" stroke-width="0.7"/><path d="M6.5 4 v-2.5 h6 v2.5" fill="none" stroke="#777" stroke-width="1"/><g stroke="#999" stroke-width="0.6"><path d="M6 9 L6.5 20M9.5 9 V21M13 9 L12.5 20"/></g></svg><svg class="r" style="left:225px;top:361px;" width="22" height="19" viewBox="0 0 22 19"><path d="M1 5.2 V1.8 Q1 1 1.8 1 H9.2 L11.0 2.5 H20.5 V5.2z" fill="#fafafa" stroke="#a0a4aa" stroke-width="0.8"/><rect x="0.5" y="4.2" width="21" height="14.3" rx="1" fill="url(#fg)" stroke="#c09a5c" stroke-width="1"/><path d="M1.5 5.7 H20.5" stroke="#fbf3e2" stroke-width="1"/></svg><svg class="r" style="left:225px;top:387px;" width="22" height="19" viewBox="0 0 22 19"><path d="M1 5.2 V1.8 Q1 1 1.8 1 H9.2 L11.0 2.5 H20.5 V5.2z" fill="#fafafa" stroke="#a0a4aa" stroke-width="0.8"/><rect x="0.5" y="4.2" width="21" height="14.3" rx="1" fill="url(#fg)" stroke="#c09a5c" stroke-width="1"/><path d="M1.5 5.7 H20.5" stroke="#fbf3e2" stroke-width="1"/></svg><div class="r" style="left:208px;top:415px;width:373px;height:1px;background:repeating-linear-gradient(90deg,#b9b9b9 0 5px,transparent 5px 10px);"></div><div class="r" style="left:232px;top:426px;width:325px;height:200px;background:#f0e2dc;"></div><svg class="r" style="left:233px;top:427px;" width="323" height="196" viewBox="0 0 323 196"><defs><linearGradient id="flbg" x1="0" y1="0" x2="1" y2="1"><stop offset="0" stop-color="#0075a3"/><stop offset="0.6" stop-color="#0083b5"/><stop offset="1" stop-color="#0088bb"/></linearGradient><linearGradient id="pet" x1="0" y1="0" x2="0" y2="1"><stop offset="0" stop-color="#12b4e8" stop-opacity="0.42"/><stop offset="1" stop-color="#0a9cd2" stop-opacity="0.12"/></linearGradient></defs><rect x="0" y="0" width="323" height="196" fill="url(#flbg)"/><path d="M0 0 C250.2 -156.8 197.5 -470.3 0 -627.1 C-197.5 -470.3 -250.2 -156.8 0 0z" transform="translate(219 90) rotate(3065.2) rotate(32)" fill="url(#pet)" stroke="#0a6f9a" stroke-opacity="0.18" stroke-width="0.8"/><path d="M0 0 C231.5 -145.0 182.7 -435.1 0 -580.1 C-182.7 -435.1 -231.5 -145.0 0 0z" transform="translate(219 90) rotate(2927.7) rotate(32)" fill="url(#pet)" stroke="#0a6f9a" stroke-opacity="0.18" stroke-width="0.8"/><path d="M0 0 C213.3 -133.7 168.4 -401.0 0 -534.7 C-168.4 -401.0 -213.3 -133.7 0 0z" transform="translate(219 90) rotate(2790.2) rotate(32)" fill="url(#pet)" stroke="#0a6f9a" stroke-opacity="0.18" stroke-width="0.8"/><path d="M0 0 C195.9 -122.7 154.6 -368.2 0 -490.9 C-154.6 -368.2 -195.9 -122.7 0 0z" transform="translate(219 90) rotate(2652.7) rotate(32)" fill="url(#pet)" stroke="#0a6f9a" stroke-opacity="0.18" stroke-width="0.8"/><path d="M0 0 C179.0 -112.2 141.3 -336.5 0 -448.7 C-141.3 -336.5 -179.0 -112.2 0 0z" transform="translate(219 90) rotate(2515.1) rotate(32)" fill="url(#pet)" stroke="#0a6f9a" stroke-opacity="0.18" stroke-width="0.8"/><path d="M0 0 C162.9 -102.0 128.6 -306.1 0 -408.2 C-128.6 -306.1 -162.9 -102.0 0 0z" transform="translate(219 90) rotate(2377.6) rotate(32)" fill="url(#pet)" stroke="#0a6f9a" stroke-opacity="0.18" stroke-width="0.8"/><path d="M0 0 C147.4 -92.3 116.3 -277.0 0 -369.4 C-116.3 -277.0 -147.4 -92.3 0 0z" transform="translate(219 90) rotate(2240.1) rotate(32)" fill="url(#pet)" stroke="#0a6f9a" stroke-opacity="0.18" stroke-width="0.8"/><path d="M0 0 C132.6 -83.1 104.7 -249.2 0 -332.2 C-104.7 -249.2 -132.6 -83.1 0 0z" transform="translate(219 90) rotate(2102.6) rotate(32)" fill="url(#pet)" stroke="#0a6f9a" stroke-opacity="0.18" stroke-width="0.8"/><path d="M0 0 C118.4 -74.2 93.5 -222.6 0 -296.8 C-93.5 -222.6 -118.4 -74.2 0 0z" transform="translate(219 90) rotate(1965.1) rotate(32)" fill="url(#pet)" stroke="#0a6f9a" stroke-opacity="0.18" stroke-width="0.8"/><path d="M0 0 C105.0 -65.8 82.9 -197.4 0 -263.2 C-82.9 -197.4 -105.0 -65.8 0 0z" transform="translate(219 90) rotate(1827.6) rotate(32)" fill="url(#pet)" stroke="#0a6f9a" stroke-opacity="0.18" stroke-width="0.8"/><path d="M0 0 C92.3 -57.9 72.9 -173.6 0 -231.4 C-72.9 -173.6 -92.3 -57.9 0 0z" transform="translate(219 90) rotate(1690.1) rotate(32)" fill="url(#pet)" stroke="#0a6f9a" stroke-opacity="0.18" stroke-width="0.8"/><path d="M0 0 C80.4 -50.4 63.5 -151.1 0 -201.5 C-63.5 -151.1 -80.4 -50.4 0 0z" transform="translate(219 90) rotate(1552.6) rotate(32)" fill="url(#pet)" stroke="#0a6f9a" stroke-opacity="0.18" stroke-width="0.8"/><path d="M0 0 C69.2 -43.4 54.6 -130.1 0 -173.4 C-54.6 -130.1 -69.2 -43.4 0 0z" transform="translate(219 90) rotate(1415.1) rotate(32)" fill="url(#pet)" stroke="#0a6f9a" stroke-opacity="0.18" stroke-width="0.8"/><path d="M0 0 C58.8 -36.8 46.4 -110.5 0 -147.3 C-46.4 -110.5 -58.8 -36.8 0 0z" transform="translate(219 90) rotate(1277.6) rotate(32)" fill="url(#pet)" stroke="#0a6f9a" stroke-opacity="0.18" stroke-width="0.8"/><path d="M0 0 C49.2 -30.8 38.8 -92.4 0 -123.3 C-38.8 -92.4 -49.2 -30.8 0 0z" transform="translate(219 90) rotate(1140.1) rotate(32)" fill="url(#pet)" stroke="#0a6f9a" stroke-opacity="0.18" stroke-width="0.8"/><path d="M0 0 C40.4 -25.3 31.9 -75.9 0 -101.2 C-31.9 -75.9 -40.4 -25.3 0 0z" transform="translate(219 90) rotate(1002.6) rotate(32)" fill="url(#pet)" stroke="#0a6f9a" stroke-opacity="0.18" stroke-width="0.8"/><path d="M0 0 C32.5 -20.3 25.6 -61.0 0 -81.4 C-25.6 -61.0 -32.5 -20.3 0 0z" transform="translate(219 90) rotate(865.0) rotate(32)" fill="url(#pet)" stroke="#0a6f9a" stroke-opacity="0.18" stroke-width="0.8"/><path d="M0 0 C25.5 -15.9 20.1 -47.8 0 -63.8 C-20.1 -47.8 -25.5 -15.9 0 0z" transform="translate(219 90) rotate(727.5) rotate(32)" fill="url(#pet)" stroke="#0a6f9a" stroke-opacity="0.18" stroke-width="0.8"/><path d="M0 0 C19.4 -12.1 15.3 -36.4 0 -48.6 C-15.3 -36.4 -19.4 -12.1 0 0z" transform="translate(219 90) rotate(590.0) rotate(32)" fill="url(#pet)" stroke="#0a6f9a" stroke-opacity="0.18" stroke-width="0.8"/><path d="M0 0 C14.3 -9.0 11.3 -26.9 0 -35.9 C-11.3 -26.9 -14.3 -9.0 0 0z" transform="translate(219 90) rotate(452.5) rotate(32)" fill="url(#pet)" stroke="#0a6f9a" stroke-opacity="0.18" stroke-width="0.8"/><path d="M0 0 C10.3 -6.5 8.2 -19.4 0 -25.9 C-8.2 -19.4 -10.3 -6.5 0 0z" transform="translate(219 90) rotate(315.0) rotate(32)" fill="url(#pet)" stroke="#0a6f9a" stroke-opacity="0.18" stroke-width="0.8"/><path d="M0 0 C7.6 -4.8 6.0 -14.2 0 -19.0 C-6.0 -14.2 -7.6 -4.8 0 0z" transform="translate(219 90) rotate(177.5) rotate(32)" fill="url(#pet)" stroke="#0a6f9a" stroke-opacity="0.18" stroke-width="0.8"/><g transform="translate(219 90)" fill="#fff"><ellipse cx="0" cy="1" rx="5" ry="3.2"/><path d="M3 -1 L8 -2 L7 2 L3 3z"/><circle cx="5.5" cy="-2.5" r="1.3"/><path d="M-4 0 L-9 -4" stroke="#fff" stroke-width="0.7"/><rect x="-4" y="3" width="1.2" height="1.5"/><rect x="2" y="3" width="1.2" height="1.5"/></g></svg><div class="r" style="left:581px;top:200px;width:1px;height:422px;background:#8d8d8d;"></div><div class="r" style="left:582px;top:200px;width:416px;height:393px;background:#fafafa;"></div><div class="r" style="left:582px;top:224px;width:416px;height:1px;background:#cbcbcb;"></div><div class="r" style="left:875px;top:200px;width:1px;height:24px;background:#d6d6d6;"></div><div class="r" style="left:949px;top:200px;width:1px;height:24px;background:#d6d6d6;"></div><div class="t" style="left:589.00px;top:200px;font-size:13.5px;letter-spacing:1.312px;line-height:24px;color:#7f7f7f;font-weight:bold;">Name</div><div class="t" style="left:882.50px;top:200px;font-size:13.5px;letter-spacing:0.797px;line-height:24px;color:#7f7f7f;font-weight:bold;">Size</div><div class="t" style="left:956.00px;top:200px;font-size:13.5px;letter-spacing:0.854px;line-height:24px;color:#7f7f7f;font-weight:bold;">Type</div><svg class="r" style="left:856px;top:210px;" width="11" height="7" viewBox="0 0 11 7"><path d="M0 0 H11 L5.5 6z" fill="#808080"/></svg><div class="r" style="left:582px;top:253px;width:294px;height:28px;background:#3b8ce4;"></div><div class="r" style="left:876px;top:253px;width:120px;height:28px;background:#cfcfcf;"></div><svg class="r" style="left:585px;top:231px;" width="24" height="15" viewBox="0 0 24 15"><defs><radialGradient id="th1" cx="0.5" cy="0.45" r="0.7"><stop offset="0" stop-color="#67bfe0"/><stop offset="0.6" stop-color="#1c7fb2"/><stop offset="1" stop-color="#0b4e82"/></radialGradient></defs><rect width="24" height="15" fill="url(#th1)"/><rect x="11" y="7" width="2" height="1" fill="#123"/></svg><div class="t" style="left:612.50px;top:227px;font-size:13.5px;letter-spacing:0.609px;line-height:24px;color:#8b8b8b;">xfce-blue.jpg</div><div class="t" style="left:878.96px;top:227px;font-size:13.5px;letter-spacing:0.424px;line-height:24px;color:#8b8b8b;">192.4  KiB</div><div class="r" style="left:954px;top:225px;width:43px;height:28px;overflow:hidden"><div class="t" style="left:0.50px;top:2px;font-size:13.5px;letter-spacing:-0.119px;line-height:24px;color:#8b8b8b;">JPEG image</div></div><svg class="r" style="left:585px;top:259px;" width="24" height="15" viewBox="0 0 24 15"><rect width="24" height="15" fill="#0c98c8"/><path d="M12 7 Q4 0 0 4 V0 H10z M12 7 Q20 14 24 10 V15 H14z M12 7 Q16 0 24 2 V0z M12 7 Q6 15 0 12 V15z" fill="#0a7fae" opacity="0.8"/></svg><div class="t" style="left:612.50px;top:255px;font-size:13.5px;letter-spacing:0.574px;line-height:24px;color:#7c8798;">xfce-flower.svg</div><div class="t" style="left:887.24px;top:255px;font-size:13.5px;letter-spacing:0.387px;line-height:24px;color:#8b8b8b;">16.6  KiB</div><div class="r" style="left:954px;top:253px;width:43px;height:28px;overflow:hidden"><div class="t" style="left:0.50px;top:2px;font-size:13.5px;letter-spacing:0.313px;line-height:24px;color:#8b8b8b;">SVG image</div></div><svg class="r" style="left:585px;top:287px;" width="24" height="15" viewBox="0 0 24 15"><rect width="24" height="15" fill="#2b2932"/><circle cx="12" cy="7.5" r="3" fill="#b8443a"/><path d="M9 5 L15 10 M15 5 L9 10" stroke="#e0605a" stroke-width="1"/></svg><div class="t" style="left:612.50px;top:283px;font-size:13.5px;letter-spacing:0.531px;line-height:24px;color:#8b8b8b;">xfce-leaves.svg</div><div class="t" style="left:878.96px;top:283px;font-size:13.5px;letter-spacing:0.424px;line-height:24px;color:#8b8b8b;">157.0  KiB</div><div class="r" style="left:954px;top:281px;width:43px;height:28px;overflow:hidden"><div class="t" style="left:0.50px;top:2px;font-size:13.5px;letter-spacing:0.313px;line-height:24px;color:#8b8b8b;">SVG image</div></div><svg class="r" style="left:585px;top:315px;" width="24" height="15" viewBox="0 0 24 15"><rect width="24" height="15" fill="#1d2432"/><path d="M10.5 8 Q12 6 13.5 7 Q12 9 10.5 8z" fill="#1fa2e0"/></svg><div class="t" style="left:612.50px;top:311px;font-size:13.5px;letter-spacing:0.494px;line-height:24px;color:#8b8b8b;">xfce-shapes.svg</div><div class="t" style="left:878.96px;top:311px;font-size:13.5px;letter-spacing:0.424px;line-height:24px;color:#8b8b8b;">314.6  KiB</div><div class="r" style="left:954px;top:309px;width:43px;height:28px;overflow:hidden"><div class="t" style="left:0.50px;top:2px;font-size:13.5px;letter-spacing:0.313px;line-height:24px;color:#8b8b8b;">SVG image</div></div><svg class="r" style="left:585px;top:343px;" width="24" height="15" viewBox="0 0 24 15"><defs><linearGradient id="th5" x1="0" y1="0" x2="0" y2="1"><stop offset="0" stop-color="#48a8ff"/><stop offset="0.35" stop-color="#2a8af8"/><stop offset="1" stop-color="#0a52d8"/></linearGradient></defs><rect width="24" height="15" fill="url(#th5)"/><path d="M0 4 Q12 7 24 5 V6.5 Q12 8.5 0 5.5z" fill="#9fd4ff" opacity="0.7"/><rect x="11" y="11" width="2" height="1" fill="#fff"/></svg><div class="t" style="left:612.50px;top:339px;font-size:13.5px;letter-spacing:0.596px;line-height:24px;color:#8b8b8b;">xfce-stripes.png</div><div class="t" style="left:887.24px;top:339px;font-size:13.5px;letter-spacing:0.387px;line-height:24px;color:#8b8b8b;">47.8  KiB</div><div class="r" style="left:954px;top:337px;width:43px;height:28px;overflow:hidden"><div class="t" style="left:0.50px;top:2px;font-size:13.5px;letter-spacing:0.276px;line-height:24px;color:#8b8b8b;">PNG image</div></div><svg class="r" style="left:585px;top:371px;" width="24" height="15" viewBox="0 0 24 15"><defs><radialGradient id="th6" cx="0.5" cy="0.4" r="0.7"><stop offset="0" stop-color="#a8e4ec"/><stop offset="0.5" stop-color="#35b6c8"/><stop offset="1" stop-color="#0f7aa2"/></radialGradient></defs><rect width="24" height="15" fill="url(#th6)"/><rect x="11" y="9" width="2" height="1" fill="#dff"/></svg><div class="t" style="left:612.50px;top:367px;font-size:13.5px;letter-spacing:0.634px;line-height:24px;color:#8b8b8b;">xfce-teal.jpg</div><div class="t" style="left:878.96px;top:367px;font-size:13.5px;letter-spacing:0.424px;line-height:24px;color:#8b8b8b;">304.8  KiB</div><div class="r" style="left:954px;top:365px;width:43px;height:28px;overflow:hidden"><div class="t" style="left:0.50px;top:2px;font-size:13.5px;letter-spacing:-0.119px;line-height:24px;color:#8b8b8b;">JPEG image</div></div><svg class="r" style="left:585px;top:399px;" width="24" height="15" viewBox="0 0 24 15"><defs><linearGradient id="th7" x1="0" y1="0" x2="1" y2="0"><stop offset="0" stop-color="#0a5c94"/><stop offset="0.45" stop-color="#0a9ccc"/><stop offset="1" stop-color="#0a6aa0"/></linearGradient></defs><rect width="24" height="15" fill="url(#th7)"/><rect x="11" y="11" width="2" height="1" fill="#fff"/></svg><div class="t" style="left:612.50px;top:395px;font-size:13.5px;letter-spacing:0.602px;line-height:24px;color:#8b8b8b;">xfce-verticals.png</div><div class="t" style="left:878.96px;top:395px;font-size:13.5px;letter-spacing:0.424px;line-height:24px;color:#8b8b8b;">390.4  KiB</div><div class="r" style="left:954px;top:393px;width:43px;height:28px;overflow:hidden"><div class="t" style="left:0.50px;top:2px;font-size:13.5px;letter-spacing:0.276px;line-height:24px;color:#8b8b8b;">PNG image</div></div><div class="r" style="left:996px;top:225px;width:1px;height:368px;background:repeating-linear-gradient(#a8a8a8 0 6px,transparent 6px 10px);"></div><div class="r" style="left:998px;top:200px;width:1px;height:393px;background:#8d8d8d;"></div><div class="r" style="left:999px;top:200px;width:377px;height:393px;background:#fafafa;"></div><div class="r" style="left:999px;top:224px;width:377px;height:1px;background:#cbcbcb;"></div><div class="r" style="left:1184px;top:200px;width:1px;height:24px;background:#d6d6d6;"></div><div class="r" style="left:1258px;top:200px;width:1px;height:24px;background:#d6d6d6;"></div><div class="t" style="left:1005.50px;top:200px;font-size:13.5px;letter-spacing:1.312px;line-height:24px;color:#7f7f7f;font-weight:bold;">Name</div><div class="t" style="left:1191.50px;top:200px;font-size:13.5px;letter-spacing:0.797px;line-height:24px;color:#7f7f7f;font-weight:bold;">Size</div><div class="t" style="left:1265.00px;top:200px;font-size:13.5px;letter-spacing:0.854px;line-height:24px;color:#7f7f7f;font-weight:bold;">Type</div><div class="r" style="left:999px;top:393px;width:186px;height:28px;background:#3b8ce4;"></div><div class="r" style="left:1185px;top:393px;width:190px;height:28px;background:#cfcfcf;"></div><div class="r" style="left:999px;top:449px;width:377px;height:28px;background:#e01b24;"></div><div class="t" style="left:1029.50px;top:227px;font-size:13.5px;letter-spacing:0.584px;line-height:24px;color:#8b8b8b;">Desktop</div><div class="t" style="left:1204.51px;top:227px;font-size:13.5px;letter-spacing:0.340px;line-height:24px;color:#8b8b8b;">4.0  KiB</div><div class="t" style="left:1263.00px;top:227px;font-size:13.5px;letter-spacing:0.661px;line-height:24px;color:#8b8b8b;">folder</div><div class="t" style="left:1029.50px;top:255px;font-size:13.5px;letter-spacing:0.649px;line-height:24px;color:#8b8b8b;">Documents</div><div class="t" style="left:1204.51px;top:255px;font-size:13.5px;letter-spacing:0.340px;line-height:24px;color:#8b8b8b;">4.0  KiB</div><div class="t" style="left:1263.00px;top:255px;font-size:13.5px;letter-spacing:0.661px;line-height:24px;color:#8b8b8b;">folder</div><div class="t" style="left:1029.50px;top:283px;font-size:13.5px;letter-spacing:0.512px;line-height:24px;color:#8b8b8b;">Downloads</div><div class="t" style="left:1204.51px;top:283px;font-size:13.5px;letter-spacing:0.340px;line-height:24px;color:#8b8b8b;">4.0  KiB</div><div class="t" style="left:1263.00px;top:283px;font-size:13.5px;letter-spacing:0.661px;line-height:24px;color:#8b8b8b;">folder</div><div class="t" style="left:1029.50px;top:311px;font-size:13.5px;letter-spacing:0.347px;line-height:24px;color:#8b8b8b;">Music</div><div class="t" style="left:1204.51px;top:311px;font-size:13.5px;letter-spacing:0.340px;line-height:24px;color:#8b8b8b;">4.0  KiB</div><div class="t" style="left:1263.00px;top:311px;font-size:13.5px;letter-spacing:0.661px;line-height:24px;color:#8b8b8b;">folder</div><div class="t" style="left:1029.50px;top:339px;font-size:13.5px;letter-spacing:0.339px;line-height:24px;color:#8b8b8b;">Pictures</div><div class="t" style="left:1204.51px;top:339px;font-size:13.5px;letter-spacing:0.340px;line-height:24px;color:#8b8b8b;">4.0  KiB</div><div class="t" style="left:1263.00px;top:339px;font-size:13.5px;letter-spacing:0.661px;line-height:24px;color:#8b8b8b;">folder</div><div class="t" style="left:1029.50px;top:367px;font-size:13.5px;letter-spacing:0.284px;line-height:24px;color:#8b8b8b;">Public</div><div class="t" style="left:1204.51px;top:367px;font-size:13.5px;letter-spacing:0.340px;line-height:24px;color:#8b8b8b;">4.0  KiB</div><div class="t" style="left:1263.00px;top:367px;font-size:13.5px;letter-spacing:0.661px;line-height:24px;color:#8b8b8b;">folder</div><div class="t" style="left:1029.50px;top:395px;font-size:13.5px;letter-spacing:0.507px;line-height:24px;color:#7c8798;">Templates</div><div class="t" style="left:1204.51px;top:395px;font-size:13.5px;letter-spacing:0.340px;line-height:24px;color:#8b8b8b;">4.0  KiB</div><div class="t" style="left:1263.00px;top:395px;font-size:13.5px;letter-spacing:0.661px;line-height:24px;color:#8b8b8b;">folder</div><div class="t" style="left:1029.50px;top:423px;font-size:13.5px;letter-spacing:0.360px;line-height:24px;color:#8b8b8b;">Videos</div><div class="t" style="left:1204.51px;top:423px;font-size:13.5px;letter-spacing:0.340px;line-height:24px;color:#8b8b8b;">4.0  KiB</div><div class="t" style="left:1263.00px;top:423px;font-size:13.5px;letter-spacing:0.661px;line-height:24px;color:#8b8b8b;">folder</div><svg class="r" style="left:1003px;top:231px;" width="22" height="18" viewBox="0 0 22 18"><rect x="0.5" y="0.5" width="21" height="16.5" fill="url(#dtg)" stroke="#3c6f8f"/><rect x="0.5" y="0.5" width="21" height="2.5" fill="#4a4f55"/><path d="M3 17 L5 12.5 L17 12.5 L19 17z" fill="#37617e"/><g fill="#9fdcf7"><rect x="5.5" y="14" width="2" height="2"/><rect x="9" y="14" width="2" height="2"/><rect x="12.5" y="14" width="2" height="2"/></g></svg><svg class="r" style="left:1004px;top:256px;" width="19" height="22" viewBox="0 0 19 22"><path d="M0.5 0.5 H12 L18.5 7 V21.5 H0.5z" fill="#f2f2f2" stroke="#9a9a9a"/><path d="M12 0.5 V7 H18.5" fill="#ddd" stroke="#9a9a9a"/></svg><svg class="r" style="left:1003px;top:284px;" width="22" height="22" viewBox="0 0 22 22"><circle cx="11" cy="11" r="10.5" fill="#5cb531" stroke="#3d8a1d"/><path d="M11 4 V14 M6.5 10 L11 15 L15.5 10" stroke="#fff" stroke-width="2.5" fill="none"/></svg><svg class="r" style="left:1004px;top:312px;" width="20" height="22" viewBox="0 0 20 22"><path d="M6 17 V4 L18 1 V14" stroke="#3d9be0" stroke-width="2" fill="none"/><ellipse cx="4" cy="18" rx="3.5" ry="2.8" fill="#3d9be0"/><ellipse cx="16" cy="15" rx="3.5" ry="2.8" fill="#3d9be0"/></svg><svg class="r" style="left:1003px;top:340px;" width="22" height="22" viewBox="0 0 22 22"><rect x="3" y="2" width="16" height="16" transform="rotate(-20 11 10)" fill="#eee" stroke="#666"/><rect x="5" y="5" width="16" height="16" fill="#f4f4f4" stroke="#888"/><rect x="7" y="7" width="12" height="11" fill="#2f2f25"/></svg><svg class="r" style="left:1003px;top:368px;" width="22" height="22" viewBox="0 0 22 22"><path d="M17 4 L5 11 L17 18" stroke="#3d8ddc" stroke-width="2.2" fill="none"/><circle cx="17" cy="4" r="3.5" fill="#3d8ddc"/><circle cx="5" cy="11" r="4" fill="#3d8ddc"/><circle cx="17" cy="18" r="3.5" fill="#3d8ddc"/></svg><svg class="r" style="left:1003px;top:396px;" width="22" height="22" viewBox="0 0 22 22"><path d="M20 1 L20 21 L1 21z" fill="#9bb0c8" stroke="#5a6e86"/><path d="M16 10 L16 18 L8 18z" fill="#3b8ce4"/></svg><svg class="r" style="left:1003px;top:424px;" width="22" height="22" viewBox="0 0 22 22"><rect x="0.5" y="0.5" width="21" height="21" fill="#222"/><rect x="4" y="1.5" width="14" height="9" fill="#5eb6ea"/><rect x="4" y="11.5" width="14" height="9" fill="#4aa0dc"/><g fill="#ddd"><rect x="1" y="2" width="2" height="2"/><rect x="1" y="6" width="2" height="2"/><rect x="1" y="10" width="2" height="2"/><rect x="1" y="14" width="2" height="2"/><rect x="1" y="18" width="2" height="2"/><rect x="19" y="2" width="2" height="2"/><rect x="19" y="6" width="2" height="2"/><rect x="19" y="10" width="2" height="2"/><rect x="19" y="14" width="2" height="2"/><rect x="19" y="18" width="2" height="2"/></g></svg><svg class="r" style="left:1004px;top:452px;" width="20" height="22" viewBox="0 0 20 22"><rect x="0.5" y="0.5" width="17" height="21" fill="#f4f4f4" stroke="#8a8a8a"/><g stroke="#9a9a9a" stroke-width="1"><path d="M3 5h12M3 8h12M3 11h12M3 14h12M3 17h9"/></g></svg><div class="t" style="left:1029.50px;top:451px;font-size:13.5px;letter-spacing:0.695px;line-height:24px;color:#ffffff;">Dont forget about this !</div><div class="t" style="left:1206.28px;top:451px;font-size:13.5px;letter-spacing:0.670px;line-height:24px;color:#ffffff;">0 bytes</div><div class="r" style="left:1263px;top:449px;width:113px;height:28px;overflow:hidden"><div class="t" style="left:0.00px;top:2px;font-size:13.5px;letter-spacing:0.743px;line-height:24px;color:#ffffff;">plain text document</div></div><div class="r" style="left:1374px;top:225px;width:1px;height:368px;background:repeating-linear-gradient(#a8a8a8 0 6px,transparent 6px 10px);"></div><div class="r" style="left:1376px;top:200px;width:1px;height:422px;background:#c4c4c4;"></div><div class="r" style="left:582px;top:593px;width:794px;height:1px;background:#8d8d8d;"></div><div class="t" style="left:596.00px;top:594px;font-size:13.5px;letter-spacing:0.529px;line-height:24px;color:#808080;">&quot;xfce-flower.svg&quot;  |  16.6  KiB (16,972 bytes)  |  SVG image</div><div class="r" style="left:130px;top:589px;width:410px;height:434px;background:#cfcfcf;border:1px solid #5a5a5a;border-radius:5px 5px 0 0;"></div><svg class="r" style="left:136px;top:593px;" width="22" height="22" viewBox="0 0 22 22"><circle cx="8.5" cy="8.5" r="6.5" fill="#e8e8e8" stroke="#3a3a3a" stroke-width="1.6"/><path d="M13.5 13.5 L20 20" stroke="#3a3a3a" stroke-width="2.6" stroke-linecap="round"/></svg><div class="t" style="left:238.89px;top:593px;font-size:12.5px;letter-spacing:0.806px;line-height:24px;color:#808080;font-weight:bold;">Application Finder</div><svg class="r" style="left:449px;top:598px;" width="84" height="14" viewBox="0 0 84 14"><g stroke="#808080" stroke-width="2" fill="none"><path d="M3 9 L7 5 L11 9"/><path d="M25 10h9"/><rect x="49" y="3" width="7" height="7"/><path d="M72 2l8 8M80 2l-8 8"/></g></svg><svg class="r" style="left:145px;top:629px;" width="40" height="40" viewBox="0 0 40 40"><rect x="0" y="0" width="40" height="30" rx="2" fill="#1b1b1b"/><circle cx="20" cy="14.5" r="8" fill="none" stroke="#fff" stroke-width="1.6"/><path d="M17 10.5 L24.5 14.5 L17 18.5z" fill="#fff"/><rect x="0.5" y="30" width="39" height="9.5" rx="1" fill="#ececec" stroke="#bbb" stroke-width="0.6"/><rect x="3.5" y="33" width="10" height="4" fill="#d40000"/><rect x="13.5" y="33" width="7.5" height="4" fill="#aaa"/><rect x="21" y="33" width="15" height="4" fill="#858585"/></svg><div class="r" style="left:195px;top:637px;width:334px;height:30px;background:#fafafa;border:1px solid #a9a9a9;border-radius:3px;"></div><div class="t" style="left:206.50px;top:640px;font-size:13.5px;letter-spacing:0.745px;line-height:24px;color:#3c3c3c;">media</div><svg class="r" style="left:510px;top:645px;" width="13" height="13" viewBox="0 0 13 13"><path d="M6.5 0 L13 6.5 L9 6.5 L9 13 L4 13 L4 6.5 L0 6.5z" fill="#8a8a8a"/></svg><div class="r" style="left:141px;top:678px;width:181px;height:300px;background:#fafafa;border:1px solid #8f8f8f;"></div><div class="r" style="left:142px;top:679px;width:178px;height:26px;background:#cdcdcd;"></div><div class="t" style="left:170.50px;top:680px;font-size:13.5px;letter-spacing:0.554px;line-height:24px;color:#8b8b8b;">All Applications</div><div class="t" style="left:170.50px;top:706px;font-size:13.5px;letter-spacing:0.568px;line-height:24px;color:#3c3c3c;">Bookmarks</div><div class="t" style="left:170.50px;top:732px;font-size:13.5px;letter-spacing:0.575px;line-height:24px;color:#3c3c3c;">Commands History</div><div class="t" style="left:170.50px;top:760px;font-size:13.5px;letter-spacing:0.310px;line-height:24px;color:#3c3c3c;">Accessories</div><div class="t" style="left:170.50px;top:786px;font-size:13.5px;letter-spacing:0.725px;line-height:24px;color:#3c3c3c;">Development</div><div class="t" style="left:170.50px;top:812px;font-size:13.5px;letter-spacing:0.520px;line-height:24px;color:#3c3c3c;">Education</div><div class="t" style="left:170.50px;top:838px;font-size:13.5px;letter-spacing:0.392px;line-height:24px;color:#3c3c3c;">Games</div><div class="t" style="left:170.50px;top:864px;font-size:13.5px;letter-spacing:0.424px;line-height:24px;color:#3c3c3c;">Graphics</div><div class="t" style="left:170.50px;top:890px;font-size:13.5px;letter-spacing:0.730px;line-height:24px;color:#3c3c3c;">Internet</div><div class="t" style="left:170.50px;top:915px;font-size:13.5px;letter-spacing:0.700px;line-height:24px;color:#3c3c3c;">Multimedia</div><div class="t" style="left:170.50px;top:942px;font-size:13.5px;letter-spacing:0.489px;line-height:24px;color:#3c3c3c;">Office</div><svg class="r" style="left:144px;top:680px;" width="24" height="24" viewBox="0 0 24 24"><path d="M5 3 L8 2 L10 12 L7 12z" fill="#e8d040" stroke="#b89a20" stroke-width="0.5"/><path d="M2 6 L5 5 L8 12 L5 12z" fill="#d8c038"/><rect x="8" y="9" width="4" height="4" fill="#6a3a8a"/><path d="M13 2 L17 1 L15 12 L12 12z" fill="#e8e8e8" stroke="#999" stroke-width="0.5"/><rect x="12" y="10" width="6" height="3" fill="#5ab030"/><path d="M1.5 12 H20.5 V22.5 H1.5z" fill="#d4b37c" stroke="#9b7b45" stroke-width="0.8"/></svg><svg class="r" style="left:144px;top:706px;" width="24" height="24" viewBox="0 0 24 24"><path d="M11.5 1 L14.5 8 L22 8.5 L16.5 13.5 L18.5 21 L11.5 17 L4.5 21 L6.5 13.5 L1 8.5 L8.5 8z" fill="#f5c842" stroke="#c99a20" stroke-width="0.8"/><path d="M11.5 3 L13.5 8.5 L19 9 L11.5 11z" fill="#fbe48a" opacity="0.7"/></svg><svg class="r" style="left:143px;top:731px;" width="26" height="30" viewBox="0 0 26 30"><polygon points="11.98,5.51 11.98,6.49 10.54,7.07 10.26,7.74 10.87,9.17 10.17,9.87 8.74,9.26 8.07,9.54 7.49,10.98 6.51,10.98 5.93,9.54 5.26,9.26 3.83,9.87 3.13,9.17 3.74,7.74 3.46,7.07 2.02,6.49 2.02,5.51 3.46,4.93 3.74,4.26 3.13,2.83 3.83,2.13 5.26,2.74 5.93,2.46 6.51,1.02 7.49,1.02 8.07,2.46 8.74,2.74 10.17,2.13 10.87,2.83 10.26,4.26 10.54,4.93" fill="#dedede" stroke="#aaa" stroke-width="0.9" stroke-linejoin="round"/><circle cx="7" cy="6" r="1.80" fill="#f4f4f4" stroke="#aaa" stroke-width="0.9"/><polygon points="22.97,16.31 22.97,17.69 20.96,18.50 20.57,19.44 21.41,21.44 20.44,22.41 18.44,21.57 17.50,21.96 16.69,23.97 15.31,23.97 14.50,21.96 13.56,21.57 11.56,22.41 10.59,21.44 11.43,19.44 11.04,18.50 9.03,17.69 9.03,16.31 11.04,15.50 11.43,14.56 10.59,12.56 11.56,11.59 13.56,12.43 14.50,12.04 15.31,10.03 16.69,10.03 17.50,12.04 18.44,12.43 20.44,11.59 21.41,12.56 20.57,14.56 20.96,15.50" fill="#dedede" stroke="#aaa" stroke-width="0.9" stroke-linejoin="round"/><circle cx="16" cy="17" r="2.52" fill="#f4f4f4" stroke="#aaa" stroke-width="0.9"/><rect x="1.5" y="22" width="6" height="6" fill="#ddd" stroke="#aaa"/></svg><svg class="r" style="left:144px;top:759px;" width="24" height="24" viewBox="0 0 24 24"><path d="M5 6 L14 2 L15 4 L9 8z M11 7 L20 5 L20 7 L13 9z" fill="#f4f4f4" stroke="#999" stroke-width="0.6"/><path d="M2.5 9.5 Q1 11 2.5 12.5 L15 22 Q17 23 18 21 Q19 19.5 17.5 18.5 L5 8.5 Q3.5 8 2.5 9.5z" fill="#d42a2a" stroke="#8a1010" stroke-width="0.7"/></svg><svg class="r" style="left:144px;top:785px;" width="24" height="24" viewBox="0 0 24 24"><path d="M1 22 L4 13 L10 11 L12 16 Q8 21 1 22z" fill="#c8c8c8" stroke="#777" stroke-width="0.7"/><path d="M10 13 L18 4" stroke="#555" stroke-width="1.5"/><path d="M15 6 L20 1.5 Q22 1 22.5 3 L18 8z" fill="#5aa02c" stroke="#3a7a18" stroke-width="0.6"/></svg><svg class="r" style="left:144px;top:811px;" width="24" height="24" viewBox="0 0 24 24"><rect x="1.5" y="2" width="9" height="20" rx="2" fill="#f0f0f0" stroke="#999" stroke-width="0.7"/><rect x="3" y="9" width="6" height="12" fill="#e98a2a"/><rect x="12" y="2" width="10" height="20" rx="2" fill="#e8e8e8" stroke="#888" stroke-width="0.7"/><rect x="13.5" y="5" width="7" height="9" fill="#5aa04a"/><rect x="13.5" y="15" width="7" height="5" fill="#3a6aaa"/></svg><svg class="r" style="left:144px;top:837px;" width="24" height="24" viewBox="0 0 24 24"><rect x="1.5" y="13" width="20" height="9" rx="2" fill="#eee" stroke="#999"/><rect x="10" y="1" width="4" height="14" rx="1.5" fill="#fafafa" stroke="#999" stroke-width="0.8"/><rect x="10.5" y="1.5" width="3" height="3" fill="#d00"/><circle cx="5.5" cy="14" r="2" fill="#c00"/></svg><svg class="r" style="left:144px;top:863px;" width="24" height="24" viewBox="0 0 24 24"><ellipse cx="12" cy="12" rx="10.5" ry="9.5" fill="#f2d8a0" stroke="#c08a40"/><circle cx="8" cy="8" r="2.5" fill="#fff" opacity="0.6"/><circle cx="13" cy="17" r="2" fill="#d22"/><circle cx="8" cy="17" r="2" fill="#3a3"/><circle cx="17" cy="11" r="2" fill="#36c"/><path d="M1 22 L19 3" stroke="#555" stroke-width="1.8"/><path d="M0.5 23 L4 19.5" stroke="#111" stroke-width="3"/></svg><svg class="r" style="left:144px;top:889px;" width="24" height="24" viewBox="0 0 24 24"><circle cx="12" cy="12" r="10.5" fill="url(#globe)" stroke="#2a5ea8" stroke-width="0.6"/><path d="M4 8 Q8 4 11 5 Q12 8 9 8.5 Q8 11 6 10 Q6 13 8 14 Q5 15 4 12z M13 3.5 Q19 4 21 9 Q18 8 17 10 Q14 9 15 7 Q13 6 13 3.5z M9 13 Q12 12 13 15 Q12 18 10.5 21 Q9 19 9 16.5z M16 13 Q19 12 20.5 14 Q19.5 18 17 19 Q16 16 16 13z" fill="#1d4f8f" opacity="0.75"/></svg><svg class="r" style="left:144px;top:915px;" width="25" height="25" viewBox="0 0 25 25"><rect x="1" y="1" width="15" height="19" fill="#6aa8d8" stroke="#333" stroke-width="2"/><g fill="#ddd"><rect x="2" y="3" width="1.5" height="1.5"/><rect x="2" y="7" width="1.5" height="1.5"/><rect x="2" y="11" width="1.5" height="1.5"/><rect x="2" y="15" width="1.5" height="1.5"/></g><path d="M12.5 21 V8 L22 6 V18" stroke="#333" stroke-width="2.8" fill="none"/><ellipse cx="10" cy="21" rx="4" ry="3" fill="#3a3a3a"/><ellipse cx="19.5" cy="19" rx="4" ry="3" fill="#3a3a3a"/></svg><svg class="r" style="left:144px;top:941px;" width="24" height="26" viewBox="0 0 24 26"><path d="M5 11 L19 11 L17.5 23 Q12 25 6.5 23z" fill="#f4f4f4" stroke="#999"/><path d="M2 3 L11 17" stroke="#a8a8a8" stroke-width="3"/><path d="M20 1.5 L12.5 17" stroke="#e8a020" stroke-width="2.2"/></svg><div class="r" style="left:142px;top:966px;width:178px;height:10px;overflow:hidden"><div class="t" style="left:28.50px;top:1px;font-size:13.5px;letter-spacing:0.630px;line-height:24px;color:#3c3c3c;">Other</div><svg class="r" style="left:2px;top:2px;" width="24" height="24" viewBox="0 0 24 24"><path d="M5 3 L8 2 L10 12 L7 12z" fill="#e8d040"/><path d="M2 6 L5 5 L8 12 L5 12z" fill="#d8c038"/><path d="M13 2 L17 1 L15 12 L12 12z" fill="#e8e8e8" stroke="#999" stroke-width="0.5"/></svg></div><div class="r" style="left:142px;top:975px;width:178px;height:1px;background:repeating-linear-gradient(90deg,#b0b0b0 0 4px,transparent 4px 8px);"></div><div class="r" style="left:320px;top:678px;width:3px;height:300px;background:#8a8a8a;"></div><div class="r" style="left:323px;top:678px;width:206px;height:300px;background:#fafafa;border:1px solid #8f8f8f;border-left:none;"></div><div class="r" style="left:323px;top:679px;width:205px;height:40px;background:#cdcdcd;"></div><svg class="r" style="left:328px;top:685px;" width="30" height="30" viewBox="0 0 40 40"><rect x="0" y="0" width="40" height="30" rx="2" fill="#1b1b1b"/><circle cx="20" cy="14.5" r="8" fill="none" stroke="#fff" stroke-width="1.6"/><path d="M17 10.5 L24.5 14.5 L17 18.5z" fill="#fff"/><rect x="0.5" y="30" width="39" height="9.5" rx="1" fill="#ececec" stroke="#bbb" stroke-width="0.6"/><rect x="3.5" y="33" width="10" height="4" fill="#d40000"/><rect x="13.5" y="33" width="7.5" height="4" fill="#aaa"/><rect x="21" y="33" width="15" height="4" fill="#858585"/></svg><div class="t" style="left:365.50px;top:680px;font-size:13.5px;letter-spacing:0.969px;line-height:24px;color:#8b8b8b;font-weight:bold;">Parole Media Player</div><div class="t" style="left:365.50px;top:696px;font-size:13.5px;letter-spacing:0.554px;line-height:24px;color:#8b8b8b;">Play your media</div><div class="t" style="left:365.50px;top:719px;font-size:13.5px;letter-spacing:0.865px;line-height:24px;color:#3c3c3c;font-weight:bold;">Removable Drives …</div><div class="t" style="left:365.50px;top:736px;font-size:13.5px;letter-spacing:0.556px;line-height:24px;color:#3c3c3c;">Configure manageme…</div><div class="t" style="left:365.50px;top:759px;font-size:13.5px;letter-spacing:0.669px;line-height:24px;color:#3c3c3c;font-weight:bold;">Disks</div><div class="t" style="left:365.50px;top:776px;font-size:13.5px;letter-spacing:0.429px;line-height:24px;color:#3c3c3c;">Manage Drives and M…</div><svg class="r" style="left:334px;top:722px;" width="18" height="33" viewBox="0 0 18 33"><rect x="1" y="0.8" width="16" height="25" rx="1.5" fill="#ececec" stroke="#c8c8c8" stroke-width="0.8"/><path d="M9 5 V19 M9 15 L5.5 12 V10.5 M9 13 L12.5 10 V9" stroke="#999" stroke-width="0.8" fill="none"/><path d="M9 4 L7.8 6 H10.2z M4.5 10 h2 v1.5 h-2z M11.5 8 L13.5 9.5 L11.5 10z" fill="#999"/><circle cx="9" cy="19.5" r="1.2" fill="#999"/><rect x="3.5" y="25.5" width="11" height="7" fill="#f8f8f8" stroke="#888" stroke-width="0.8"/><rect x="5.5" y="27.5" width="2.5" height="3" fill="#aaa"/><rect x="10" y="27.5" width="2.5" height="3" fill="#aaa"/></svg><svg class="r" style="left:330px;top:764px;" width="28" height="31" viewBox="0 0 28 31"><rect x="1" y="1" width="24" height="28" rx="2" fill="#f2f2f0" stroke="#bbb" stroke-width="0.6"/><circle cx="13" cy="15.5" r="10" fill="#c8c6c2"/><path d="M0.8 28 H25.2 V30 H0.8z" fill="#2a2838"/><g fill="#555"><rect x="2" y="2" width="2" height="1"/><rect x="22" y="2" width="2" height="1"/></g><path d="M8 9.5 Q6 13 9 15 Q11 16.5 13.5 15.5 L22 24 Q24 25 25 23 L26 21.5 L17 13 Q18 10 15.5 8 Q13 6.5 10.5 7.5 L13 10 L11.5 12 z" fill="#5a5862"/></svg><div class="r" style="left:141px;top:984px;width:101px;height:28px;background:linear-gradient(#dadada,#cbcbcb);border:1px solid #a5a5a5;border-radius:3px;"></div><svg class="r" style="left:144px;top:990px;" width="16" height="16" viewBox="0 0 16 16"><polygon points="15.17,7.29 15.17,8.71 13.10,9.55 12.70,10.51 13.57,12.57 12.57,13.57 10.51,12.70 9.55,13.10 8.71,15.17 7.29,15.17 6.45,13.10 5.49,12.70 3.43,13.57 2.43,12.57 3.30,10.51 2.90,9.55 0.83,8.71 0.83,7.29 2.90,6.45 3.30,5.49 2.43,3.43 3.43,2.43 5.49,3.30 6.45,2.90 7.29,0.83 8.71,0.83 9.55,2.90 10.51,3.30 12.57,2.43 13.57,3.43 12.70,5.49 13.10,6.45" fill="#dedede" stroke="#9a9a9a" stroke-width="0.9" stroke-linejoin="round"/><circle cx="8" cy="8" r="2.59" fill="#f4f4f4" stroke="#9a9a9a" stroke-width="0.9"/></svg><div class="t" style="left:162.50px;top:986px;font-size:13.5px;letter-spacing:0.334px;line-height:24px;color:#8d8d8d;">Preferences</div><div class="r" style="left:459px;top:984px;width:70px;height:28px;background:linear-gradient(#dadada,#cbcbcb);border:1px solid #a5a5a5;border-radius:3px;"></div><svg class="r" style="left:462px;top:988px;" width="18" height="18" viewBox="0 0 18 18"><polygon points="13.78,4.13 13.78,4.87 12.69,5.32 12.48,5.83 12.94,6.91 12.41,7.44 11.33,6.98 10.82,7.19 10.37,8.28 9.63,8.28 9.18,7.19 8.67,6.98 7.59,7.44 7.06,6.91 7.52,5.83 7.31,5.32 6.22,4.87 6.22,4.13 7.31,3.68 7.52,3.17 7.06,2.09 7.59,1.56 8.67,2.02 9.18,1.81 9.63,0.72 10.37,0.72 10.82,1.81 11.33,2.02 12.41,1.56 12.94,2.09 12.48,3.17 12.69,3.68" fill="#dedede" stroke="#9a9a9a" stroke-width="0.9" stroke-linejoin="round"/><circle cx="10" cy="4.5" r="1.37" fill="#f4f4f4" stroke="#9a9a9a" stroke-width="0.9"/><polygon points="8.48,12.11 8.48,12.89 7.33,13.36 7.11,13.90 7.59,15.04 7.04,15.59 5.90,15.11 5.36,15.33 4.89,16.48 4.11,16.48 3.64,15.33 3.10,15.11 1.96,15.59 1.41,15.04 1.89,13.90 1.67,13.36 0.52,12.89 0.52,12.11 1.67,11.64 1.89,11.10 1.41,9.96 1.96,9.41 3.10,9.89 3.64,9.67 4.11,8.52 4.89,8.52 5.36,9.67 5.90,9.89 7.04,9.41 7.59,9.96 7.11,11.10 7.33,11.64" fill="#dedede" stroke="#9a9a9a" stroke-width="0.9" stroke-linejoin="round"/><circle cx="4.5" cy="12.5" r="1.44" fill="#f4f4f4" stroke="#9a9a9a" stroke-width="0.9"/><polygon points="15.98,12.11 15.98,12.89 14.83,13.36 14.61,13.90 15.09,15.04 14.54,15.59 13.40,15.11 12.86,15.33 12.39,16.48 11.61,16.48 11.14,15.33 10.60,15.11 9.46,15.59 8.91,15.04 9.39,13.90 9.17,13.36 8.02,12.89 8.02,12.11 9.17,11.64 9.39,11.10 8.91,9.96 9.46,9.41 10.60,9.89 11.14,9.67 11.61,8.52 12.39,8.52 12.86,9.67 13.40,9.89 14.54,9.41 15.09,9.96 14.61,11.10 14.83,11.64" fill="#dedede" stroke="#9a9a9a" stroke-width="0.9" stroke-linejoin="round"/><circle cx="12" cy="12.5" r="1.44" fill="#f4f4f4" stroke="#9a9a9a" stroke-width="0.9"/></svg><div class="t" style="left:480.50px;top:986px;font-size:13.5px;letter-spacing:0.464px;line-height:24px;color:#8d8d8d;">Launch</div><div class="r" style="left:937px;top:505px;width:828px;height:517px;background:#cfcfcf;border:1px solid #4a4a4a;border-radius:5px 5px 0 0;box-shadow:0 1px 12px rgba(0,0,0,0.16);"></div><div class="r" style="left:938px;top:506px;width:826px;height:28px;background:linear-gradient(#cdcdcd,#c6c6c6);border-radius:4px 4px 0 0;"></div><svg class="r" style="left:943px;top:510px;" width="20" height="20" viewBox="0 0 20 20"><rect x="0.5" y="0.5" width="19" height="19" rx="1.5" fill="#2b2b2b" stroke="#111"/><rect x="2" y="2" width="16" height="16" fill="none" stroke="#666" stroke-width="1"/><text x="2.6" y="10" font-size="9" font-weight="bold" fill="#f2f2f2" font-family="Liberation Sans">$</text><rect x="8" y="11.2" width="5.5" height="1.8" fill="#f2f2f2"/></svg><div class="t" style="left:1281.41px;top:509px;font-size:12.5px;letter-spacing:0.837px;line-height:24px;color:#363636;font-weight:bold;">Terminal -</div><svg class="r" style="left:1674px;top:514px;" width="84" height="14" viewBox="0 0 84 14"><g stroke="#363636" stroke-width="2" fill="none"><path d="M3 9 L7 5 L11 9"/><path d="M25 10h9"/><rect x="49" y="3" width="7" height="7"/><path d="M72 2l8 8M80 2l-8 8"/></g></svg><div class="t" style="left:951.50px;top:535px;font-size:13.5px;letter-spacing:0.000px;line-height:24px;color:#3c3c3c;">File</div><div class="t" style="left:991.50px;top:535px;font-size:13.5px;letter-spacing:0.478px;line-height:24px;color:#3c3c3c;">Edit</div><div class="t" style="left:1034.50px;top:535px;font-size:13.5px;letter-spacing:0.458px;line-height:24px;color:#3c3c3c;">View</div><div class="t" style="left:1084.00px;top:535px;font-size:13.5px;letter-spacing:0.491px;line-height:24px;color:#3c3c3c;">Terminal</div><div class="t" style="left:1158.00px;top:535px;font-size:13.5px;letter-spacing:0.066px;line-height:24px;color:#3c3c3c;">Tabs</div><div class="t" style="left:1205.00px;top:535px;font-size:13.5px;letter-spacing:0.469px;line-height:24px;color:#3c3c3c;">Help</div><div class="r" style="left:942px;top:559px;width:802px;height:458px;background:#000;"></div><div class="t" style="left:943.00px;top:561px;font-size:16.5px;letter-spacing:0.098px;line-height:19px;color:#22e322;font-family:'Liberation Mono',monospace;">$ echo hello world</div><div class="t" style="left:943.00px;top:580px;font-size:16.5px;letter-spacing:0.098px;line-height:19px;color:#22e322;font-family:'Liberation Mono',monospace;">hello world</div><div class="t" style="left:943.00px;top:599px;font-size:16.5px;letter-spacing:0.098px;line-height:19px;color:#22e322;font-family:'Liberation Mono',monospace;">$</div><div class="r" style="left:963px;top:598px;width:10px;height:19px;background:#1fe81f;"></div><div class="r" style="left:1744px;top:559px;width:16px;height:458px;background:#f8f8f8;border-left:1px solid #e0e0e0;"></div><div class="r" style="left:1748px;top:562px;width:9px;height:452px;background:#d4d4d4;border:1px solid #8a8a8a;border-radius:5px;"></div><div class="r" style="left:0px;top:0px;width:1920px;height:26px;background:#232323;"></div><div class="r" style="left:26px;top:0px;width:8px;height:26px;background:#222222;"></div><div class="r" style="left:0px;top:26px;width:1920px;height:1px;background:#141414;"></div><svg class="r" style="left:4px;top:4px;" width="18" height="18" viewBox="0 0 18 18"><circle cx="9" cy="9" r="8.3" fill="#1aa6df" stroke="#2a1a1a" stroke-width="0.6"/><path d="M3.5 12 Q3 9 5 8.5 L4.5 5 L6.5 7 L7.5 4.5 L8.5 7.5 Q11 7 13 9 Q14.5 10.5 13.5 12 Q11 14.5 7 13.8 Q4.5 13.5 3.5 12z" fill="#fff"/><circle cx="10.5" cy="11" r="1" fill="#7cd0f0"/><circle cx="13" cy="6" r="1.2" fill="#bfe8f8"/></svg><div class="r" style="left:28px;top:8px;width:4px;height:1.5px;background:#dddddd;"></div><div class="r" style="left:28px;top:12px;width:4px;height:1.5px;background:#dddddd;"></div><div class="r" style="left:28px;top:16px;width:4px;height:1.5px;background:#dddddd;"></div><div class="r" style="left:34px;top:0px;width:199px;height:26px;background:linear-gradient(#3b3b3b,#323232);border-radius:3px;"></div><div class="t" style="left:62.00px;top:1px;font-size:13.5px;letter-spacing:0.392px;line-height:24px;color:#bdbdbd;">4.16-1.png (PNG Image, …</div><div class="r" style="left:234px;top:0px;width:199px;height:26px;background:linear-gradient(#3b3b3b,#323232);border-radius:3px;"></div><div class="t" style="left:262.00px;top:1px;font-size:13.5px;letter-spacing:0.583px;line-height:24px;color:#bdbdbd;">/home/schwinn/misc/pro…</div><div class="r" style="left:434px;top:0px;width:199px;height:26px;background:linear-gradient(#3b3b3b,#323232);border-radius:3px;"></div><div class="t" style="left:462.00px;top:1px;font-size:13.5px;letter-spacing:0.543px;line-height:24px;color:#bdbdbd;">xfce - Thunar</div><div class="r" style="left:634px;top:0px;width:199px;height:26px;background:linear-gradient(#30649c,#2a476a);border-radius:3px;"></div><div class="t" style="left:662.00px;top:1px;font-size:13.5px;letter-spacing:0.450px;line-height:24px;color:#f2f2f2;">Terminal -</div><div class="r" style="left:834px;top:0px;width:199px;height:26px;background:linear-gradient(#3b3b3b,#323232);border-radius:3px;"></div><div class="t" style="left:862.00px;top:1px;font-size:13.5px;letter-spacing:0.483px;line-height:24px;color:#bdbdbd;">Application Finder</div><div class="r" style="left:1034px;top:0px;width:199px;height:26px;background:linear-gradient(#242c38,#232831);border-radius:3px;"></div><div class="t" style="left:1062.00px;top:1px;font-size:13.5px;letter-spacing:0.447px;line-height:24px;color:#4e4e4e;">Screenshot</div><svg class="r" style="left:36px;top:4px;" width="18" height="18" viewBox="0 0 18 18"><defs><linearGradient id="ff" x1="0.2" y1="0" x2="0.5" y2="1"><stop offset="0" stop-color="#e8a030"/><stop offset="0.55" stop-color="#e05a30"/><stop offset="1" stop-color="#c8207a"/></linearGradient><radialGradient id="ffc" cx="0.5" cy="0.4" r="0.6"><stop offset="0" stop-color="#9a40c0"/><stop offset="1" stop-color="#4a3aa8"/></radialGradient></defs><path d="M9.5 1 Q17 3 17 10.5 Q17 17 10 17.5 Q3 17.5 2 11 Q1.5 7 3.5 5 Q4 7.5 6 8 Q6.5 5 9 4.5 Q12 4.5 12.5 7 Q11 3 9.5 1z" fill="url(#ff)"/><path d="M9.5 1 Q17 3 17 10.5 Q16 6 12.5 7 Q11 3 9.5 1z" fill="#c8b040"/><circle cx="9.5" cy="10" r="3.6" fill="url(#ffc)"/></svg><svg class="r" style="left:237px;top:5px;" width="17" height="17" viewBox="0 0 17 17"><rect x="0" y="0" width="14" height="16" fill="#a8a8a8" stroke="#777" stroke-width="0.6"/><g stroke="#555" stroke-width="0.8"><path d="M3 3.5h7M3 5.5h7M3 7.5h5M3 9.5h4M3 11.5h3"/></g><path d="M5 16 L15 5" stroke="#222" stroke-width="2.4"/><path d="M14 6 L16 4" stroke="#c090c8" stroke-width="2.4"/><path d="M4 17 L6 14" stroke="#c8b860" stroke-width="2.4"/></svg><svg class="r" style="left:437px;top:6px;" width="16" height="14" viewBox="0 0 16 14"><path d="M1 2.5 h6 l1 -1.5 h7 v3 h-14z" fill="#fff"/><rect x="0.5" y="3" width="15" height="10.5" fill="url(#fg)" stroke="#a88850" stroke-width="0.8"/></svg><svg class="r" style="left:637px;top:5px;" width="16" height="16" viewBox="0 0 16 16"><rect x="0.5" y="0.5" width="15" height="15" rx="1.5" fill="#1a1a1a" stroke="#000"/><rect x="1.8" y="1.8" width="12.4" height="12.4" fill="#252729" stroke="#9a9a9a" stroke-width="1"/><text x="3.3" y="9.5" font-size="7" font-weight="bold" fill="#eee" font-family="Liberation Sans">$</text><rect x="8" y="9.8" width="4" height="1.6" fill="#eee"/></svg><svg class="r" style="left:837px;top:5px;" width="17" height="17" viewBox="0 0 17 17"><circle cx="6" cy="5.8" r="4.3" fill="#505050" stroke="#6ab8f8" stroke-width="1.8"/><path d="M9 9 L13.5 13.5" stroke="#e0b030" stroke-width="2.2" stroke-linecap="round"/></svg><svg class="r" style="left:1037px;top:5px;" width="17" height="17" viewBox="0 0 17 17"><rect x="0.5" y="0.5" width="15" height="11" fill="#2c4868" stroke="#1e1e1e" stroke-width="1"/><path d="M5 2 L8 8 M11 2 L8 8" stroke="#555" stroke-width="1"/><circle cx="5.5" cy="8.8" r="1.3" fill="none" stroke="#555" stroke-width="0.8"/><circle cx="10.5" cy="8.8" r="1.3" fill="none" stroke="#555" stroke-width="0.8"/><path d="M4.5 14.5 L11.5 14.5 L10.5 12.5 L5.5 12.5z" fill="#444"/></svg><div class="r" style="left:1498px;top:0px;width:45px;height:26px;background:#1d5a98;"></div><svg class="r" style="left:1498px;top:0px;" width="45" height="26" viewBox="0 0 45 26"><rect x="5.5" y="3.5" width="27.5" height="11.5" fill="#2a7ad6" stroke="#fff" stroke-width="1"/><rect x="3.5" y="14.5" width="9.5" height="9" fill="#2a7ad6" stroke="#fff" stroke-width="1"/><rect x="22.5" y="12.5" width="18.5" height="11" fill="#6aa6e6" stroke="#fff" stroke-width="1"/></svg><div class="r" style="left:1543px;top:0px;width:139px;height:26px;background:#1b1b1b;"></div><div class="r" style="left:1589px;top:0px;width:1px;height:26px;background:#2b2b2b;"></div><div class="r" style="left:1635px;top:0px;width:1px;height:26px;background:#2b2b2b;"></div><div class="r" style="left:1682px;top:0px;width:1px;height:26px;background:#1a1a1a;"></div><svg class="r" style="left:1693px;top:4px;" width="20" height="20" viewBox="0 0 20 20"><path d="M6 2 L10 6 L7.5 6 L7.5 13 L4.5 13 L4.5 6 L2 6z" fill="#666"/><path d="M3 6.5h6" stroke="#ddd" stroke-width="1"/><path d="M14 18 L10 14 L12.5 14 L12.5 7 L15.5 7 L15.5 14 L18 14z" fill="#888"/><path d="M3 13.5h6" stroke="#bbb" stroke-width="0.8"/></svg><div class="t" style="left:1720px;top:3px;font-size:15px;line-height:20px;font-weight:bold;color:#4aa0e4;transform:scaleX(0.82);transform-origin:0 0;letter-spacing:0.5px">DE</div><svg class="r" style="left:1747px;top:5px;" width="17" height="16" viewBox="0 0 17 16"><path d="M0.5 5.5 H4 L8.5 1.5 V14.5 L4 10.5 H0.5z" fill="#f0f0f0"/><path d="M10.5 5.5 Q12 8 10.5 10.5 M12.5 3.5 Q15 8 12.5 12.5 M14.5 1.5 Q18 8 14.5 14.5" stroke="#f0f0f0" stroke-width="1.3" fill="none"/></svg><svg class="r" style="left:1774px;top:8px;" width="16" height="14" viewBox="0 0 16 14"><circle cx="7.5" cy="6.5" r="6.3" fill="#f4f4f4"/><path d="M8.5 1.8 L5 7.3 L7.5 7.3 L6.5 11.2 L10 5.7 L7.5 5.7z" fill="#262626"/></svg><div class="t" style="left:1805.50px;top:1px;font-size:13.5px;letter-spacing:0.271px;line-height:24px;color:#e6e6e6;">Fri  9 Dec, 21:29</div><div class="r" style="left:808px;top:1031px;width:305px;height:49px;background:rgba(30,30,30,0.88);"></div><svg class="r" style="left:812px;top:1044px;" width="40" height="32" viewBox="0 0 40 32"><rect x="0.5" y="0.5" width="39" height="30" rx="1" fill="url(#dtg)" stroke="#666" stroke-width="1"/><rect x="0.5" y="0.5" width="39" height="4" fill="#4d5258"/><path d="M5 31 L9 22.5 L31 22.5 L35 31z" fill="#3a5f78"/><g fill="#9fdcf7"><rect x="10.5" y="25.5" width="3.5" height="3"/><rect x="16" y="25.5" width="3.5" height="3"/><rect x="21.5" y="25.5" width="3.5" height="3"/><rect x="27" y="25.5" width="3.5" height="3"/></g></svg><div class="r" style="left:860px;top:1039px;width:1.5px;height:35px;background:#8a8a8a;"></div><svg class="r" style="left:871px;top:1039px;" width="35" height="36" viewBox="0 0 35 36"><rect x="0.8" y="0.8" width="33" height="34" rx="2" fill="#232120" stroke="#7a7a7a" stroke-width="1.6"/><text x="4" y="19" font-size="15" font-weight="bold" fill="#eee" font-family="Liberation Sans">$</text><rect x="13.5" y="18.5" width="8" height="2" fill="#eee"/></svg><svg class="r" style="left:917px;top:1040px;" width="38" height="33" viewBox="0 0 38 33"><defs><linearGradient id="hmf" x1="0" y1="0" x2="0" y2="1"><stop offset="0" stop-color="#f6f6f6"/><stop offset="1" stop-color="#cfcfcf"/></linearGradient></defs><path d="M3 7 V2 Q3 0.5 4.5 0.5 H16 L17 3 H35 V7z" fill="#fafafa" stroke="#999" stroke-width="0.6"/><rect x="0.5" y="6.5" width="37" height="26" rx="1" fill="url(#hmf)" stroke="#a8a8a8" stroke-width="0.8"/><path d="M19 12 L27 19 L25 19 L25 24.5 L21 24.5 L21 20.5 L17 20.5 L17 24.5 L13 24.5 L13 19 L11 19z" fill="#6e6e6e"/><rect x="22.5" y="12.5" width="1.5" height="2.5" fill="#6e6e6e"/></svg><svg class="r" style="left:965px;top:1037px;" width="39" height="39" viewBox="0 0 39 39"><circle cx="19.5" cy="19.5" r="19" fill="url(#globe)" stroke="#2a5ea8" stroke-width="0.8"/><path d="M7 9 Q12 5 17 6 Q19 9 15 10 Q13 13 10 12 Q9 16 12 18 Q8 20 6 16 Q5 12 7 9z M21 5 Q30 6 34 13 Q30 12 28 15 Q24 14 25 10 Q22 9 21 5z M14 21 Q19 20 21 24 Q20 29 17 34 Q14 32 14 27 Q12 24 14 21z M27 20 Q32 19 35 23 Q33 30 29 31 Q27 26 27 20z" fill="#1e4e8a" opacity="0.7"/></svg><svg class="r" style="left:987px;top:1051px;" width="22" height="27" viewBox="0 0 22 27"><path d="M1.5 1.5 L1.5 21 L6.5 16.5 L10.5 25 L14 23.5 L10 15 L17 15z" fill="#f4f4f4" stroke="#2a2a2a" stroke-width="1"/></svg><svg class="r" style="left:1012px;top:1035px;" width="41" height="41" viewBox="0 0 41 41"><circle cx="14.5" cy="14.5" r="11" fill="#2a2d30" stroke="#5fb0f0" stroke-width="3.6"/><path d="M22.5 22.5 L37 37" stroke="#e8b430" stroke-width="5" stroke-linecap="round"/></svg><div class="r" style="left:1060px;top:1039px;width:1.5px;height:35px;background:#8a8a8a;"></div><svg class="r" style="left:1067px;top:1041px;" width="42" height="34" viewBox="0 0 42 34"><path d="M3 7 V2.5 Q3 1 4.5 1 H17 L18.5 3.5 H40 V7z" fill="#fafafa" stroke="#bbb" stroke-width="0.6"/><rect x="0.5" y="6.5" width="41" height="27" rx="1" fill="url(#fg)" stroke="#bf9d62" stroke-width="1"/><path d="M1.5 8 H40.5" stroke="#fbf3e2" stroke-width="1"/></svg>
</body></html>
